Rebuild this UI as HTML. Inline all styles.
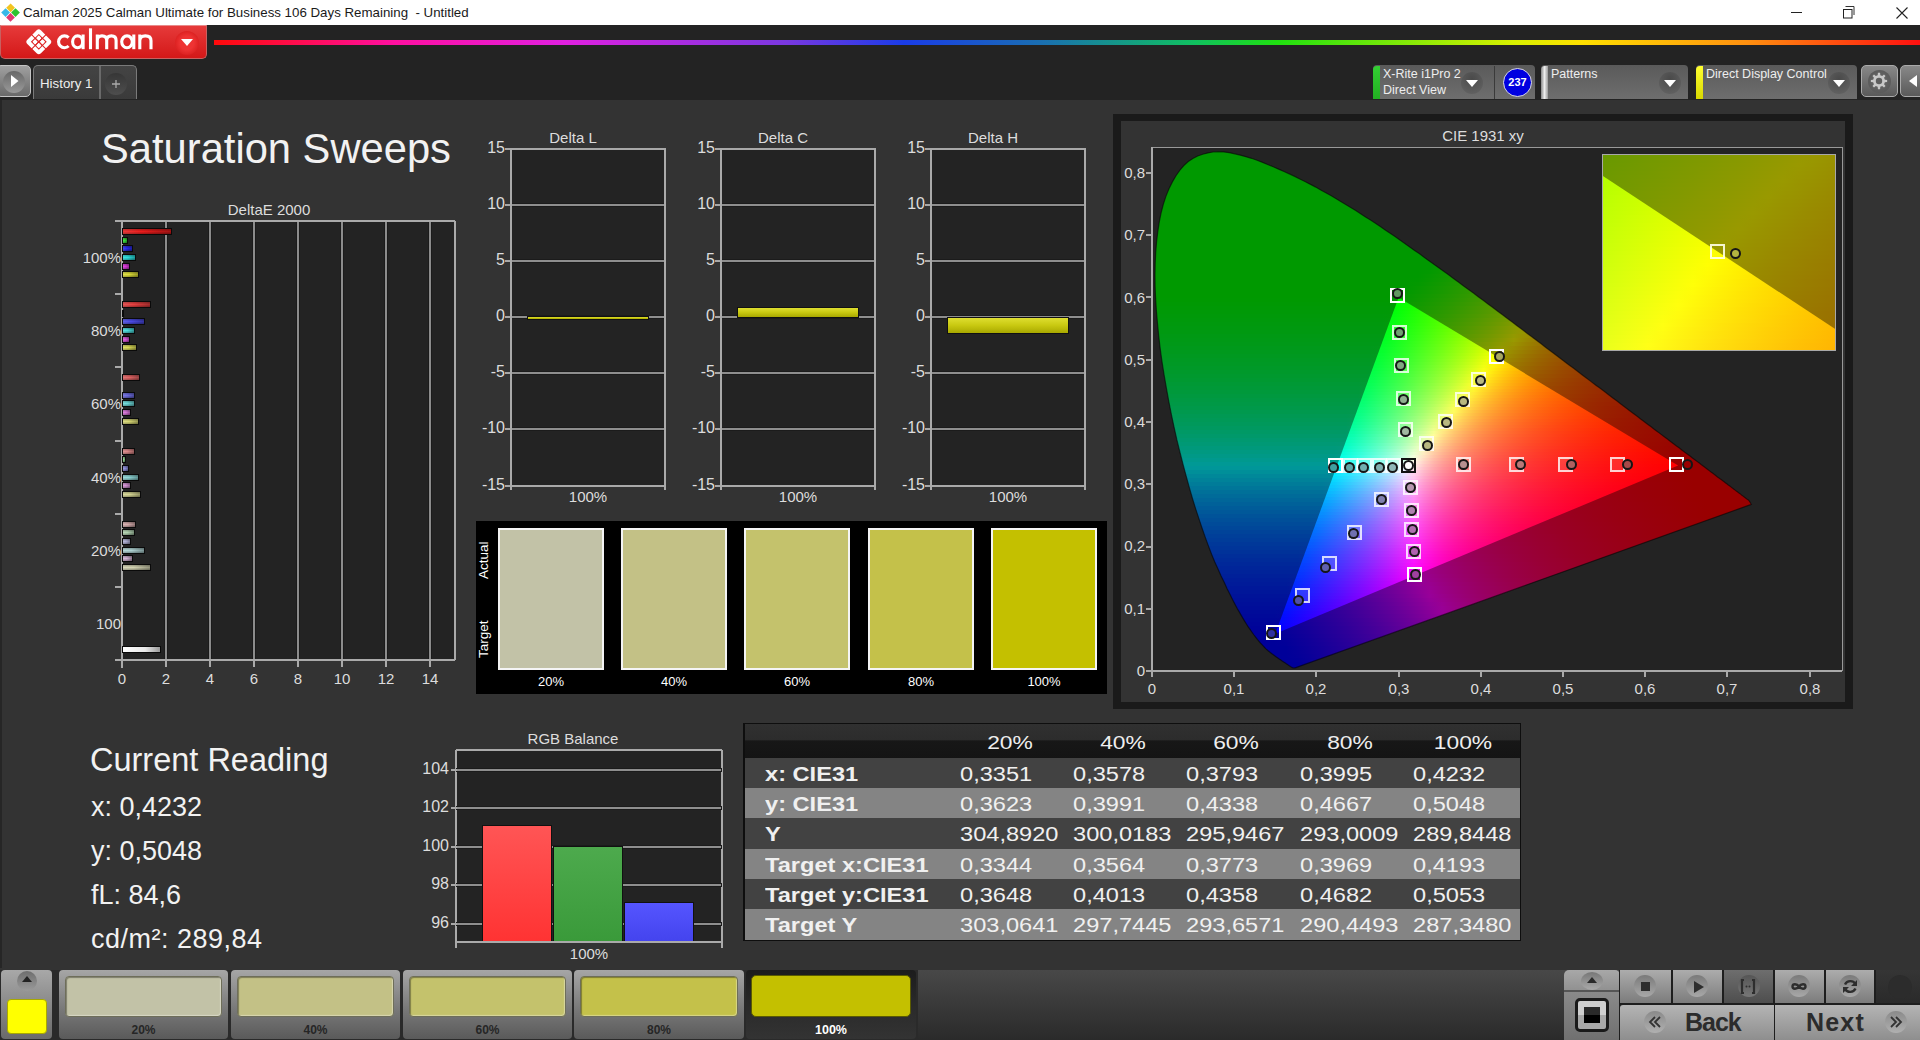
<!DOCTYPE html><html><head><meta charset="utf-8"><style>*{box-sizing:border-box}
html,body{margin:0;padding:0}
body{width:1920px;height:1040px;position:relative;overflow:hidden;background:#333;font-family:"Liberation Sans", sans-serif;}
.a{position:absolute}
.t{position:absolute;white-space:nowrap;line-height:1}
.rows>div{position:absolute;left:0;width:100%}
</style></head><body><div class="a" style="left:0;top:0;width:1920px;height:25px;background:#fff"></div><svg class="a" style="left:0;top:0" width="24" height="24"><path d="M10.6 3.4L15.0 7.8 10.6 12.2 6.2 7.8z" fill="#f2c420"/><path d="M15.5 8.2L19.9 12.6 15.5 17.0 11.1 12.6z" fill="#2ec42e"/><path d="M10.5 13.0L14.9 17.4 10.5 21.8 6.1 17.4z" fill="#e23a70"/><path d="M5.6 8.2L10.0 12.6 5.6 17.0 1.2 12.6z" fill="#38b8e8"/></svg><div class="t" style="left:23px;top:6px;font-size:13.3px;color:#1a1a1a">Calman 2025 Calman Ultimate for Business 106 Days Remaining &nbsp;- Untitled</div><div class="a" style="left:1791px;top:12px;width:11px;height:1px;background:#222"></div><svg class="a" style="left:1840px;top:4px" width="20" height="16" viewBox="0 0 20 16"><path d="M5.5 2.5h8.5v8.5" fill="none" stroke="#333" stroke-width="1"/><rect x="3.5" y="5.5" width="8.5" height="8.5" fill="none" stroke="#222" stroke-width="1"/></svg><svg class="a" style="left:1895px;top:6px" width="14" height="14" viewBox="0 0 14 14"><path d="M1.5 1.5l11 11M12.5 1.5l-11 11" stroke="#222" stroke-width="1.1"/></svg><div class="a" style="left:0;top:25px;width:1920px;height:75px;background:#232323"></div><div class="a" style="left:0;top:25px;width:207px;height:34px;background:linear-gradient(#e63a3a,#d41818);border:1px solid #c86060;border-top-color:#e88a8a;border-radius:0 0 5px 5px"></div><svg class="a" style="left:0;top:26px" width="207" height="33" viewBox="0 26 207 33"><g transform="translate(38.8 41.8) rotate(45)"><rect x="-9.6" y="-9.6" width="19.2" height="19.2" rx="3" fill="#fff"/><rect x="-5.6" y="-5.6" width="11.2" height="11.2" fill="#dd2424"/><rect x="-4.6" y="-4.6" width="4.1" height="4.1" rx="0.8" fill="#fff"/><rect x="0.5" y="-4.6" width="4.1" height="4.1" rx="0.8" fill="#fff"/><rect x="-4.6" y="0.5" width="4.1" height="4.1" rx="0.8" fill="#fff"/><rect x="0.5" y="0.5" width="4.1" height="4.1" rx="0.8" fill="#fff"/><path d="M-11 0H11M0 -11V11" stroke="#dd2424" stroke-width="1"/></g><g fill="none" stroke="#fff" stroke-width="3.1"><path d="M68.6 37.6A5.9 5.9 0 1 0 68.6 46"/><ellipse cx="77.6" cy="41.8" rx="5" ry="5.9"/><path d="M83.1 34.5V49.2"/><path d="M90.5 28.3V49.2"/><path d="M97.3 34.5V49.2M97.3 40.5C97.3 37.5 99 35.9 102 35.9S106.7 37.5 106.7 40.5V49.2M106.7 40.5C106.7 37.5 108.4 35.9 111.4 35.9S116.1 37.5 116.1 40.5V49.2"/><ellipse cx="127" cy="41.8" rx="5.3" ry="5.9"/><path d="M133.8 34.5V49.2"/><path d="M139.8 34.5V49.2M139.8 40.8C139.8 37.6 141.9 35.9 145.4 35.9S151 37.6 151 40.8V49.2"/></g></svg><div class="a" style="left:175px;top:31px;width:24px;height:24px;border-radius:50%;background:radial-gradient(#e33 40%,#c11 100%)"></div><svg class="a" style="left:180px;top:38px" width="14" height="10"><path d="M1 1h12l-6 7z" fill="#fff"/></svg><div class="a" style="left:214px;top:40px;width:1706px;height:5px;background:linear-gradient(90deg,#ff0a0a 0px,#ff10a0 180px,#e020e0 350px,#7a38e0 572px,#1a3ce8 690px,#1a70b0 830px,#10c060 980px,#20e010 1064px,#d8f000 1300px,#ffe000 1368px,#ff9010 1533px,#ff1010 1706px)"></div><div class="a" style="left:-4px;top:65px;width:35px;height:32px;border-radius:5px;background:linear-gradient(#a0a0a0,#6a6a6a);border:1.5px solid #c4c4c4"></div><div class="a" style="left:3px;top:71px;width:22px;height:22px;border-radius:50%;background:linear-gradient(#686868,#9a9a9a)"></div><svg class="a" style="left:10px;top:74px" width="10" height="14"><path d="M1 1l7.5 6-7.5 6z" fill="#fff"/></svg><div class="a" style="left:33px;top:65px;width:104px;height:34px;border-radius:5px 5px 0 0;background:linear-gradient(#444,#3a3a3a);border:1.5px solid #7a7a7a;border-bottom:none"></div><div class="a" style="left:99px;top:66px;width:1.5px;height:33px;background:#6a6a6a"></div><div class="t" style="left:40px;top:77px;font-size:13.3px;color:#eee">History 1</div><div class="a" style="left:105px;top:73px;width:22px;height:22px;border-radius:50%;background:linear-gradient(#363636,#4e4e4e)"></div><svg class="a" style="left:110px;top:78px" width="12" height="12"><path d="M6 2v8M2 6h8" stroke="#aaa" stroke-width="1.3"/></svg><div class="a" style="left:1373px;top:65px;width:162px;height:34px;border-radius:4px 4px 0 0;background:linear-gradient(#5a5a5a,#6e6e6e)"></div><div class="a" style="left:1373px;top:66px;width:7px;height:33px;border-radius:4px 0 0 0;background:linear-gradient(#33d033,#22b022)"></div><div class="t" style="left:1383px;top:68px;font-size:12.5px;color:#eee">X-Rite i1Pro 2</div><div class="t" style="left:1383px;top:84px;font-size:12.5px;color:#eee">Direct View</div><div class="a" style="left:1461px;top:72px;width:22px;height:22px;border-radius:50%;background:radial-gradient(circle at 50% 30%,#4a4a4a,#666)"></div><svg class="a" style="left:1465px;top:79px" width="14" height="9"><path d="M1 1h12l-6 7z" fill="#fff"/></svg><div class="a" style="left:1494px;top:66px;width:1px;height:33px;background:#3a3a3a"></div><div class="a" style="left:1503px;top:68px;width:29px;height:29px;border-radius:50%;background:#0000e0;border:1.5px solid #ddd"></div><div class="t" style="left:1503px;top:77px;width:29px;text-align:center;font-size:11px;font-weight:bold;color:#fff">237</div><div class="a" style="left:1541px;top:65px;width:147px;height:34px;border-radius:4px 4px 0 0;background:linear-gradient(#5a5a5a,#6e6e6e)"></div><div class="a" style="left:1541px;top:66px;width:7px;height:33px;border-radius:4px 0 0 0;background:linear-gradient(90deg,#888,#eee,#999)"></div><div class="t" style="left:1551px;top:68px;font-size:12.5px;color:#eee">Patterns</div><div class="a" style="left:1659px;top:72px;width:22px;height:22px;border-radius:50%;background:radial-gradient(circle at 50% 30%,#4a4a4a,#666)"></div><svg class="a" style="left:1663px;top:79px" width="14" height="9"><path d="M1 1h12l-6 7z" fill="#fff"/></svg><div class="a" style="left:1696px;top:65px;width:161px;height:34px;border-radius:4px 4px 0 0;background:linear-gradient(#5a5a5a,#6e6e6e)"></div><div class="a" style="left:1696px;top:66px;width:7px;height:33px;border-radius:4px 0 0 0;background:linear-gradient(#ffff30,#d8d800)"></div><div class="t" style="left:1706px;top:68px;font-size:12.5px;color:#eee">Direct Display Control</div><div class="a" style="left:1828px;top:72px;width:22px;height:22px;border-radius:50%;background:radial-gradient(circle at 50% 30%,#4a4a4a,#666)"></div><svg class="a" style="left:1832px;top:79px" width="14" height="9"><path d="M1 1h12l-6 7z" fill="#fff"/></svg><div class="a" style="left:1861px;top:65px;width:37px;height:32px;border-radius:5px;background:linear-gradient(#888,#5a5a5a);border:1px solid #aaa"></div><div class="a" style="left:1868px;top:70px;width:23px;height:23px;border-radius:50%;background:radial-gradient(#6a6a6a,#555)"></div><svg class="a" style="left:1868px;top:70px" width="22" height="22"><path d="M16.86 9.69 L19.13 9.94 L19.13 12.06 L16.86 12.31 L16.07 14.21 L17.50 16.00 L16.00 17.50 L14.21 16.07 L12.31 16.86 L12.06 19.13 L9.94 19.13 L9.69 16.86 L7.79 16.07 L6.00 17.50 L4.50 16.00 L5.93 14.21 L5.14 12.31 L2.87 12.06 L2.87 9.94 L5.14 9.69 L5.93 7.79 L4.50 6.00 L6.00 4.50 L7.79 5.93 L9.69 5.14 L9.94 2.87 L12.06 2.87 L12.31 5.14 L14.21 5.93 L16.00 4.50 L17.50 6.00 L16.07 7.79Z" fill="#c8c8c8"/><circle cx="11" cy="11" r="3.2" fill="#5e5e5e"/></svg><div class="a" style="left:1900px;top:65px;width:30px;height:32px;border-radius:5px;background:linear-gradient(#888,#5a5a5a);border:1px solid #aaa"></div><svg class="a" style="left:1908px;top:74px" width="10" height="14"><path d="M9 1L1 7l8 6z" fill="#fff"/></svg><div class="a" style="left:0;top:100px;width:1920px;height:870px;background:#333"></div><div class="a" style="left:0;top:100px;width:2px;height:870px;background:#262626"></div><div class="t" style="left:101px;top:128px;font-size:41.7px;color:#f2f2f2">Saturation Sweeps</div><div class="t" style="left:169px;top:202px;width:200px;text-align:center;font-size:15px;color:#ddd">DeltaE 2000</div><div class="a" style="left:122px;top:221px;width:333px;height:439px;background:#232323"></div><div class="a" style="left:165px;top:222px;width:2px;height:437px;background:#8c8c8c;box-shadow:0 0 0 1px #1b1b1b"></div><div class="a" style="left:209px;top:222px;width:2px;height:437px;background:#8c8c8c;box-shadow:0 0 0 1px #1b1b1b"></div><div class="a" style="left:253px;top:222px;width:2px;height:437px;background:#8c8c8c;box-shadow:0 0 0 1px #1b1b1b"></div><div class="a" style="left:297px;top:222px;width:2px;height:437px;background:#8c8c8c;box-shadow:0 0 0 1px #1b1b1b"></div><div class="a" style="left:341px;top:222px;width:2px;height:437px;background:#8c8c8c;box-shadow:0 0 0 1px #1b1b1b"></div><div class="a" style="left:385px;top:222px;width:2px;height:437px;background:#8c8c8c;box-shadow:0 0 0 1px #1b1b1b"></div><div class="a" style="left:429px;top:222px;width:2px;height:437px;background:#8c8c8c;box-shadow:0 0 0 1px #1b1b1b"></div><div class="a" style="left:454px;top:221px;width:2px;height:439px;background:#aaa"></div><div class="a" style="left:115px;top:220px;width:340px;height:2px;background:#aaa"></div><div class="a" style="left:121px;top:221px;width:2px;height:447px;background:#aaa"></div><div class="a" style="left:115px;top:659px;width:340px;height:2px;background:#aaa"></div><div class="a" style="left:115px;top:293px;width:7px;height:2px;background:#aaa"></div><div class="a" style="left:115px;top:366px;width:7px;height:2px;background:#aaa"></div><div class="a" style="left:115px;top:440px;width:7px;height:2px;background:#aaa"></div><div class="a" style="left:115px;top:513px;width:7px;height:2px;background:#aaa"></div><div class="a" style="left:115px;top:586px;width:7px;height:2px;background:#aaa"></div><div class="a" style="left:121px;top:660px;width:2px;height:7px;background:#aaa"></div><div class="t" style="left:102px;top:671px;width:40px;text-align:center;font-size:15px;color:#ddd">0</div><div class="a" style="left:165px;top:660px;width:2px;height:7px;background:#aaa"></div><div class="t" style="left:146px;top:671px;width:40px;text-align:center;font-size:15px;color:#ddd">2</div><div class="a" style="left:209px;top:660px;width:2px;height:7px;background:#aaa"></div><div class="t" style="left:190px;top:671px;width:40px;text-align:center;font-size:15px;color:#ddd">4</div><div class="a" style="left:253px;top:660px;width:2px;height:7px;background:#aaa"></div><div class="t" style="left:234px;top:671px;width:40px;text-align:center;font-size:15px;color:#ddd">6</div><div class="a" style="left:297px;top:660px;width:2px;height:7px;background:#aaa"></div><div class="t" style="left:278px;top:671px;width:40px;text-align:center;font-size:15px;color:#ddd">8</div><div class="a" style="left:341px;top:660px;width:2px;height:7px;background:#aaa"></div><div class="t" style="left:322px;top:671px;width:40px;text-align:center;font-size:15px;color:#ddd">10</div><div class="a" style="left:385px;top:660px;width:2px;height:7px;background:#aaa"></div><div class="t" style="left:366px;top:671px;width:40px;text-align:center;font-size:15px;color:#ddd">12</div><div class="a" style="left:429px;top:660px;width:2px;height:7px;background:#aaa"></div><div class="t" style="left:410px;top:671px;width:40px;text-align:center;font-size:15px;color:#ddd">14</div><div class="t" style="left:60px;top:250px;width:61px;text-align:right;font-size:15px;color:#ddd">100%</div><div class="t" style="left:60px;top:323px;width:61px;text-align:right;font-size:15px;color:#ddd">80%</div><div class="t" style="left:60px;top:396px;width:61px;text-align:right;font-size:15px;color:#ddd">60%</div><div class="t" style="left:60px;top:470px;width:61px;text-align:right;font-size:15px;color:#ddd">40%</div><div class="t" style="left:60px;top:543px;width:61px;text-align:right;font-size:15px;color:#ddd">20%</div><div class="t" style="left:60px;top:616px;width:61px;text-align:right;font-size:15px;color:#ddd">100</div><div class="a" style="left:122px;top:228px;width:50px;height:7px;background:linear-gradient(90deg,rgba(255,255,255,0.12),rgba(0,0,0,0) 40%,rgba(0,0,0,0.3)),linear-gradient(#ad1414,#ea1c1c 50%,#a31313);border:1px solid #0a0a0a"></div><div class="a" style="left:122px;top:237px;width:6px;height:7px;background:linear-gradient(90deg,rgba(255,255,255,0.12),rgba(0,0,0,0) 40%,rgba(0,0,0,0.3)),linear-gradient(#29a329,#37dc37 50%,#269926);border:1px solid #0a0a0a"></div><div class="a" style="left:122px;top:245px;width:11px;height:7px;background:linear-gradient(90deg,rgba(255,255,255,0.12),rgba(0,0,0,0) 40%,rgba(0,0,0,0.3)),linear-gradient(#1f1fad,#2929ea 50%,#1d1da3);border:1px solid #0a0a0a"></div><div class="a" style="left:122px;top:254px;width:14px;height:7px;background:linear-gradient(90deg,rgba(255,255,255,0.12),rgba(0,0,0,0) 40%,rgba(0,0,0,0.3)),linear-gradient(#1fa3a3,#29dcdc 50%,#1d9999);border:1px solid #0a0a0a"></div><div class="a" style="left:122px;top:263px;width:8px;height:7px;background:linear-gradient(90deg,rgba(255,255,255,0.12),rgba(0,0,0,0) 40%,rgba(0,0,0,0.3)),linear-gradient(#a329a3,#dc37dc 50%,#992699);border:1px solid #0a0a0a"></div><div class="a" style="left:122px;top:271px;width:17px;height:7px;background:linear-gradient(90deg,rgba(255,255,255,0.12),rgba(0,0,0,0) 40%,rgba(0,0,0,0.3)),linear-gradient(#a3a329,#dcdc37 50%,#999926);border:1px solid #0a0a0a"></div><div class="a" style="left:122px;top:301px;width:29px;height:7px;background:linear-gradient(90deg,rgba(255,255,255,0.12),rgba(0,0,0,0) 40%,rgba(0,0,0,0.3)),linear-gradient(#a92f2f,#e53f3f 50%,#9f2c2c);border:1px solid #0a0a0a"></div><div class="a" style="left:122px;top:310px;width:2px;height:7px;background:linear-gradient(90deg,rgba(255,255,255,0.12),rgba(0,0,0,0) 40%,rgba(0,0,0,0.3)),linear-gradient(#3fa13f,#55da55 50%,#3b973b);border:1px solid #0a0a0a"></div><div class="a" style="left:122px;top:318px;width:23px;height:7px;background:linear-gradient(90deg,rgba(255,255,255,0.12),rgba(0,0,0,0) 40%,rgba(0,0,0,0.3)),linear-gradient(#3737a9,#4a4ae5 50%,#34349f);border:1px solid #0a0a0a"></div><div class="a" style="left:122px;top:327px;width:13px;height:7px;background:linear-gradient(90deg,rgba(255,255,255,0.12),rgba(0,0,0,0) 40%,rgba(0,0,0,0.3)),linear-gradient(#37a1a1,#4adada 50%,#349797);border:1px solid #0a0a0a"></div><div class="a" style="left:122px;top:336px;width:8px;height:7px;background:linear-gradient(90deg,rgba(255,255,255,0.12),rgba(0,0,0,0) 40%,rgba(0,0,0,0.3)),linear-gradient(#a13fa1,#da55da 50%,#973b97);border:1px solid #0a0a0a"></div><div class="a" style="left:122px;top:344px;width:15px;height:7px;background:linear-gradient(90deg,rgba(255,255,255,0.12),rgba(0,0,0,0) 40%,rgba(0,0,0,0.3)),linear-gradient(#a1a13f,#dada55 50%,#97973b);border:1px solid #0a0a0a"></div><div class="a" style="left:122px;top:374px;width:18px;height:7px;background:linear-gradient(90deg,rgba(255,255,255,0.12),rgba(0,0,0,0) 40%,rgba(0,0,0,0.3)),linear-gradient(#a54949,#df6363 50%,#9b4545);border:1px solid #0a0a0a"></div><div class="a" style="left:122px;top:392px;width:13px;height:7px;background:linear-gradient(90deg,rgba(255,255,255,0.12),rgba(0,0,0,0) 40%,rgba(0,0,0,0.3)),linear-gradient(#5050a5,#6b6bdf 50%,#4b4b9b);border:1px solid #0a0a0a"></div><div class="a" style="left:122px;top:400px;width:13px;height:7px;background:linear-gradient(90deg,rgba(255,255,255,0.12),rgba(0,0,0,0) 40%,rgba(0,0,0,0.3)),linear-gradient(#509f9f,#6bd7d7 50%,#4b9595);border:1px solid #0a0a0a"></div><div class="a" style="left:122px;top:409px;width:9px;height:7px;background:linear-gradient(90deg,rgba(255,255,255,0.12),rgba(0,0,0,0) 40%,rgba(0,0,0,0.3)),linear-gradient(#9f569f,#d774d7 50%,#955095);border:1px solid #0a0a0a"></div><div class="a" style="left:122px;top:418px;width:17px;height:7px;background:linear-gradient(90deg,rgba(255,255,255,0.12),rgba(0,0,0,0) 40%,rgba(0,0,0,0.3)),linear-gradient(#9f9f56,#d7d774 50%,#959550);border:1px solid #0a0a0a"></div><div class="a" style="left:122px;top:448px;width:13px;height:7px;background:linear-gradient(90deg,rgba(255,255,255,0.12),rgba(0,0,0,0) 40%,rgba(0,0,0,0.3)),linear-gradient(#a16464,#da8787 50%,#975e5e);border:1px solid #0a0a0a"></div><div class="a" style="left:122px;top:456px;width:4px;height:7px;background:linear-gradient(90deg,rgba(255,255,255,0.12),rgba(0,0,0,0) 40%,rgba(0,0,0,0.3)),linear-gradient(#6c9d6c,#92d492 50%,#659365);border:1px solid #0a0a0a"></div><div class="a" style="left:122px;top:465px;width:7px;height:7px;background:linear-gradient(90deg,rgba(255,255,255,0.12),rgba(0,0,0,0) 40%,rgba(0,0,0,0.3)),linear-gradient(#6868a1,#8c8cda 50%,#626297);border:1px solid #0a0a0a"></div><div class="a" style="left:122px;top:474px;width:17px;height:7px;background:linear-gradient(90deg,rgba(255,255,255,0.12),rgba(0,0,0,0) 40%,rgba(0,0,0,0.3)),linear-gradient(#689d9d,#8cd4d4 50%,#629393);border:1px solid #0a0a0a"></div><div class="a" style="left:122px;top:482px;width:9px;height:7px;background:linear-gradient(90deg,rgba(255,255,255,0.12),rgba(0,0,0,0) 40%,rgba(0,0,0,0.3)),linear-gradient(#9d6c9d,#d492d4 50%,#936593);border:1px solid #0a0a0a"></div><div class="a" style="left:122px;top:491px;width:19px;height:7px;background:linear-gradient(90deg,rgba(255,255,255,0.12),rgba(0,0,0,0) 40%,rgba(0,0,0,0.3)),linear-gradient(#9d9d6c,#d4d492 50%,#939365);border:1px solid #0a0a0a"></div><div class="a" style="left:122px;top:521px;width:14px;height:7px;background:linear-gradient(90deg,rgba(255,255,255,0.12),rgba(0,0,0,0) 40%,rgba(0,0,0,0.3)),linear-gradient(#9d7e7e,#d4abab 50%,#937777);border:1px solid #0a0a0a"></div><div class="a" style="left:122px;top:529px;width:13px;height:7px;background:linear-gradient(90deg,rgba(255,255,255,0.12),rgba(0,0,0,0) 40%,rgba(0,0,0,0.3)),linear-gradient(#839b83,#b0d1b0 50%,#7a917a);border:1px solid #0a0a0a"></div><div class="a" style="left:122px;top:538px;width:9px;height:7px;background:linear-gradient(90deg,rgba(255,255,255,0.12),rgba(0,0,0,0) 40%,rgba(0,0,0,0.3)),linear-gradient(#81819d,#aeaed4 50%,#787893);border:1px solid #0a0a0a"></div><div class="a" style="left:122px;top:547px;width:23px;height:7px;background:linear-gradient(90deg,rgba(255,255,255,0.12),rgba(0,0,0,0) 40%,rgba(0,0,0,0.3)),linear-gradient(#819b9b,#aed1d1 50%,#789191);border:1px solid #0a0a0a"></div><div class="a" style="left:122px;top:555px;width:11px;height:7px;background:linear-gradient(90deg,rgba(255,255,255,0.12),rgba(0,0,0,0) 40%,rgba(0,0,0,0.3)),linear-gradient(#9b839b,#d1b0d1 50%,#917a91);border:1px solid #0a0a0a"></div><div class="a" style="left:122px;top:564px;width:29px;height:7px;background:linear-gradient(90deg,rgba(255,255,255,0.12),rgba(0,0,0,0) 40%,rgba(0,0,0,0.3)),linear-gradient(#9b9b83,#d1d1b0 50%,#91917a);border:1px solid #0a0a0a"></div><div class="a" style="left:122px;top:646px;width:39px;height:7px;background:linear-gradient(90deg,#fff,#e8e8e8 60%,#999);border:1px solid #0a0a0a"></div><div class="t" style="left:496px;top:130px;width:154px;text-align:center;font-size:15px;color:#ddd">Delta L</div><div class="a" style="left:511px;top:149px;width:154px;height:337px;background:#232323"></div><div class="a" style="left:505px;top:148px;width:161px;height:2px;background:#a8a8a8"></div><div class="t" style="left:465px;top:140px;width:40px;text-align:right;font-size:16px;color:#ddd">15</div><div class="a" style="left:512px;top:204px;width:152px;height:2px;background:#8e8e8e;box-shadow:0 0 0 1px #1b1b1b"></div><div class="a" style="left:505px;top:204px;width:7px;height:2px;background:#a8a8a8"></div><div class="t" style="left:465px;top:196px;width:40px;text-align:right;font-size:16px;color:#ddd">10</div><div class="a" style="left:512px;top:260px;width:152px;height:2px;background:#8e8e8e;box-shadow:0 0 0 1px #1b1b1b"></div><div class="a" style="left:505px;top:260px;width:7px;height:2px;background:#a8a8a8"></div><div class="t" style="left:465px;top:252px;width:40px;text-align:right;font-size:16px;color:#ddd">5</div><div class="a" style="left:512px;top:316px;width:152px;height:2px;background:#8e8e8e;box-shadow:0 0 0 1px #1b1b1b"></div><div class="a" style="left:505px;top:316px;width:7px;height:2px;background:#a8a8a8"></div><div class="t" style="left:465px;top:308px;width:40px;text-align:right;font-size:16px;color:#ddd">0</div><div class="a" style="left:512px;top:372px;width:152px;height:2px;background:#8e8e8e;box-shadow:0 0 0 1px #1b1b1b"></div><div class="a" style="left:505px;top:372px;width:7px;height:2px;background:#a8a8a8"></div><div class="t" style="left:465px;top:364px;width:40px;text-align:right;font-size:16px;color:#ddd">-5</div><div class="a" style="left:512px;top:428px;width:152px;height:2px;background:#8e8e8e;box-shadow:0 0 0 1px #1b1b1b"></div><div class="a" style="left:505px;top:428px;width:7px;height:2px;background:#a8a8a8"></div><div class="t" style="left:465px;top:420px;width:40px;text-align:right;font-size:16px;color:#ddd">-10</div><div class="a" style="left:505px;top:485px;width:161px;height:2px;background:#a8a8a8"></div><div class="t" style="left:465px;top:477px;width:40px;text-align:right;font-size:16px;color:#ddd">-15</div><div class="a" style="left:510px;top:149px;width:2px;height:341px;background:#aaa"></div><div class="a" style="left:664px;top:149px;width:2px;height:341px;background:#aaa"></div><div class="t" style="left:511px;top:489px;width:154px;text-align:center;font-size:15px;color:#ddd">100%</div><div class="a" style="left:527px;top:316px;width:122px;height:4px;background:linear-gradient(#dede30,#c8c810 50%,#a8a800);border:1px solid #111"></div><div class="t" style="left:706px;top:130px;width:154px;text-align:center;font-size:15px;color:#ddd">Delta C</div><div class="a" style="left:721px;top:149px;width:154px;height:337px;background:#232323"></div><div class="a" style="left:715px;top:148px;width:161px;height:2px;background:#a8a8a8"></div><div class="t" style="left:675px;top:140px;width:40px;text-align:right;font-size:16px;color:#ddd">15</div><div class="a" style="left:722px;top:204px;width:152px;height:2px;background:#8e8e8e;box-shadow:0 0 0 1px #1b1b1b"></div><div class="a" style="left:715px;top:204px;width:7px;height:2px;background:#a8a8a8"></div><div class="t" style="left:675px;top:196px;width:40px;text-align:right;font-size:16px;color:#ddd">10</div><div class="a" style="left:722px;top:260px;width:152px;height:2px;background:#8e8e8e;box-shadow:0 0 0 1px #1b1b1b"></div><div class="a" style="left:715px;top:260px;width:7px;height:2px;background:#a8a8a8"></div><div class="t" style="left:675px;top:252px;width:40px;text-align:right;font-size:16px;color:#ddd">5</div><div class="a" style="left:722px;top:316px;width:152px;height:2px;background:#8e8e8e;box-shadow:0 0 0 1px #1b1b1b"></div><div class="a" style="left:715px;top:316px;width:7px;height:2px;background:#a8a8a8"></div><div class="t" style="left:675px;top:308px;width:40px;text-align:right;font-size:16px;color:#ddd">0</div><div class="a" style="left:722px;top:372px;width:152px;height:2px;background:#8e8e8e;box-shadow:0 0 0 1px #1b1b1b"></div><div class="a" style="left:715px;top:372px;width:7px;height:2px;background:#a8a8a8"></div><div class="t" style="left:675px;top:364px;width:40px;text-align:right;font-size:16px;color:#ddd">-5</div><div class="a" style="left:722px;top:428px;width:152px;height:2px;background:#8e8e8e;box-shadow:0 0 0 1px #1b1b1b"></div><div class="a" style="left:715px;top:428px;width:7px;height:2px;background:#a8a8a8"></div><div class="t" style="left:675px;top:420px;width:40px;text-align:right;font-size:16px;color:#ddd">-10</div><div class="a" style="left:715px;top:485px;width:161px;height:2px;background:#a8a8a8"></div><div class="t" style="left:675px;top:477px;width:40px;text-align:right;font-size:16px;color:#ddd">-15</div><div class="a" style="left:720px;top:149px;width:2px;height:341px;background:#aaa"></div><div class="a" style="left:874px;top:149px;width:2px;height:341px;background:#aaa"></div><div class="t" style="left:721px;top:489px;width:154px;text-align:center;font-size:15px;color:#ddd">100%</div><div class="a" style="left:737px;top:307px;width:122px;height:11px;background:linear-gradient(#dede30,#c8c810 50%,#a8a800);border:1px solid #111"></div><div class="t" style="left:916px;top:130px;width:154px;text-align:center;font-size:15px;color:#ddd">Delta H</div><div class="a" style="left:931px;top:149px;width:154px;height:337px;background:#232323"></div><div class="a" style="left:925px;top:148px;width:161px;height:2px;background:#a8a8a8"></div><div class="t" style="left:885px;top:140px;width:40px;text-align:right;font-size:16px;color:#ddd">15</div><div class="a" style="left:932px;top:204px;width:152px;height:2px;background:#8e8e8e;box-shadow:0 0 0 1px #1b1b1b"></div><div class="a" style="left:925px;top:204px;width:7px;height:2px;background:#a8a8a8"></div><div class="t" style="left:885px;top:196px;width:40px;text-align:right;font-size:16px;color:#ddd">10</div><div class="a" style="left:932px;top:260px;width:152px;height:2px;background:#8e8e8e;box-shadow:0 0 0 1px #1b1b1b"></div><div class="a" style="left:925px;top:260px;width:7px;height:2px;background:#a8a8a8"></div><div class="t" style="left:885px;top:252px;width:40px;text-align:right;font-size:16px;color:#ddd">5</div><div class="a" style="left:932px;top:316px;width:152px;height:2px;background:#8e8e8e;box-shadow:0 0 0 1px #1b1b1b"></div><div class="a" style="left:925px;top:316px;width:7px;height:2px;background:#a8a8a8"></div><div class="t" style="left:885px;top:308px;width:40px;text-align:right;font-size:16px;color:#ddd">0</div><div class="a" style="left:932px;top:372px;width:152px;height:2px;background:#8e8e8e;box-shadow:0 0 0 1px #1b1b1b"></div><div class="a" style="left:925px;top:372px;width:7px;height:2px;background:#a8a8a8"></div><div class="t" style="left:885px;top:364px;width:40px;text-align:right;font-size:16px;color:#ddd">-5</div><div class="a" style="left:932px;top:428px;width:152px;height:2px;background:#8e8e8e;box-shadow:0 0 0 1px #1b1b1b"></div><div class="a" style="left:925px;top:428px;width:7px;height:2px;background:#a8a8a8"></div><div class="t" style="left:885px;top:420px;width:40px;text-align:right;font-size:16px;color:#ddd">-10</div><div class="a" style="left:925px;top:485px;width:161px;height:2px;background:#a8a8a8"></div><div class="t" style="left:885px;top:477px;width:40px;text-align:right;font-size:16px;color:#ddd">-15</div><div class="a" style="left:930px;top:149px;width:2px;height:341px;background:#aaa"></div><div class="a" style="left:1084px;top:149px;width:2px;height:341px;background:#aaa"></div><div class="t" style="left:931px;top:489px;width:154px;text-align:center;font-size:15px;color:#ddd">100%</div><div class="a" style="left:947px;top:317px;width:122px;height:17px;background:linear-gradient(#dede30,#c8c810 50%,#a8a800);border:1px solid #111"></div><div class="a" style="left:476px;top:521px;width:631px;height:173px;background:#000"></div><div class="t" style="left:477px;top:579px;font-size:13.5px;color:#fff;transform:rotate(-90deg);transform-origin:left top">Actual</div><div class="t" style="left:477px;top:658px;font-size:13.5px;color:#fff;transform:rotate(-90deg);transform-origin:left top">Target</div><div class="a" style="left:498px;top:528px;width:106px;height:142px;background:#c2c2a7;border:2px solid #f4f4f4"></div><div class="t" style="left:498px;top:675px;width:106px;text-align:center;font-size:13px;color:#fff">20%</div><div class="a" style="left:621px;top:528px;width:106px;height:142px;background:#c3c186;border:2px solid #f4f4f4"></div><div class="t" style="left:621px;top:675px;width:106px;text-align:center;font-size:13px;color:#fff">40%</div><div class="a" style="left:744px;top:528px;width:106px;height:142px;background:#c4c26c;border:2px solid #f4f4f4"></div><div class="t" style="left:744px;top:675px;width:106px;text-align:center;font-size:13px;color:#fff">60%</div><div class="a" style="left:868px;top:528px;width:106px;height:142px;background:#c4c14a;border:2px solid #f4f4f4"></div><div class="t" style="left:868px;top:675px;width:106px;text-align:center;font-size:13px;color:#fff">80%</div><div class="a" style="left:991px;top:528px;width:106px;height:142px;background:#c4c000;border:2px solid #f4f4f4"></div><div class="t" style="left:991px;top:675px;width:106px;text-align:center;font-size:13px;color:#fff">100%</div><div class="a" style="left:1113px;top:114px;width:740px;height:595px;background:#1a1a1a"></div><div class="a" style="left:1121px;top:121px;width:724px;height:581px;background:#333"></div><div class="t" style="left:1121px;top:128px;width:724px;text-align:center;font-size:15px;color:#ddd">CIE 1931 xy</div><div class="a" style="left:1152px;top:147px;width:690px;height:524px;background:#232323"></div><div class="a" style="left:1152px;top:147px;width:690px;height:1px;background:#999"></div><div class="a" style="left:1842px;top:147px;width:1px;height:524px;background:#999"></div><div class="a" style="left:1151px;top:147px;width:2px;height:530px;background:#aaa"></div><div class="a" style="left:1146px;top:670px;width:696px;height:2px;background:#aaa"></div><div class="a" style="left:1151px;top:671px;width:2px;height:6px;background:#aaa"></div><div class="t" style="left:1127px;top:681px;width:50px;text-align:center;font-size:15px;color:#ddd">0</div><div class="a" style="left:1146px;top:670px;width:6px;height:2px;background:#aaa"></div><div class="t" style="left:1115px;top:663px;width:30px;text-align:right;font-size:15px;color:#ddd">0</div><div class="a" style="left:1233px;top:671px;width:2px;height:6px;background:#aaa"></div><div class="t" style="left:1209px;top:681px;width:50px;text-align:center;font-size:15px;color:#ddd">0,1</div><div class="a" style="left:1146px;top:608px;width:6px;height:2px;background:#aaa"></div><div class="t" style="left:1115px;top:601px;width:30px;text-align:right;font-size:15px;color:#ddd">0,1</div><div class="a" style="left:1315px;top:671px;width:2px;height:6px;background:#aaa"></div><div class="t" style="left:1291px;top:681px;width:50px;text-align:center;font-size:15px;color:#ddd">0,2</div><div class="a" style="left:1146px;top:546px;width:6px;height:2px;background:#aaa"></div><div class="t" style="left:1115px;top:538px;width:30px;text-align:right;font-size:15px;color:#ddd">0,2</div><div class="a" style="left:1398px;top:671px;width:2px;height:6px;background:#aaa"></div><div class="t" style="left:1374px;top:681px;width:50px;text-align:center;font-size:15px;color:#ddd">0,3</div><div class="a" style="left:1146px;top:483px;width:6px;height:2px;background:#aaa"></div><div class="t" style="left:1115px;top:476px;width:30px;text-align:right;font-size:15px;color:#ddd">0,3</div><div class="a" style="left:1480px;top:671px;width:2px;height:6px;background:#aaa"></div><div class="t" style="left:1456px;top:681px;width:50px;text-align:center;font-size:15px;color:#ddd">0,4</div><div class="a" style="left:1146px;top:421px;width:6px;height:2px;background:#aaa"></div><div class="t" style="left:1115px;top:414px;width:30px;text-align:right;font-size:15px;color:#ddd">0,4</div><div class="a" style="left:1562px;top:671px;width:2px;height:6px;background:#aaa"></div><div class="t" style="left:1538px;top:681px;width:50px;text-align:center;font-size:15px;color:#ddd">0,5</div><div class="a" style="left:1146px;top:359px;width:6px;height:2px;background:#aaa"></div><div class="t" style="left:1115px;top:352px;width:30px;text-align:right;font-size:15px;color:#ddd">0,5</div><div class="a" style="left:1644px;top:671px;width:2px;height:6px;background:#aaa"></div><div class="t" style="left:1620px;top:681px;width:50px;text-align:center;font-size:15px;color:#ddd">0,6</div><div class="a" style="left:1146px;top:296px;width:6px;height:2px;background:#aaa"></div><div class="t" style="left:1115px;top:290px;width:30px;text-align:right;font-size:15px;color:#ddd">0,6</div><div class="a" style="left:1726px;top:671px;width:2px;height:6px;background:#aaa"></div><div class="t" style="left:1702px;top:681px;width:50px;text-align:center;font-size:15px;color:#ddd">0,7</div><div class="a" style="left:1146px;top:234px;width:6px;height:2px;background:#aaa"></div><div class="t" style="left:1115px;top:227px;width:30px;text-align:right;font-size:15px;color:#ddd">0,7</div><div class="a" style="left:1809px;top:671px;width:2px;height:6px;background:#aaa"></div><div class="t" style="left:1785px;top:681px;width:50px;text-align:center;font-size:15px;color:#ddd">0,8</div><div class="a" style="left:1146px;top:172px;width:6px;height:2px;background:#aaa"></div><div class="t" style="left:1115px;top:165px;width:30px;text-align:right;font-size:15px;color:#ddd">0,8</div><div class="a rows" style="left:1154px;top:150px;width:604px;height:520px;clip-path:polygon(141.1px 517.9px,141.1px 517.9px,141.1px 517.9px,141.0px 517.9px,141.0px 517.9px,140.9px 517.9px,140.9px 517.9px,140.8px 517.9px,140.8px 518.0px,140.7px 518.0px,140.6px 518.0px,140.6px 518.0px,140.5px 518.0px,140.4px 518.0px,140.3px 518.0px,140.2px 518.0px,140.1px 518.0px,140.0px 518.0px,139.9px 518.0px,139.7px 518.0px,139.6px 518.0px,139.5px 518.0px,139.3px 518.0px,139.1px 517.9px,138.9px 517.8px,138.6px 517.7px,138.3px 517.6px,138.0px 517.4px,137.7px 517.2px,137.3px 517.0px,136.8px 516.7px,136.3px 516.4px,135.8px 516.0px,135.3px 515.7px,134.6px 515.2px,133.9px 514.8px,133.1px 514.2px,132.3px 513.7px,131.4px 513.1px,130.4px 512.4px,129.3px 511.7px,128.1px 510.9px,126.8px 510.0px,125.2px 508.9px,123.5px 507.7px,121.6px 506.4px,119.7px 505.0px,117.9px 503.7px,116.3px 502.5px,115.0px 501.4px,113.8px 500.5px,112.8px 499.6px,111.7px 498.6px,110.6px 497.5px,109.4px 496.2px,108.0px 494.7px,106.5px 493.1px,105.0px 491.3px,103.4px 489.4px,101.8px 487.3px,100.0px 485.0px,98.2px 482.5px,96.4px 479.9px,94.4px 477.1px,92.4px 474.0px,90.3px 470.6px,88.1px 466.9px,85.8px 462.9px,83.4px 458.7px,81.0px 454.2px,78.4px 449.3px,75.8px 444.1px,73.0px 438.4px,70.2px 432.3px,67.1px 425.9px,64.0px 419.1px,60.8px 411.9px,57.6px 404.2px,54.5px 396.1px,51.3px 387.4px,48.1px 378.2px,44.9px 368.6px,41.6px 358.6px,38.4px 348.2px,35.3px 337.4px,32.2px 326.1px,29.0px 314.2px,25.9px 302.0px,22.8px 289.4px,20.0px 276.8px,17.3px 264.1px,14.8px 251.3px,12.4px 238.2px,10.1px 224.9px,8.0px 211.7px,6.2px 198.6px,4.7px 185.8px,3.5px 173.3px,2.4px 160.8px,1.6px 148.4px,1.1px 136.3px,1.0px 124.6px,1.2px 113.4px,1.7px 102.5px,2.6px 91.8px,3.8px 81.6px,5.3px 71.8px,7.2px 62.5px,9.4px 54.0px,12.0px 46.1px,15.0px 38.7px,18.4px 31.9px,22.0px 25.7px,25.9px 20.2px,29.9px 15.5px,34.3px 11.6px,38.9px 8.5px,43.7px 6.0px,48.8px 4.2px,53.9px 2.9px,59.1px 2.0px,64.3px 1.6px,69.7px 1.9px,75.2px 2.7px,80.7px 3.8px,86.3px 5.2px,91.8px 6.7px,97.4px 8.3px,103.0px 10.2px,108.6px 12.4px,114.2px 14.7px,119.7px 17.0px,125.2px 19.4px,130.5px 21.7px,135.8px 24.1px,141.1px 26.6px,146.3px 29.2px,151.4px 31.8px,156.5px 34.4px,161.7px 37.1px,166.7px 39.9px,171.8px 42.7px,176.8px 45.6px,181.8px 48.5px,186.7px 51.4px,191.7px 54.4px,196.7px 57.5px,201.7px 60.6px,206.6px 63.7px,211.5px 66.9px,216.5px 70.1px,221.4px 73.3px,226.3px 76.6px,231.2px 79.9px,236.1px 83.3px,241.0px 86.6px,245.9px 90.0px,250.8px 93.4px,255.7px 96.9px,260.6px 100.4px,265.5px 103.8px,270.4px 107.4px,275.3px 110.9px,280.2px 114.4px,285.1px 118.0px,290.0px 121.5px,294.9px 125.1px,299.8px 128.7px,304.7px 132.3px,309.6px 135.9px,314.5px 139.5px,319.4px 143.1px,324.2px 146.7px,329.1px 150.3px,334.0px 154.0px,338.8px 157.6px,343.7px 161.2px,348.5px 164.8px,353.4px 168.5px,358.2px 172.1px,363.0px 175.7px,367.8px 179.3px,372.6px 182.9px,377.4px 186.5px,382.1px 190.1px,386.8px 193.6px,391.5px 197.2px,396.2px 200.7px,400.9px 204.2px,405.5px 207.7px,410.1px 211.2px,414.7px 214.7px,419.3px 218.1px,423.8px 221.5px,428.3px 224.9px,432.7px 228.2px,437.1px 231.6px,441.5px 234.9px,445.8px 238.1px,450.1px 241.3px,454.3px 244.5px,458.5px 247.7px,462.7px 250.8px,466.8px 253.9px,470.8px 256.9px,474.7px 259.9px,478.7px 262.9px,482.5px 265.8px,486.3px 268.7px,490.0px 271.5px,493.6px 274.2px,497.1px 276.8px,500.5px 279.4px,503.9px 281.9px,507.1px 284.4px,510.3px 286.8px,513.4px 289.1px,516.5px 291.4px,519.5px 293.7px,522.5px 296.0px,525.4px 298.1px,528.1px 300.2px,530.8px 302.3px,533.5px 304.2px,536.0px 306.1px,538.4px 307.9px,540.8px 309.7px,543.0px 311.4px,545.3px 313.1px,547.4px 314.7px,549.5px 316.2px,551.5px 317.7px,553.4px 319.2px,555.2px 320.6px,557.0px 322.0px,558.8px 323.3px,560.4px 324.5px,562.0px 325.7px,563.5px 326.9px,565.0px 328.0px,566.4px 329.1px,567.8px 330.1px,569.1px 331.1px,570.4px 332.0px,571.6px 332.9px,572.8px 333.8px,573.9px 334.7px,575.0px 335.5px,576.1px 336.3px,577.1px 337.1px,578.0px 337.8px,579.0px 338.5px,579.9px 339.2px,580.8px 339.9px,581.7px 340.6px,582.5px 341.2px,583.4px 341.8px,584.2px 342.4px,584.9px 343.0px,585.7px 343.6px,586.4px 344.1px,587.1px 344.6px,587.8px 345.2px,588.4px 345.6px,589.0px 346.1px,589.6px 346.6px,590.2px 347.0px,590.8px 347.4px,591.3px 347.8px,591.8px 348.2px,592.3px 348.6px,592.8px 348.9px,593.2px 349.2px,593.6px 349.4px,594.0px 349.7px,594.4px 350.0px,594.8px 350.4px,595.2px 351.0px,595.7px 351.7px,596.2px 352.5px,596.7px 353.3px,597.0px 354.0px,597.3px 354.4px)"><div style="top:0px;height:4px;background:linear-gradient(90deg,#009900 0px,#009900 12px,#009900 24px,#009900 36px,#009900 48px,#009900 60px,#009900 72px,#009900 84px,#009900 96px,#009900 108px,#009900 120px,#009900 132px,#009900 144px,#009900 156px,#009900 168px,#009900 180px,#009900 192px,#009900 204px,#009900 216px,#009900 228px,#009900 240px,#009900 252px,#009900 264px,#009900 276px,#009900 288px,#009900 300px,#009900 312px,#009900 324px,#009900 336px,#009900 348px,#009900 360px,#009900 372px,#009900 384px,#009900 396px,#079900 408px,#0f9900 420px,#179900 432px,#209900 444px,#2a9900 456px,#349900 468px,#3f9900 480px,#4a9900 492px,#579900 504px,#649900 516px,#729900 528px,#819900 540px,#929900 552px,#998f00 564px,#998000 576px,#997300 588px,#996700 600px,#996400 604px)"></div><div style="top:4px;height:4px;background:linear-gradient(90deg,#009900 0px,#009900 12px,#009900 24px,#009900 36px,#009900 48px,#009900 60px,#009900 72px,#009900 84px,#009900 96px,#009900 108px,#009900 120px,#009900 132px,#009900 144px,#009900 156px,#009900 168px,#009900 180px,#009900 192px,#009900 204px,#009900 216px,#009900 228px,#009900 240px,#009900 252px,#009900 264px,#009900 276px,#009900 288px,#009900 300px,#009900 312px,#009900 324px,#009900 336px,#009900 348px,#009900 360px,#009900 372px,#009900 384px,#029900 396px,#0a9900 408px,#129900 420px,#1b9900 432px,#249900 444px,#2d9900 456px,#389900 468px,#439900 480px,#4f9900 492px,#5b9900 504px,#699900 516px,#779900 528px,#879900 540px,#989900 552px,#998a00 564px,#997b00 576px,#996f00 588px,#996300 600px,#996000 604px)"></div><div style="top:8px;height:4px;background:linear-gradient(90deg,#009900 0px,#009900 12px,#009900 24px,#009900 36px,#009900 48px,#009900 60px,#009900 72px,#009900 84px,#009900 96px,#009900 108px,#009900 120px,#009900 132px,#009900 144px,#009900 156px,#009900 168px,#009900 180px,#009900 192px,#009900 204px,#009900 216px,#009900 228px,#009900 240px,#009900 252px,#009900 264px,#009900 276px,#009900 288px,#009900 300px,#009900 312px,#009900 324px,#009900 336px,#009900 348px,#009900 360px,#009900 372px,#009900 384px,#059900 396px,#0c9900 408px,#159900 420px,#1e9900 432px,#279900 444px,#319900 456px,#3c9900 468px,#479900 480px,#539900 492px,#609900 504px,#6e9900 516px,#7c9900 528px,#8d9900 540px,#999400 552px,#998400 564px,#997700 576px,#996b00 588px,#996000 600px,#995c00 604px)"></div><div style="top:12px;height:4px;background:linear-gradient(90deg,#009900 0px,#009900 12px,#009900 24px,#009900 36px,#009900 48px,#009900 60px,#009900 72px,#009900 84px,#009900 96px,#009900 108px,#009900 120px,#009900 132px,#009900 144px,#009900 156px,#009900 168px,#009900 180px,#009900 192px,#009900 204px,#009900 216px,#009900 228px,#009900 240px,#009900 252px,#009900 264px,#009900 276px,#009900 288px,#009900 300px,#009900 312px,#009900 324px,#009900 336px,#009900 348px,#009900 360px,#009900 372px,#009900 384px,#079900 396px,#0f9900 408px,#189900 420px,#219900 432px,#2a9900 444px,#359900 456px,#3f9900 468px,#4b9900 480px,#579900 492px,#649900 504px,#739900 516px,#829900 528px,#929900 540px,#998e00 552px,#997f00 564px,#997200 576px,#996700 588px,#995c00 600px,#995900 604px)"></div><div style="top:16px;height:4px;background:linear-gradient(90deg,#009900 0px,#009900 12px,#009900 24px,#009900 36px,#009900 48px,#009900 60px,#009900 72px,#009900 84px,#009900 96px,#009900 108px,#009900 120px,#009900 132px,#009900 144px,#009900 156px,#009900 168px,#009900 180px,#009900 192px,#009900 204px,#009900 216px,#009900 228px,#009900 240px,#009900 252px,#009900 264px,#009900 276px,#009900 288px,#009900 300px,#009900 312px,#009900 324px,#009900 336px,#009900 348px,#009900 360px,#009900 372px,#029900 384px,#0a9900 396px,#129900 408px,#1b9900 420px,#249900 432px,#2e9900 444px,#389900 456px,#439900 468px,#4f9900 480px,#5c9900 492px,#699900 504px,#789900 516px,#889900 528px,#999900 540px,#998900 552px,#997b00 564px,#996e00 576px,#996300 588px,#995900 600px,#995600 604px)"></div><div style="top:20px;height:4px;background:linear-gradient(90deg,#009900 0px,#009900 12px,#009900 24px,#009900 36px,#009900 48px,#009900 60px,#009900 72px,#009900 84px,#009900 96px,#009900 108px,#009900 120px,#009900 132px,#009900 144px,#009900 156px,#009900 168px,#009900 180px,#009900 192px,#009900 204px,#009900 216px,#009900 228px,#009900 240px,#009900 252px,#009900 264px,#009900 276px,#009900 288px,#009900 300px,#009900 312px,#009900 324px,#009900 336px,#009900 348px,#009900 360px,#009900 372px,#059900 384px,#0d9900 396px,#159900 408px,#1e9900 420px,#279900 432px,#319900 444px,#3c9900 456px,#479900 468px,#539900 480px,#609900 492px,#6e9900 504px,#7d9900 516px,#8d9900 528px,#999300 540px,#998400 552px,#997600 564px,#996a00 576px,#995f00 588px,#995600 600px,#995300 604px)"></div><div style="top:24px;height:4px;background:linear-gradient(90deg,#009900 0px,#009900 12px,#009900 24px,#009900 36px,#009900 48px,#009900 60px,#009900 72px,#009900 84px,#009900 96px,#009900 108px,#009900 120px,#009900 132px,#009900 144px,#009900 156px,#009900 168px,#009900 180px,#009900 192px,#009900 204px,#009900 216px,#009900 228px,#009900 240px,#009900 252px,#009900 264px,#009900 276px,#009900 288px,#009900 300px,#009900 312px,#009900 324px,#009900 336px,#009900 348px,#009900 360px,#009900 372px,#089900 384px,#109900 396px,#189900 408px,#219900 420px,#2b9900 432px,#359900 444px,#409900 456px,#4c9900 468px,#589900 480px,#659900 492px,#739900 504px,#839900 516px,#939900 528px,#998e00 540px,#997f00 552px,#997200 564px,#996600 576px,#995c00 588px,#995300 600px,#995000 604px)"></div><div style="top:28px;height:4px;background:linear-gradient(90deg,#009900 0px,#009900 12px,#009900 24px,#009900 36px,#009900 48px,#009900 60px,#009900 72px,#009900 84px,#009900 96px,#009900 108px,#009900 120px,#009900 132px,#009900 144px,#009900 156px,#009900 168px,#009900 180px,#009900 192px,#009900 204px,#009900 216px,#009900 228px,#009900 240px,#009900 252px,#009900 264px,#009900 276px,#009900 288px,#009900 300px,#009900 312px,#009900 324px,#009900 336px,#009900 348px,#009900 360px,#039900 372px,#0a9900 384px,#139900 396px,#1b9900 408px,#259900 420px,#2e9900 432px,#399900 444px,#449900 456px,#509900 468px,#5c9900 480px,#6a9900 492px,#799900 504px,#889900 516px,#999900 528px,#998800 540px,#997a00 552px,#996d00 564px,#996200 576px,#995900 588px,#995000 600px,#994d00 604px)"></div><div style="top:32px;height:4px;background:linear-gradient(90deg,#009900 0px,#009900 12px,#009900 24px,#009900 36px,#009900 48px,#009900 60px,#009900 72px,#009900 84px,#009900 96px,#009900 108px,#009900 120px,#009900 132px,#009900 144px,#009900 156px,#009900 168px,#009900 180px,#009900 192px,#009900 204px,#009900 216px,#009900 228px,#009900 240px,#009900 252px,#009900 264px,#009900 276px,#009900 288px,#009900 300px,#009900 312px,#009900 324px,#009900 336px,#009900 348px,#009900 360px,#059900 372px,#0d9900 384px,#169900 396px,#1f9900 408px,#289900 420px,#329900 432px,#3d9900 444px,#489900 456px,#549900 468px,#619900 480px,#6f9900 492px,#7e9900 504px,#8e9900 516px,#999300 528px,#998300 540px,#997500 552px,#996900 564px,#995f00 576px,#995500 588px,#994d00 600px,#994a00 604px)"></div><div style="top:36px;height:4px;background:linear-gradient(90deg,#009900 0px,#009900 12px,#009900 24px,#009900 36px,#009900 48px,#009900 60px,#009900 72px,#009900 84px,#009900 96px,#009900 108px,#009900 120px,#009900 132px,#009900 144px,#009900 156px,#009900 168px,#009900 180px,#009900 192px,#009900 204px,#009900 216px,#009900 228px,#009900 240px,#009900 252px,#009900 264px,#009900 276px,#009900 288px,#009900 300px,#009900 312px,#009900 324px,#009900 336px,#009900 348px,#009900 360px,#089900 372px,#109900 384px,#199900 396px,#229900 408px,#2b9900 420px,#369900 432px,#409900 444px,#4c9900 456px,#599900 468px,#669900 480px,#749900 492px,#839900 504px,#949900 516px,#998d00 528px,#997e00 540px,#997100 552px,#996600 564px,#995b00 576px,#995200 588px,#994a00 600px,#994700 604px)"></div><div style="top:40px;height:4px;background:linear-gradient(90deg,#009900 0px,#009900 12px,#009900 24px,#009900 36px,#009900 48px,#009900 60px,#009900 72px,#009900 84px,#009900 96px,#009900 108px,#009900 120px,#009900 132px,#009900 144px,#009900 156px,#009900 168px,#009900 180px,#009900 192px,#009900 204px,#009900 216px,#009900 228px,#009900 240px,#009900 252px,#009900 264px,#009900 276px,#009900 288px,#009900 300px,#009900 312px,#009900 324px,#009900 336px,#009900 348px,#039900 360px,#0b9900 372px,#139900 384px,#1c9900 396px,#259900 408px,#2f9900 420px,#399900 432px,#449900 444px,#509900 456px,#5d9900 468px,#6b9900 480px,#799900 492px,#899900 504px,#999800 516px,#998700 528px,#997900 540px,#996d00 552px,#996200 564px,#995800 576px,#994f00 588px,#994700 600px,#994500 604px)"></div><div style="top:44px;height:4px;background:linear-gradient(90deg,#009900 0px,#009900 12px,#009900 24px,#009900 36px,#009900 48px,#009900 60px,#009900 72px,#009900 84px,#009900 96px,#009900 108px,#009900 120px,#009900 132px,#009900 144px,#009900 156px,#009900 168px,#009900 180px,#009900 192px,#009900 204px,#009900 216px,#009900 228px,#009900 240px,#009900 252px,#009900 264px,#009900 276px,#009900 288px,#009900 300px,#009900 312px,#009900 324px,#009900 336px,#009900 348px,#069900 360px,#0e9900 372px,#169900 384px,#1f9900 396px,#289900 408px,#329900 420px,#3d9900 432px,#499900 444px,#559900 456px,#629900 468px,#709900 480px,#7f9900 492px,#8f9900 504px,#999200 516px,#998200 528px,#997500 540px,#996900 552px,#995e00 564px,#995500 576px,#994c00 588px,#994500 600px,#994200 604px)"></div><div style="top:48px;height:4px;background:linear-gradient(90deg,#009900 0px,#009900 12px,#009900 24px,#009900 36px,#009900 48px,#009900 60px,#009900 72px,#009900 84px,#009900 96px,#009900 108px,#009900 120px,#009900 132px,#009900 144px,#009900 156px,#009900 168px,#009900 180px,#009900 192px,#009900 204px,#009900 216px,#009900 228px,#009900 240px,#009900 252px,#009900 264px,#009900 276px,#009900 288px,#009900 300px,#009900 312px,#009900 324px,#009900 336px,#019900 348px,#089900 360px,#119900 372px,#199900 384px,#229900 396px,#2c9900 408px,#369900 420px,#419900 432px,#4d9900 444px,#599900 456px,#669900 468px,#759900 480px,#849900 492px,#959900 504px,#998c00 516px,#997d00 528px,#997000 540px,#996500 552px,#995b00 564px,#995200 576px,#994a00 588px,#994200 600px,#994000 604px)"></div><div style="top:52px;height:4px;background:linear-gradient(90deg,#009900 0px,#009900 12px,#009900 24px,#009900 36px,#009900 48px,#009900 60px,#009900 72px,#009900 84px,#009900 96px,#009900 108px,#009900 120px,#009900 132px,#009900 144px,#009900 156px,#009900 168px,#009900 180px,#009900 192px,#009900 204px,#009900 216px,#009900 228px,#009900 240px,#009900 252px,#009900 264px,#009900 276px,#009900 288px,#009900 300px,#009900 312px,#009900 324px,#009900 336px,#039900 348px,#0b9900 360px,#139900 372px,#1c9900 384px,#269900 396px,#2f9900 408px,#3a9900 420px,#459900 432px,#519900 444px,#5e9900 456px,#6b9900 468px,#7a9900 480px,#8a9900 492px,#999700 504px,#998700 516px,#997900 528px,#996c00 540px,#996100 552px,#995800 564px,#994f00 576px,#994700 588px,#994000 600px,#993e00 604px)"></div><div style="top:56px;height:4px;background:linear-gradient(90deg,#009900 0px,#009900 12px,#009900 24px,#009900 36px,#009900 48px,#009900 60px,#009900 72px,#009900 84px,#009900 96px,#009900 108px,#009900 120px,#009900 132px,#009900 144px,#009900 156px,#009900 168px,#009900 180px,#009900 192px,#009900 204px,#009900 216px,#009900 228px,#009900 240px,#009900 252px,#009900 264px,#009900 276px,#009900 288px,#009900 300px,#009900 312px,#009900 324px,#009900 336px,#069900 348px,#0e9900 360px,#169900 372px,#1f9900 384px,#299900 396px,#339900 408px,#3e9900 420px,#499900 432px,#559900 444px,#629900 456px,#709900 468px,#7f9900 480px,#909900 492px,#999100 504px,#998200 516px,#997400 528px,#996800 540px,#995e00 552px,#995400 564px,#994c00 576px,#994400 588px,#993d00 600px,#993b00 604px)"></div><div style="top:60px;height:4px;background:linear-gradient(90deg,#009900 0px,#009900 12px,#009900 24px,#009900 36px,#009900 48px,#009900 60px,#009900 72px,#009900 84px,#009900 96px,#009900 108px,#009900 120px,#009900 132px,#009900 144px,#009900 156px,#009900 168px,#009900 180px,#009900 192px,#009900 204px,#009900 216px,#009900 228px,#009900 240px,#009900 252px,#009900 264px,#009900 276px,#009900 288px,#009900 300px,#009900 312px,#009900 324px,#019900 336px,#099900 348px,#119900 360px,#1a9900 372px,#239900 384px,#2c9900 396px,#379900 408px,#429900 420px,#4d9900 432px,#5a9900 444px,#679900 456px,#769900 468px,#859900 480px,#969900 492px,#998b00 504px,#997d00 516px,#997000 528px,#996500 540px,#995a00 552px,#995100 564px,#994900 576px,#994200 588px,#993b00 600px,#993900 604px)"></div><div style="top:64px;height:4px;background:linear-gradient(90deg,#009900 0px,#009900 12px,#009900 24px,#009900 36px,#009900 48px,#009900 60px,#009900 72px,#009900 84px,#009900 96px,#009900 108px,#009900 120px,#009900 132px,#009900 144px,#009900 156px,#009900 168px,#009900 180px,#009900 192px,#009900 204px,#009900 216px,#009900 228px,#009900 240px,#009900 252px,#009900 264px,#009900 276px,#009900 288px,#009900 300px,#009900 312px,#009900 324px,#049900 336px,#0c9900 348px,#149900 360px,#1d9900 372px,#269900 384px,#309900 396px,#3a9900 408px,#469900 420px,#529900 432px,#5e9900 444px,#6c9900 456px,#7b9900 468px,#8b9900 480px,#999600 492px,#998600 504px,#997800 516px,#996c00 528px,#996100 540px,#995700 552px,#994e00 564px,#994700 576px,#993f00 588px,#993900 600px,#993700 604px)"></div><div style="top:68px;height:4px;background:linear-gradient(90deg,#009900 0px,#009900 12px,#009900 24px,#009900 36px,#009900 48px,#009900 60px,#009900 72px,#009900 84px,#009900 96px,#009900 108px,#009900 120px,#009900 132px,#009900 144px,#009900 156px,#009900 168px,#009900 180px,#009900 192px,#009900 204px,#009900 216px,#009900 228px,#009900 240px,#009900 252px,#009900 264px,#009900 276px,#009900 288px,#009900 300px,#009900 312px,#009900 324px,#069900 336px,#0e9900 348px,#179900 360px,#209900 372px,#299900 384px,#339900 396px,#3e9900 408px,#4a9900 420px,#569900 432px,#639900 444px,#719900 456px,#809900 468px,#919900 480px,#999000 492px,#998100 504px,#997400 516px,#996800 528px,#995d00 540px,#995400 552px,#994c00 564px,#994400 576px,#993d00 588px,#993700 600px,#993500 604px)"></div><div style="top:72px;height:4px;background:linear-gradient(90deg,#009900 0px,#009900 12px,#009900 24px,#009900 36px,#009900 48px,#009900 60px,#009900 72px,#009900 84px,#009900 96px,#009900 108px,#009900 120px,#009900 132px,#009900 144px,#009900 156px,#009900 168px,#009900 180px,#009900 192px,#009900 204px,#009900 216px,#009900 228px,#009900 240px,#009900 252px,#009900 264px,#009900 276px,#009900 288px,#009900 300px,#009900 312px,#019900 324px,#099900 336px,#119900 348px,#1a9900 360px,#239900 372px,#2d9900 384px,#379900 396px,#429900 408px,#4e9900 420px,#5a9900 432px,#689900 444px,#769900 456px,#869900 468px,#979900 480px,#998b00 492px,#997c00 504px,#996f00 516px,#996400 528px,#995a00 540px,#995100 552px,#994900 564px,#994200 576px,#993b00 588px,#993500 600px,#993300 604px)"></div><div style="top:76px;height:4px;background:linear-gradient(90deg,#009900 0px,#009900 12px,#009900 24px,#009900 36px,#009900 48px,#009900 60px,#009900 72px,#009900 84px,#009900 96px,#009900 108px,#009900 120px,#009900 132px,#009900 144px,#009900 156px,#009900 168px,#009900 180px,#009900 192px,#009900 204px,#009900 216px,#009900 228px,#009900 240px,#009900 252px,#009900 264px,#009900 276px,#009900 288px,#009900 300px,#009900 312px,#049900 324px,#0c9900 336px,#149900 348px,#1d9900 360px,#269900 372px,#309900 384px,#3b9900 396px,#469900 408px,#529900 420px,#5f9900 432px,#6d9900 444px,#7c9900 456px,#8c9900 468px,#999500 480px,#998500 492px,#997700 504px,#996b00 516px,#996000 528px,#995700 540px,#994e00 552px,#994600 564px,#993f00 576px,#993900 588px,#993300 600px,#993100 604px)"></div><div style="top:80px;height:4px;background:linear-gradient(90deg,#009900 0px,#009900 12px,#009900 24px,#009900 36px,#009900 48px,#009900 60px,#009900 72px,#009900 84px,#009900 96px,#009900 108px,#009900 120px,#009900 132px,#009900 144px,#009900 156px,#009900 168px,#009900 180px,#009900 192px,#009900 204px,#009900 216px,#009900 228px,#009900 240px,#009900 252px,#009900 264px,#009900 276px,#009900 288px,#009900 300px,#009900 312px,#079900 324px,#0f9900 336px,#179900 348px,#209900 360px,#2a9900 372px,#349900 384px,#3f9900 396px,#4a9900 408px,#579900 420px,#649900 432px,#729900 444px,#819900 456px,#919900 468px,#998f00 480px,#998000 492px,#997300 504px,#996700 516px,#995d00 528px,#995400 540px,#994b00 552px,#994400 564px,#993d00 576px,#993700 588px,#993100 600px,#992f00 604px)"></div><div style="top:84px;height:4px;background:linear-gradient(90deg,#009900 0px,#009900 12px,#009900 24px,#009900 36px,#009900 48px,#009900 60px,#009900 72px,#009900 84px,#009900 96px,#009900 108px,#009900 120px,#009900 132px,#009900 144px,#009900 156px,#009900 168px,#009900 180px,#009900 192px,#009900 204px,#009900 216px,#009900 228px,#009900 240px,#009900 252px,#009900 264px,#009900 276px,#009900 288px,#009900 300px,#029900 312px,#0a9900 324px,#129900 336px,#1a9900 348px,#249900 360px,#2d9900 372px,#389900 384px,#439900 396px,#4e9900 408px,#5b9900 420px,#699900 432px,#779900 444px,#879900 456px,#979900 468px,#998a00 480px,#997b00 492px,#996f00 504px,#996300 516px,#995a00 528px,#995100 540px,#994800 552px,#994100 564px,#993b00 576px,#993400 588px,#992f00 600px,#992d00 604px)"></div><div style="top:88px;height:4px;background:linear-gradient(90deg,#009900 0px,#009900 12px,#009900 24px,#009900 36px,#009900 48px,#009900 60px,#009900 72px,#009900 84px,#009900 96px,#009900 108px,#009900 120px,#009900 132px,#009900 144px,#009900 156px,#009900 168px,#009900 180px,#009900 192px,#009900 204px,#009900 216px,#009900 228px,#009900 240px,#009900 252px,#009900 264px,#009900 276px,#009900 288px,#009900 300px,#049900 312px,#0c9900 324px,#159900 336px,#1e9900 348px,#279900 360px,#319900 372px,#3b9900 384px,#479900 396px,#539900 408px,#609900 420px,#6d9900 432px,#7c9900 444px,#8c9900 456px,#999400 468px,#998500 480px,#997700 492px,#996b00 504px,#996000 516px,#995600 528px,#994e00 540px,#994600 552px,#993f00 564px,#993800 576px,#993200 588px,#992d00 600px,#992b00 604px)"></div><div style="top:92px;height:4px;background:linear-gradient(90deg,#009900 0px,#009900 12px,#009900 24px,#009900 36px,#009900 48px,#009900 60px,#009900 72px,#009900 84px,#009900 96px,#009900 108px,#009900 120px,#009900 132px,#009900 144px,#009900 156px,#009900 168px,#009900 180px,#009900 192px,#009900 204px,#009900 216px,#009900 228px,#009900 240px,#009900 252px,#009900 264px,#009900 276px,#009900 288px,#009900 300px,#079900 312px,#0f9900 324px,#189900 336px,#219900 348px,#2a9900 360px,#349900 372px,#3f9900 384px,#4b9900 396px,#579900 408px,#649900 420px,#739900 432px,#829900 444px,#929900 456px,#998f00 468px,#998000 480px,#997200 492px,#996700 504px,#995c00 516px,#995300 528px,#994b00 540px,#994300 552px,#993c00 564px,#993600 576px,#993100 588px,#992b00 600px,#992a00 604px)"></div><div style="top:96px;height:4px;background:linear-gradient(90deg,#009900 0px,#009900 12px,#009900 24px,#009900 36px,#009900 48px,#009900 60px,#009900 72px,#009900 84px,#009900 96px,#009900 108px,#009900 120px,#009900 132px,#009900 144px,#009900 156px,#009900 168px,#009900 180px,#009900 192px,#009900 204px,#009900 216px,#009900 228px,#009900 240px,#009900 252px,#009900 264px,#009900 276px,#009900 288px,#029900 300px,#0a9900 312px,#129900 324px,#1b9900 336px,#249900 348px,#2e9900 360px,#389900 372px,#439900 384px,#4f9900 396px,#5c9900 408px,#699900 420px,#789900 432px,#879900 444px,#989900 456px,#998900 468px,#997b00 480px,#996e00 492px,#996300 504px,#995900 516px,#995000 528px,#994800 540px,#994100 552px,#993a00 564px,#993400 576px,#992f00 588px,#992a00 600px,#992800 604px)"></div><div style="top:100px;height:4px;background:linear-gradient(90deg,#009900 0px,#009900 12px,#009900 24px,#009900 36px,#009900 48px,#009900 60px,#009900 72px,#009900 84px,#009900 96px,#009900 108px,#009900 120px,#009900 132px,#009900 144px,#009900 156px,#009900 168px,#009900 180px,#009900 192px,#009900 204px,#009900 216px,#009900 228px,#009900 240px,#009900 252px,#009900 264px,#009900 276px,#009900 288px,#059900 300px,#0d9900 312px,#159900 324px,#1e9900 336px,#279900 348px,#319900 360px,#3c9900 372px,#479900 384px,#539900 396px,#609900 408px,#6e9900 420px,#7d9900 432px,#8d9900 444px,#999400 456px,#998400 468px,#997600 480px,#996a00 492px,#995f00 504px,#995600 516px,#994d00 528px,#994500 540px,#993e00 552px,#993800 564px,#993200 576px,#992d00 588px,#992800 600px,#992600 604px)"></div><div style="top:104px;height:4px;background:linear-gradient(90deg,#009900 0px,#009900 12px,#009900 24px,#009900 36px,#009900 48px,#009900 60px,#009900 72px,#009900 84px,#009900 96px,#009900 108px,#009900 120px,#009900 132px,#009900 144px,#009900 156px,#009900 168px,#009900 180px,#009900 192px,#009900 204px,#009900 216px,#009900 228px,#009900 240px,#009900 252px,#009900 264px,#009900 276px,#009900 288px,#089900 300px,#109900 312px,#189900 324px,#219900 336px,#2b9900 348px,#359900 360px,#409900 372px,#4b9900 384px,#589900 396px,#659900 408px,#739900 420px,#839900 432px,#939900 444px,#998e00 456px,#997f00 468px,#997200 480px,#996600 492px,#995c00 504px,#995300 516px,#994a00 528px,#994300 540px,#993c00 552px,#993600 564px,#993000 576px,#992b00 588px,#992600 600px,#992500 604px)"></div><div style="top:108px;height:4px;background:linear-gradient(90deg,#009900 0px,#009900 12px,#009900 24px,#009900 36px,#009900 48px,#009900 60px,#009900 72px,#009900 84px,#009900 96px,#009900 108px,#009900 120px,#009900 132px,#009900 144px,#009900 156px,#009900 168px,#009900 180px,#009900 192px,#009900 204px,#009900 216px,#009900 228px,#009900 240px,#009900 252px,#009900 264px,#009900 276px,#039900 288px,#0a9900 300px,#139900 312px,#1b9900 324px,#259900 336px,#2e9900 348px,#399900 360px,#449900 372px,#509900 384px,#5c9900 396px,#6a9900 408px,#789900 420px,#889900 432px,#999900 444px,#998800 456px,#997a00 468px,#996e00 480px,#996200 492px,#995900 504px,#995000 516px,#994800 528px,#994100 540px,#993a00 552px,#993400 564px,#992e00 576px,#992900 588px,#992500 600px,#992300 604px)"></div><div style="top:112px;height:4px;background:linear-gradient(90deg,#009900 0px,#009900 12px,#009900 24px,#009900 36px,#009900 48px,#009900 60px,#009900 72px,#009900 84px,#009900 96px,#009900 108px,#009900 120px,#009900 132px,#009900 144px,#009900 156px,#009900 168px,#009900 180px,#009900 192px,#009900 204px,#009900 216px,#009900 228px,#009900 240px,#009900 252px,#009900 264px,#009900 276px,#059900 288px,#0d9900 300px,#169900 312px,#1e9900 324px,#289900 336px,#329900 348px,#3d9900 360px,#489900 372px,#549900 384px,#619900 396px,#6f9900 408px,#7e9900 420px,#8e9900 432px,#999300 444px,#998300 456px,#997600 468px,#996a00 480px,#995f00 492px,#995500 504px,#994d00 516px,#994500 528px,#993e00 540px,#993800 552px,#993200 564px,#992d00 576px,#992800 588px,#992300 600px,#992200 604px)"></div><div style="top:116px;height:4px;background:linear-gradient(90deg,#009900 0px,#009900 12px,#009900 24px,#009900 36px,#009900 48px,#009900 60px,#009900 72px,#009900 84px,#009900 96px,#009900 108px,#009900 120px,#009900 132px,#009900 144px,#009900 156px,#009900 168px,#009900 180px,#009900 192px,#009900 204px,#009900 216px,#009900 228px,#009900 240px,#009900 252px,#009900 264px,#009900 276px,#089900 288px,#109900 300px,#199900 312px,#229900 324px,#2b9900 336px,#369900 348px,#409900 360px,#4c9900 372px,#589900 384px,#669900 396px,#749900 408px,#839900 420px,#949900 432px,#998d00 444px,#997e00 456px,#997100 468px,#996600 480px,#995b00 492px,#995200 504px,#994a00 516px,#994300 528px,#993c00 540px,#993600 552px,#993000 564px,#992b00 576px,#992600 588px,#992100 600px,#992000 604px)"></div><div style="top:120px;height:4px;background:linear-gradient(90deg,#009900 0px,#009900 12px,#009900 24px,#009900 36px,#009900 48px,#009900 60px,#009900 72px,#009900 84px,#009900 96px,#009900 108px,#009900 120px,#009900 132px,#009900 144px,#009900 156px,#009900 168px,#009900 180px,#009900 192px,#009900 204px,#009900 216px,#009900 228px,#009900 240px,#009900 252px,#009900 264px,#039900 276px,#0b9900 288px,#139900 300px,#1c9900 312px,#259900 324px,#2f9900 336px,#399900 348px,#449900 360px,#509900 372px,#5d9900 384px,#6b9900 396px,#799900 408px,#899900 420px,#999800 432px,#998800 444px,#997900 456px,#996d00 468px,#996200 480px,#995800 492px,#994f00 504px,#994700 516px,#994000 528px,#993a00 540px,#993400 552px,#992e00 564px,#992900 576px,#992400 588px,#992000 600px,#991f00 604px)"></div><div style="top:124px;height:4px;background:linear-gradient(90deg,#009900 0px,#009900 12px,#009900 24px,#009900 36px,#009900 48px,#009900 60px,#009900 72px,#009900 84px,#009900 96px,#009900 108px,#009900 120px,#009900 132px,#009900 144px,#009900 156px,#009900 168px,#009900 180px,#009900 192px,#009900 204px,#009900 216px,#009900 228px,#009900 240px,#009900 252px,#009900 264px,#069900 276px,#0e9900 288px,#169900 300px,#1f9900 312px,#289900 324px,#329900 336px,#3d9900 348px,#489900 360px,#559900 372px,#629900 384px,#709900 396px,#7f9900 408px,#8f9900 420px,#999200 432px,#998200 444px,#997500 456px,#996900 468px,#995e00 480px,#995500 492px,#994c00 504px,#994500 516px,#993e00 528px,#993700 540px,#993200 552px,#992c00 564px,#992700 576px,#992300 588px,#991f00 600px,#991d00 604px)"></div><div style="top:128px;height:4px;background:linear-gradient(90deg,#009900 0px,#009900 12px,#009900 24px,#009900 36px,#009900 48px,#009900 60px,#009900 72px,#009900 84px,#009900 96px,#009900 108px,#009900 120px,#009900 132px,#009900 144px,#009900 156px,#009900 168px,#009900 180px,#009900 192px,#009900 204px,#009900 216px,#009900 228px,#009900 240px,#009900 252px,#019900 264px,#089900 276px,#109900 288px,#199900 300px,#229900 312px,#2c9900 324px,#369900 336px,#419900 348px,#4d9900 360px,#599900 372px,#669900 384px,#759900 396px,#849900 408px,#959900 420px,#998c00 432px,#997e00 444px,#997100 456px,#996500 468px,#995b00 480px,#995200 492px,#994a00 504px,#994200 516px,#993c00 528px,#993500 540px,#993000 552px,#992b00 564px,#992600 576px,#992100 588px,#991d00 600px,#991c00 604px)"></div><div style="top:132px;height:4px;background:linear-gradient(90deg,#009900 0px,#009900 12px,#009900 24px,#009900 36px,#009900 48px,#009900 60px,#009900 72px,#009900 84px,#009900 96px,#009900 108px,#009900 120px,#009900 132px,#009900 144px,#009900 156px,#009900 168px,#009900 180px,#009900 192px,#009900 204px,#009900 216px,#009900 228px,#009900 240px,#009900 252px,#039900 264px,#0b9900 276px,#139900 288px,#1c9900 300px,#259900 312px,#2f9900 324px,#3a9900 336px,#459900 348px,#519900 360px,#5e9900 372px,#6b9900 384px,#7a9900 396px,#8a9900 408px,#999700 420px,#998700 432px,#997900 444px,#996c00 456px,#996100 468px,#995800 480px,#994f00 492px,#994700 504px,#994000 516px,#993900 528px,#993300 540px,#992e00 552px,#992900 564px,#992400 576px,#992000 588px,#991c00 600px,#991a00 604px)"></div><div style="top:136px;height:4px;background:linear-gradient(90deg,#009900 0px,#009900 12px,#009900 24px,#009900 36px,#009900 48px,#009900 60px,#009900 72px,#009900 84px,#009900 96px,#009900 108px,#009900 120px,#009900 132px,#009900 144px,#009900 156px,#009900 168px,#009900 180px,#009900 192px,#009900 204px,#009900 216px,#009900 228px,#009900 240px,#009900 252px,#069900 264px,#0e9900 276px,#169900 288px,#1f9900 300px,#299900 312px,#339900 324px,#3e9900 336px,#499900 348px,#559900 360px,#629900 372px,#709900 384px,#7f9900 396px,#909900 408px,#999100 420px,#998200 432px,#997400 444px,#996800 456px,#995e00 468px,#995500 480px,#994c00 492px,#994400 504px,#993d00 516px,#993700 528px,#993100 540px,#992c00 552px,#992700 564px,#992300 576px,#991e00 588px,#991a00 600px,#991900 604px)"></div><div style="top:140px;height:4px;background:linear-gradient(90deg,#009900 0px,#009900 12px,#009900 24px,#009900 36px,#009900 48px,#009900 60px,#009900 72px,#009900 84px,#009900 96px,#009900 108px,#009900 120px,#009900 132px,#009900 144px,#009900 156px,#009900 168px,#009900 180px,#009900 192px,#009900 204px,#009900 216px,#009900 228px,#009900 240px,#019900 252px,#099900 264px,#119900 276px,#199900 288px,#239900 300px,#2c9900 312px,#379900 324px,#419900 336px,#4d9900 348px,#5a9900 360px,#679900 372px,#759900 384px,#859900 396px,#969900 408px,#998c00 420px,#997d00 432px,#997000 444px,#996500 456px,#995b00 468px,#995100 480px,#994900 492px,#994200 504px,#993b00 516px,#993500 528px,#992f00 540px,#992a00 552px,#992500 564px,#992100 576px,#991d00 588px,#991900 600px,#991800 604px)"></div><div style="top:144px;height:4px;background:linear-gradient(90deg,#009900 0px,#009900 12px,#009900 24px,#009900 36px,#009900 48px,#009900 60px,#009900 72px,#009900 84px,#009900 96px,#009900 108px,#009900 120px,#009900 132px,#009900 144px,#009900 156px,#009900 168px,#009900 180px,#009900 192px,#009900 204px,#009900 216px,#009900 228px,#009900 240px,#049900 252px,#0c9900 264px,#149900 276px,#1d9900 288px,#269900 300px,#309900 312px,#3a9900 324px,#459900 336px,#519900 348px,#5e9900 360px,#6c9900 372px,#7b9900 384px,#8b9900 396px,#999600 408px,#998600 420px,#997800 432px,#996c00 444px,#996100 456px,#995700 468px,#994f00 480px,#994700 492px,#994000 504px,#993900 516px,#993300 528px,#992e00 540px,#992900 552px,#992400 564px,#992000 576px,#991c00 588px,#991800 600px,#991700 604px)"></div><div style="top:148px;height:4px;background:linear-gradient(90deg,#009901 0px,#009901 12px,#009901 24px,#009901 36px,#009901 48px,#009901 60px,#009901 72px,#009901 84px,#009901 96px,#009901 108px,#009901 120px,#009901 132px,#009901 144px,#009901 156px,#009901 168px,#009901 180px,#009901 192px,#009901 204px,#009901 216px,#009901 228px,#009901 240px,#069900 252px,#0e9900 264px,#179900 276px,#209900 288px,#299900 300px,#339900 312px,#3e9900 324px,#4a9900 336px,#569900 348px,#639900 360px,#719900 372px,#809900 384px,#909900 396px,#999000 408px,#998100 420px,#997400 432px,#996800 444px,#995d00 456px,#995400 468px,#994c00 480px,#994400 492px,#993d00 504px,#993700 516px,#993100 528px,#992c00 540px,#992700 552px,#992200 564px,#991e00 576px,#991a00 588px,#991700 600px,#991500 604px)"></div><div style="top:152px;height:4px;background:linear-gradient(90deg,#009903 0px,#009903 12px,#009903 24px,#009903 36px,#009903 48px,#009903 60px,#009903 72px,#009903 84px,#009903 96px,#009903 108px,#009903 120px,#009903 132px,#009903 144px,#009903 156px,#009903 168px,#009903 180px,#009903 192px,#009903 204px,#009903 216px,#009903 228px,#009903 240px,#089901 252px,#119900 264px,#1a9900 276px,#239900 288px,#2d9900 300px,#379900 312px,#429900 324px,#4e9900 336px,#5a9900 348px,#689900 360px,#769900 372px,#869900 384px,#969900 396px,#998b00 408px,#997c00 420px,#996f00 432px,#996400 444px,#995a00 456px,#995100 468px,#994900 480px,#994200 492px,#993b00 504px,#993500 516px,#992f00 528px,#992a00 540px,#992500 552px,#992100 564px,#991d00 576px,#991900 588px,#991500 600px,#991400 604px)"></div><div style="top:156px;height:4px;background:linear-gradient(90deg,#009905 0px,#009905 12px,#009905 24px,#009905 36px,#009905 48px,#009905 60px,#009905 72px,#009905 84px,#009905 96px,#009905 108px,#009905 120px,#009905 132px,#009905 144px,#009905 156px,#009905 168px,#009905 180px,#009905 192px,#009905 204px,#009905 216px,#009905 228px,#009905 240px,#0a9902 252px,#149900 264px,#1d9900 276px,#269900 288px,#309900 300px,#3b9900 312px,#469900 324px,#529900 336px,#5f9900 348px,#6d9900 360px,#7b9900 372px,#8b9900 384px,#999500 396px,#998500 408px,#997800 420px,#996b00 432px,#996000 444px,#995700 456px,#994e00 468px,#994600 480px,#993f00 492px,#993900 504px,#993300 516px,#992d00 528px,#992800 540px,#992400 552px,#991f00 564px,#991b00 576px,#991800 588px,#991400 600px,#991300 604px)"></div><div style="top:160px;height:4px;background:linear-gradient(90deg,#009907 0px,#009907 12px,#009907 24px,#009907 36px,#009907 48px,#009907 60px,#009907 72px,#009907 84px,#009907 96px,#009907 108px,#009907 120px,#009907 132px,#009907 144px,#009907 156px,#009907 168px,#009907 180px,#009907 192px,#009907 204px,#009907 216px,#009907 228px,#019907 240px,#0b9904 252px,#169901 264px,#209900 276px,#2a9900 288px,#349900 300px,#3f9900 312px,#4a9900 324px,#569900 336px,#649900 348px,#729900 360px,#819900 372px,#919900 384px,#999000 396px,#998000 408px,#997300 420px,#996700 432px,#995d00 444px,#995400 456px,#994b00 468px,#994400 480px,#993d00 492px,#993700 504px,#993100 516px,#992c00 528px,#992700 540px,#992200 552px,#991e00 564px,#991a00 576px,#991600 588px,#991300 600px,#991200 604px)"></div><div style="top:164px;height:4px;background:linear-gradient(90deg,#009909 0px,#009909 12px,#009909 24px,#009909 36px,#009909 48px,#009909 60px,#009909 72px,#009909 84px,#009909 96px,#009909 108px,#009909 120px,#009909 132px,#009909 144px,#009909 156px,#009909 168px,#009909 180px,#009909 192px,#009909 204px,#009909 216px,#009909 228px,#029908 240px,#0d9906 252px,#189903 264px,#249900 276px,#2d9900 288px,#389900 300px,#439900 312px,#4e9900 324px,#5b9900 336px,#689900 348px,#779900 360px,#869900 372px,#979900 384px,#998a00 396px,#997c00 408px,#996f00 420px,#996400 432px,#995a00 444px,#995100 456px,#994900 468px,#994100 480px,#993b00 492px,#993500 504px,#992f00 516px,#992a00 528px,#992500 540px,#992100 552px,#991d00 564px,#991900 576px,#991500 588px,#991200 600px,#991100 604px)"></div><div style="top:168px;height:4px;background:linear-gradient(90deg,#00990b 0px,#00990b 12px,#00990b 24px,#00990b 36px,#00990b 48px,#00990b 60px,#00990b 72px,#00990b 84px,#00990b 96px,#00990b 108px,#00990b 120px,#00990b 132px,#00990b 144px,#00990b 156px,#00990b 168px,#00990b 180px,#00990b 192px,#00990b 204px,#00990b 216px,#00990b 228px,#03990a 240px,#0e9907 252px,#1a9904 264px,#269902 276px,#319900 288px,#3b9900 300px,#479900 312px,#539900 324px,#609900 336px,#6d9900 348px,#7c9900 360px,#8c9900 372px,#999500 384px,#998500 396px,#997700 408px,#996b00 420px,#996000 432px,#995600 444px,#994e00 456px,#994600 468px,#993f00 480px,#993800 492px,#993300 504px,#992d00 516px,#992800 528px,#992300 540px,#991f00 552px,#991b00 564px,#991700 576px,#991400 588px,#991100 600px,#991000 604px)"></div><div style="top:172px;height:4px;background:linear-gradient(90deg,#00990d 0px,#00990d 12px,#00990d 24px,#00990d 36px,#00990d 48px,#00990d 60px,#00990d 72px,#00990d 84px,#00990d 96px,#00990d 108px,#00990d 120px,#00990d 132px,#00990d 144px,#00990d 156px,#00990d 168px,#00990d 180px,#00990d 192px,#00990d 204px,#00990d 216px,#00990d 228px,#05990c 240px,#109909 252px,#1b9906 264px,#289903 276px,#349900 288px,#3f9900 300px,#4b9900 312px,#579900 324px,#649900 336px,#729900 348px,#829900 360px,#929900 372px,#998f00 384px,#998000 396px,#997200 408px,#996700 420px,#995c00 432px,#995300 444px,#994b00 456px,#994300 468px,#993d00 480px,#993600 492px,#993100 504px,#992b00 516px,#992600 528px,#992200 540px,#991e00 552px,#991a00 564px,#991600 576px,#991300 588px,#991000 600px,#990f00 604px)"></div><div style="top:176px;height:4px;background:linear-gradient(90deg,#00990f 0px,#00990f 12px,#00990f 24px,#00990f 36px,#00990f 48px,#00990f 60px,#00990f 72px,#00990f 84px,#00990f 96px,#00990f 108px,#00990f 120px,#00990f 132px,#00990f 144px,#00990f 156px,#00990f 168px,#00990f 180px,#00990f 192px,#00990f 204px,#00990f 216px,#00990f 228px,#06990e 240px,#11990b 252px,#1d9908 264px,#2a9905 276px,#379902 288px,#439900 300px,#4f9900 312px,#5c9900 324px,#699900 336px,#789900 348px,#879900 360px,#989900 372px,#998900 384px,#997b00 396px,#996e00 408px,#996300 420px,#995900 432px,#995000 444px,#994800 456px,#994100 468px,#993a00 480px,#993400 492px,#992f00 504px,#992a00 516px,#992500 528px,#992000 540px,#991c00 552px,#991900 564px,#991500 576px,#991200 588px,#990f00 600px,#990e00 604px)"></div><div style="top:180px;height:4px;background:linear-gradient(90deg,#009911 0px,#009911 12px,#009911 24px,#009911 36px,#009911 48px,#009911 60px,#009911 72px,#009911 84px,#009911 96px,#009911 108px,#009911 120px,#009911 132px,#009911 144px,#009911 156px,#009911 168px,#009911 180px,#009911 192px,#009911 204px,#009911 216px,#009911 228px,#089910 240px,#13990d 252px,#1f990a 264px,#2c9907 276px,#399904 288px,#479901 300px,#539900 312px,#609900 324px,#6e9900 336px,#7d9900 348px,#8d9900 360px,#999400 372px,#998400 384px,#997600 396px,#996a00 408px,#995f00 420px,#995600 432px,#994d00 444px,#994600 456px,#993f00 468px,#993800 480px,#993200 492px,#992d00 504px,#992800 516px,#992300 528px,#991f00 540px,#991b00 552px,#991700 564px,#991400 576px,#991100 588px,#990e00 600px,#990d00 604px)"></div><div style="top:184px;height:4px;background:linear-gradient(90deg,#009914 0px,#009914 12px,#009914 24px,#009914 36px,#009914 48px,#009914 60px,#009914 72px,#009914 84px,#009914 96px,#009914 108px,#009914 120px,#009914 132px,#009914 144px,#009914 156px,#009914 168px,#009914 180px,#009914 192px,#009914 204px,#009914 216px,#009914 228px,#099911 240px,#15990f 252px,#21990c 264px,#2e9909 276px,#3c9906 288px,#4a9902 300px,#589900 312px,#659900 324px,#739900 336px,#829900 348px,#939900 360px,#998e00 372px,#997f00 384px,#997200 396px,#996600 408px,#995c00 420px,#995300 432px,#994b00 444px,#994300 456px,#993c00 468px,#993600 480px,#993000 492px,#992b00 504px,#992600 516px,#992200 528px,#991e00 540px,#991a00 552px,#991600 564px,#991300 576px,#991000 588px,#990d00 600px,#990c00 604px)"></div><div style="top:188px;height:4px;background:linear-gradient(90deg,#009916 0px,#009916 12px,#009916 24px,#009916 36px,#009916 48px,#009916 60px,#009916 72px,#009916 84px,#009916 96px,#009916 108px,#009916 120px,#009916 132px,#009916 144px,#009916 156px,#009916 168px,#009916 180px,#009916 192px,#009916 204px,#009916 216px,#009916 228px,#0b9914 240px,#179911 252px,#23990e 264px,#30990b 276px,#3e9908 288px,#4d9904 300px,#5c9901 312px,#6a9900 324px,#789900 336px,#889900 348px,#999900 360px,#998900 372px,#997a00 384px,#996e00 396px,#996300 408px,#995900 420px,#995000 432px,#994800 444px,#994100 456px,#993a00 468px,#993400 480px,#992e00 492px,#992900 504px,#992500 516px,#992000 528px,#991c00 540px,#991800 552px,#991500 564px,#991200 576px,#990e00 588px,#990c00 600px,#990b00 604px)"></div><div style="top:192px;height:4px;background:linear-gradient(90deg,#009918 0px,#009918 12px,#009918 24px,#009918 36px,#009918 48px,#009918 60px,#009918 72px,#009918 84px,#009918 96px,#009918 108px,#009918 120px,#009918 132px,#009918 144px,#009918 156px,#009918 168px,#009918 180px,#009918 192px,#009918 204px,#009918 216px,#009918 228px,#0c9916 240px,#199913 252px,#259910 264px,#33990d 276px,#41990a 288px,#509906 300px,#5f9903 312px,#6f9900 324px,#7e9900 336px,#8e9900 348px,#999300 360px,#998300 372px,#997600 384px,#996a00 396px,#995f00 408px,#995500 420px,#994d00 432px,#994500 444px,#993e00 456px,#993800 468px,#993200 480px,#992d00 492px,#992800 504px,#992300 516px,#991f00 528px,#991b00 540px,#991700 552px,#991400 564px,#991000 576px,#990d00 588px,#990b00 600px,#990a00 604px)"></div><div style="top:196px;height:4px;background:linear-gradient(90deg,#00991b 0px,#00991b 12px,#00991b 24px,#00991b 36px,#00991b 48px,#00991b 60px,#00991b 72px,#00991b 84px,#00991b 96px,#00991b 108px,#00991b 120px,#00991b 132px,#00991b 144px,#00991b 156px,#00991b 168px,#00991b 180px,#00991b 192px,#00991b 204px,#00991b 216px,#02991a 228px,#0e9918 240px,#1a9915 252px,#289912 264px,#35990f 276px,#44990c 288px,#539909 300px,#629905 312px,#739901 324px,#839900 336px,#949900 348px,#998d00 360px,#997e00 372px,#997100 384px,#996600 396px,#995c00 408px,#995200 420px,#994a00 432px,#994300 444px,#993c00 456px,#993600 468px,#993000 480px,#992b00 492px,#992600 504px,#992200 516px,#991d00 528px,#991a00 540px,#991600 552px,#991300 564px,#990f00 576px,#990c00 588px,#990a00 600px,#990900 604px)"></div><div style="top:200px;height:4px;background:linear-gradient(90deg,#00991d 0px,#00991d 12px,#00991d 24px,#00991d 36px,#00991d 48px,#00991d 60px,#00991d 72px,#00991d 84px,#00991d 96px,#00991d 108px,#00991d 120px,#00991d 132px,#00991d 144px,#00991d 156px,#00991d 168px,#00991d 180px,#00991d 192px,#00991d 204px,#00991d 216px,#03991d 228px,#10991a 240px,#1c9917 252px,#2a9914 264px,#389911 276px,#47990e 288px,#56990b 300px,#669907 312px,#779904 324px,#899900 336px,#999800 348px,#998800 360px,#997a00 372px,#996d00 384px,#996200 396px,#995800 408px,#994f00 420px,#994700 432px,#994000 444px,#993a00 456px,#993400 468px,#992e00 480px,#992900 492px,#992400 504px,#992000 516px,#991c00 528px,#991800 540px,#991500 552px,#991100 564px,#990e00 576px,#990b00 588px,#990900 600px,#990800 604px)"></div><div style="top:204px;height:4px;background:linear-gradient(90deg,#009920 0px,#009920 12px,#009920 24px,#009920 36px,#009920 48px,#009920 60px,#009920 72px,#009920 84px,#009920 96px,#009920 108px,#009920 120px,#009920 132px,#009920 144px,#009920 156px,#009920 168px,#009920 180px,#009920 192px,#009920 204px,#009920 216px,#05991f 228px,#11991c 240px,#1f9919 252px,#2c9917 264px,#3b9914 276px,#4a9910 288px,#59990d 300px,#6a990a 312px,#7b9906 324px,#8e9902 336px,#999200 348px,#998300 360px,#997500 372px,#996900 384px,#995e00 396px,#995500 408px,#994d00 420px,#994500 432px,#993e00 444px,#993800 456px,#993200 468px,#992c00 480px,#992700 492px,#992300 504px,#991f00 516px,#991b00 528px,#991700 540px,#991400 552px,#991000 564px,#990d00 576px,#990a00 588px,#990800 600px,#990700 604px)"></div><div style="top:208px;height:4px;background:linear-gradient(90deg,#009923 0px,#009923 12px,#009923 24px,#009923 36px,#009923 48px,#009923 60px,#009923 72px,#009923 84px,#009923 96px,#009923 108px,#009923 120px,#009923 132px,#009923 144px,#009923 156px,#009923 168px,#009923 180px,#009923 192px,#009923 204px,#009923 216px,#079921 228px,#13991f 240px,#21991c 252px,#2f9919 264px,#3d9916 276px,#4d9913 288px,#5d990f 300px,#6e990c 312px,#809908 324px,#939904 336px,#998d00 348px,#997e00 360px,#997100 372px,#996500 384px,#995b00 396px,#995200 408px,#994a00 420px,#994200 432px,#993c00 444px,#993500 456px,#993000 468px,#992b00 480px,#992600 492px,#992100 504px,#991d00 516px,#991900 528px,#991600 540px,#991200 552px,#990f00 564px,#990c00 576px,#990900 588px,#990700 600px,#990600 604px)"></div><div style="top:212px;height:4px;background:linear-gradient(90deg,#009925 0px,#009925 12px,#009925 24px,#009925 36px,#009925 48px,#009925 60px,#009925 72px,#009925 84px,#009925 96px,#009925 108px,#009925 120px,#009925 132px,#009925 144px,#009925 156px,#009925 168px,#009925 180px,#009925 192px,#009925 204px,#009925 216px,#089924 228px,#159921 240px,#23991e 252px,#31991b 264px,#409918 276px,#509915 288px,#619912 300px,#72990e 312px,#84990b 324px,#989907 336px,#998802 348px,#997900 360px,#996d00 372px,#996200 384px,#995800 396px,#994f00 408px,#994700 420px,#994000 432px,#993900 444px,#993300 456px,#992e00 468px,#992900 480px,#992400 492px,#992000 504px,#991c00 516px,#991800 528px,#991500 540px,#991100 552px,#990e00 564px,#990b00 576px,#990900 588px,#990600 600px,#990500 604px)"></div><div style="top:216px;height:4px;background:linear-gradient(90deg,#009928 0px,#009928 12px,#009928 24px,#009928 36px,#009928 48px,#009928 60px,#009928 72px,#009928 84px,#009928 96px,#009928 108px,#009928 120px,#009928 132px,#009928 144px,#009928 156px,#009928 168px,#009928 180px,#009928 192px,#009928 204px,#009928 216px,#0a9926 228px,#179924 240px,#259921 252px,#34991e 264px,#43991b 276px,#539918 288px,#649914 300px,#769911 312px,#89990d 324px,#999509 336px,#998304 348px,#997501 360px,#996900 372px,#995e00 384px,#995500 396px,#994c00 408px,#994400 420px,#993e00 432px,#993700 444px,#993100 456px,#992c00 468px,#992700 480px,#992300 492px,#991e00 504px,#991a00 516px,#991700 528px,#991300 540px,#991000 552px,#990d00 564px,#990a00 576px,#990800 588px,#990500 600px,#990400 604px)"></div><div style="top:220px;height:4px;background:linear-gradient(90deg,#00992b 0px,#00992b 12px,#00992b 24px,#00992b 36px,#00992b 48px,#00992b 60px,#00992b 72px,#00992b 84px,#00992b 96px,#00992b 108px,#00992b 120px,#00992b 132px,#00992b 144px,#00992b 156px,#00992b 168px,#00992b 180px,#00992b 192px,#00992b 204px,#00992b 216px,#0c9929 228px,#199926 240px,#289924 252px,#379921 264px,#46991e 276px,#57991b 288px,#689917 300px,#7b9914 312px,#8e9910 324px,#99900b 336px,#997f06 348px,#997102 360px,#996500 372px,#995b00 384px,#995200 396px,#994900 408px,#994200 420px,#993b00 432px,#993500 444px,#993000 456px,#992a00 468px,#992600 480px,#992100 492px,#991d00 504px,#991900 516px,#991600 528px,#991200 540px,#990f00 552px,#990c00 564px,#990900 576px,#990700 588px,#990400 600px,#990300 604px)"></div><div style="top:224px;height:4px;background:linear-gradient(90deg,#00992e 0px,#00992e 12px,#00992e 24px,#00992e 36px,#00992e 48px,#00992e 60px,#00992e 72px,#00992e 84px,#00992e 96px,#00992e 108px,#00992e 120px,#00992e 132px,#00992e 144px,#00992e 156px,#00992e 168px,#00992e 180px,#00992e 192px,#00992e 204px,#00992e 216px,#0e992c 228px,#1b9929 240px,#2a9926 252px,#399923 264px,#4a9920 276px,#5b991d 288px,#6d991a 300px,#809916 312px,#949913 324px,#998b0d 336px,#997a08 348px,#996d04 360px,#996101 372px,#995700 384px,#994f00 396px,#994700 408px,#994000 420px,#993900 432px,#993300 444px,#992e00 456px,#992900 468px,#992400 480px,#992000 492px,#991c00 504px,#991800 516px,#991400 528px,#991100 540px,#990e00 552px,#990b00 564px,#990800 576px,#990600 588px,#990300 600px,#990300 604px)"></div><div style="top:228px;height:4px;background:linear-gradient(90deg,#009931 0px,#009931 12px,#009931 24px,#009931 36px,#009931 48px,#009931 60px,#009931 72px,#009931 84px,#009931 96px,#009931 108px,#009931 120px,#009931 132px,#009931 144px,#009931 156px,#009931 168px,#009931 180px,#009931 192px,#009931 204px,#029931 216px,#0f992f 228px,#1e992c 240px,#2d9929 252px,#3c9926 264px,#4d9923 276px,#5e9920 288px,#71991d 300px,#849919 312px,#999916 324px,#99860f 336px,#99760a 348px,#996906 360px,#995e03 372px,#995400 384px,#994c00 396px,#994400 408px,#993d00 420px,#993700 432px,#993100 444px,#992c00 456px,#992700 468px,#992200 480px,#991e00 492px,#991a00 504px,#991700 516px,#991300 528px,#991000 540px,#990d00 552px,#990a00 564px,#990800 576px,#990500 588px,#990300 600px,#990200 604px)"></div><div style="top:232px;height:4px;background:linear-gradient(90deg,#009935 0px,#009935 12px,#009935 24px,#009935 36px,#009935 48px,#009935 60px,#009935 72px,#009935 84px,#009935 96px,#009935 108px,#009935 120px,#009935 132px,#009935 144px,#009935 156px,#009935 168px,#009935 180px,#009935 192px,#009935 204px,#049934 216px,#119931 228px,#20992f 240px,#2f992c 252px,#409929 264px,#519926 276px,#639923 288px,#769920 300px,#8a991c 312px,#999318 324px,#998111 336px,#99720c 348px,#996508 360px,#995a04 372px,#995101 384px,#994900 396px,#994200 408px,#993b00 420px,#993500 432px,#992f00 444px,#992a00 456px,#992500 468px,#992100 480px,#991d00 492px,#991900 504px,#991500 516px,#991200 528px,#990f00 540px,#990c00 552px,#990900 564px,#990700 576px,#990400 588px,#990200 600px,#990100 604px)"></div><div style="top:236px;height:4px;background:linear-gradient(90deg,#009938 0px,#009938 12px,#009938 24px,#009938 36px,#009938 48px,#009938 60px,#009938 72px,#009938 84px,#009938 96px,#009938 108px,#009938 120px,#009938 132px,#009938 144px,#009938 156px,#009938 168px,#009938 180px,#009938 192px,#009938 204px,#059937 216px,#139935 228px,#229932 240px,#32992f 252px,#43992d 264px,#54992a 276px,#679926 288px,#7a9923 300px,#8f9920 312px,#998e1a 324px,#997c13 336px,#996e0e 348px,#99610a 360px,#995706 372px,#994e03 384px,#994600 396px,#993f00 408px,#993900 420px,#993300 432px,#992d00 444px,#992800 456px,#992400 468px,#991f00 480px,#991b00 492px,#991800 504px,#991400 516px,#991100 528px,#990e00 540px,#990b00 552px,#990800 564px,#990600 576px,#990300 588px,#990100 600px,#990000 604px)"></div><div style="top:240px;height:4px;background:linear-gradient(90deg,#00993b 0px,#00993b 12px,#00993b 24px,#00993b 36px,#00993b 48px,#00993b 60px,#00993b 72px,#00993b 84px,#00993b 96px,#00993b 108px,#00993b 120px,#00993b 132px,#00993b 144px,#00993b 156px,#00993b 168px,#00993b 180px,#00993b 192px,#00993b 204px,#07993a 216px,#169938 228px,#259935 240px,#359933 252px,#469930 264px,#58992d 276px,#6b992a 288px,#7f9927 300px,#959923 312px,#99891c 324px,#997815 336px,#996a10 348px,#995e0b 360px,#995408 372px,#994b04 384px,#994401 396px,#993d00 408px,#993700 420px,#993100 432px,#992c00 444px,#992700 456px,#992200 468px,#991e00 480px,#991a00 492px,#991600 504px,#991300 516px,#991000 528px,#990d00 540px,#990a00 552px,#990700 564px,#990500 576px,#990200 588px,#990000 600px,#990000 604px)"></div><div style="top:244px;height:4px;background:linear-gradient(90deg,#00993f 0px,#00993f 12px,#00993f 24px,#00993f 36px,#00993f 48px,#00993f 60px,#00993f 72px,#00993f 84px,#00993f 96px,#00993f 108px,#00993f 120px,#00993f 132px,#00993f 144px,#00993f 156px,#00993f 168px,#00993f 180px,#00993f 192px,#00993f 204px,#09993d 216px,#18993b 228px,#289939 240px,#389936 252px,#4a9933 264px,#5c9930 276px,#70992d 288px,#85992a 300px,#999726 312px,#99831e 324px,#997317 336px,#996612 348px,#995a0d 360px,#995109 372px,#994806 384px,#994103 396px,#993b00 408px,#993500 420px,#992f00 432px,#992a00 444px,#992500 456px,#992100 468px,#991d00 480px,#991900 492px,#991500 504px,#991200 516px,#990f00 528px,#990c00 540px,#990900 552px,#990600 564px,#990400 576px,#990200 588px,#990000 600px,#990000 604px)"></div><div style="top:248px;height:4px;background:linear-gradient(90deg,#009943 0px,#009943 12px,#009943 24px,#009943 36px,#009943 48px,#009943 60px,#009943 72px,#009943 84px,#009943 96px,#009943 108px,#009943 120px,#009943 132px,#009943 144px,#009943 156px,#009943 168px,#009943 180px,#009943 192px,#009943 204px,#0b9941 216px,#1a993f 228px,#2a993c 240px,#3b993a 252px,#4d9937 264px,#609934 276px,#759931 288px,#8a992e 300px,#999128 312px,#997e20 324px,#996f19 336px,#996213 348px,#99570f 360px,#994e0b 372px,#994507 384px,#993e04 396px,#993801 408px,#993300 420px,#992d00 432px,#992800 444px,#992400 456px,#991f00 468px,#991b00 480px,#991800 492px,#991400 504px,#991100 516px,#990e00 528px,#990b00 540px,#990800 552px,#990600 564px,#990300 576px,#990100 588px,#990000 600px,#990000 604px)"></div><div style="top:252px;height:4px;background:linear-gradient(90deg,#009946 0px,#009946 12px,#009946 24px,#009946 36px,#009946 48px,#009946 60px,#009946 72px,#009946 84px,#009946 96px,#009946 108px,#009946 120px,#009946 132px,#009946 144px,#009946 156px,#009946 168px,#009946 180px,#009946 192px,#009946 204px,#0d9944 216px,#1d9942 228px,#2d9940 240px,#3f993d 252px,#51993b 264px,#659938 276px,#7a9935 288px,#909932 300px,#998c2a 312px,#997922 324px,#996a1b 336px,#995e15 348px,#995310 360px,#994a0c 372px,#994309 384px,#993c06 396px,#993603 408px,#993100 420px,#992b00 432px,#992600 444px,#992200 456px,#991e00 468px,#991a00 480px,#991600 492px,#991300 504px,#991000 516px,#990d00 528px,#990a00 540px,#990700 552px,#990500 564px,#990200 576px,#990000 588px,#990000 600px,#990000 604px)"></div><div style="top:256px;height:4px;background:linear-gradient(90deg,#00994a 0px,#00994a 12px,#00994a 24px,#00994a 36px,#00994a 48px,#00994a 60px,#00994a 72px,#00994a 84px,#00994a 96px,#00994a 108px,#00994a 120px,#00994a 132px,#00994a 144px,#00994a 156px,#00994a 168px,#00994a 180px,#00994a 192px,#00994a 204px,#0f9948 216px,#1f9946 228px,#309944 240px,#429941 252px,#55993f 264px,#69993c 276px,#7f9939 288px,#969936 300px,#99862c 312px,#997524 324px,#99661d 336px,#995a17 348px,#995012 360px,#99470e 372px,#99400a 384px,#993907 396px,#993404 408px,#992e02 420px,#992a00 432px,#992500 444px,#992000 456px,#991c00 468px,#991900 480px,#991500 492px,#991200 504px,#990f00 516px,#990c00 528px,#990900 540px,#990600 552px,#990400 564px,#990200 576px,#990000 588px,#990000 600px,#990000 604px)"></div><div style="top:260px;height:4px;background:linear-gradient(90deg,#00994e 0px,#00994e 12px,#00994e 24px,#00994e 36px,#00994e 48px,#00994e 60px,#00994e 72px,#00994e 84px,#00994e 96px,#00994e 108px,#00994e 120px,#00994e 132px,#00994e 144px,#00994e 156px,#00994e 168px,#00994e 180px,#00994e 192px,#02994e 204px,#11994c 216px,#22994a 228px,#339948 240px,#469945 252px,#599943 264px,#6e9940 276px,#85993d 288px,#999639 300px,#99812e 312px,#997025 324px,#99621e 336px,#995719 348px,#994d14 360px,#99440f 372px,#993d0c 384px,#993708 396px,#993105 408px,#992c03 420px,#992801 432px,#992300 444px,#991f00 456px,#991b00 468px,#991700 480px,#991400 492px,#991100 504px,#990e00 516px,#990b00 528px,#990800 540px,#990500 552px,#990300 564px,#990100 576px,#990000 588px,#990000 600px,#990000 604px)"></div><div style="top:264px;height:4px;background:linear-gradient(90deg,#009953 0px,#009953 12px,#009953 24px,#009953 36px,#009953 48px,#009953 60px,#009953 72px,#009953 84px,#009953 96px,#009953 108px,#009953 120px,#009953 132px,#009953 144px,#009953 156px,#009953 168px,#009953 180px,#009953 192px,#049952 204px,#149950 216px,#25994e 228px,#37994c 240px,#4a994a 252px,#5e9947 264px,#739944 276px,#8b9942 288px,#998f3b 300px,#997b30 312px,#996b27 324px,#995e20 336px,#99531a 348px,#994a15 360px,#994211 372px,#993b0d 384px,#99340a 396px,#992f07 408px,#992a04 420px,#992602 432px,#992200 444px,#991e00 456px,#991a00 468px,#991600 480px,#991300 492px,#991000 504px,#990d00 516px,#990a00 528px,#990700 540px,#990500 552px,#990200 564px,#990000 576px,#990000 588px,#990000 600px,#990000 604px)"></div><div style="top:268px;height:4px;background:linear-gradient(90deg,#009957 0px,#009957 12px,#009957 24px,#009957 36px,#009957 48px,#009957 60px,#009957 72px,#009957 84px,#009957 96px,#009957 108px,#009957 120px,#009957 132px,#009957 144px,#009957 156px,#009957 168px,#009957 180px,#009957 192px,#069956 204px,#169954 216px,#289952 228px,#3a9950 240px,#4e994e 252px,#63994c 264px,#799949 276px,#919946 288px,#99893d 300px,#997632 312px,#996729 324px,#995a22 336px,#99501c 348px,#994717 360px,#993f12 372px,#99380e 384px,#99320b 396px,#992d08 408px,#992805 420px,#992403 432px,#992001 444px,#991c00 456px,#991800 468px,#991500 480px,#991200 492px,#990e00 504px,#990c00 516px,#990900 528px,#990600 540px,#990400 552px,#990100 564px,#990000 576px,#990000 588px,#990000 600px,#990000 604px)"></div><div style="top:272px;height:4px;background:linear-gradient(90deg,#00995b 0px,#00995b 12px,#00995b 24px,#00995b 36px,#00995b 48px,#00995b 60px,#00995b 72px,#00995b 84px,#00995b 96px,#00995b 108px,#00995b 120px,#00995b 132px,#00995b 144px,#00995b 156px,#00995b 168px,#00995b 180px,#00995b 192px,#08995b 204px,#199959 216px,#2b9957 228px,#3e9955 240px,#529953 252px,#689950 264px,#7f994e 276px,#97994b 288px,#99843e 300px,#997133 312px,#99632b 324px,#995623 336px,#994c1d 348px,#994318 360px,#993c14 372px,#993510 384px,#99300c 396px,#992b09 408px,#992606 420px,#992204 432px,#991e02 444px,#991b00 456px,#991700 468px,#991400 480px,#991000 492px,#990d00 504px,#990b00 516px,#990800 528px,#990500 540px,#990300 552px,#990100 564px,#990000 576px,#990000 588px,#990000 600px,#990000 604px)"></div><div style="top:276px;height:4px;background:linear-gradient(90deg,#009960 0px,#009960 12px,#009960 24px,#009960 36px,#009960 48px,#009960 60px,#009960 72px,#009960 84px,#009960 96px,#009960 108px,#009960 120px,#009960 132px,#009960 144px,#009960 156px,#009960 168px,#009960 180px,#009960 192px,#0a995f 204px,#1b995e 216px,#2e995c 228px,#41995a 240px,#569958 252px,#6d9956 264px,#859953 276px,#99944e 288px,#997e40 300px,#996c35 312px,#995e2c 324px,#995325 336px,#99491f 348px,#99401a 360px,#993915 372px,#993311 384px,#992d0d 396px,#99280a 408px,#992408 420px,#992005 432px,#991c03 444px,#991901 456px,#991600 468px,#991300 480px,#990f00 492px,#990c00 504px,#990a00 516px,#990700 528px,#990500 540px,#990200 552px,#990000 564px,#990000 576px,#990000 588px,#990000 600px,#990000 604px)"></div><div style="top:280px;height:4px;background:linear-gradient(90deg,#009965 0px,#009965 12px,#009965 24px,#009965 36px,#009965 48px,#009965 60px,#009965 72px,#009965 84px,#009965 96px,#009965 108px,#009965 120px,#009965 132px,#009965 144px,#009965 156px,#009965 168px,#009965 180px,#009965 192px,#0c9964 204px,#1e9962 216px,#319961 228px,#45995f 240px,#5b995d 252px,#72995b 264px,#8b9959 276px,#998d50 288px,#997842 300px,#996837 312px,#995a2e 324px,#994f27 336px,#994520 348px,#993d1b 360px,#993616 372px,#993012 384px,#992b0f 396px,#99260c 408px,#992209 420px,#991e06 432px,#991b04 444px,#991802 456px,#991500 468px,#991100 480px,#990e00 492px,#990b00 504px,#990900 516px,#990600 528px,#990400 540px,#990100 552px,#990000 564px,#990000 576px,#990000 588px,#990000 600px,#990000 604px)"></div><div style="top:284px;height:4px;background:linear-gradient(90deg,#00996a 0px,#00996a 12px,#00996a 24px,#00996a 36px,#00996a 48px,#00996a 60px,#00996a 72px,#00996a 84px,#00996a 96px,#00996a 108px,#00996a 120px,#00996a 132px,#00996a 144px,#00996a 156px,#00996a 168px,#00996a 180px,#00996a 192px,#0f9969 204px,#219968 216px,#359966 228px,#4a9964 240px,#609963 252px,#789961 264px,#92995f 276px,#998751 288px,#997343 300px,#996338 312px,#99562f 324px,#994b28 336px,#994222 348px,#993a1c 360px,#993418 372px,#992e14 384px,#992910 396px,#99240d 408px,#99200a 420px,#991c07 432px,#991905 444px,#991603 456px,#991301 468px,#991000 480px,#990d00 492px,#990a00 504px,#990800 516px,#990500 528px,#990300 540px,#990100 552px,#990000 564px,#990000 576px,#990000 588px,#990000 600px,#990000 604px)"></div><div style="top:288px;height:4px;background:linear-gradient(90deg,#009970 0px,#009970 12px,#009970 24px,#009970 36px,#009970 48px,#009970 60px,#009970 72px,#009970 84px,#009970 96px,#009970 108px,#009970 120px,#009970 132px,#009970 144px,#009970 156px,#009970 168px,#009970 180px,#009970 192px,#11996e 204px,#24996d 216px,#38996c 228px,#4e996a 240px,#659968 252px,#7e9967 264px,#999965 276px,#998153 288px,#996e45 300px,#995e3a 312px,#995231 324px,#99482a 336px,#993f23 348px,#99381e 360px,#993119 372px,#992b15 384px,#992611 396px,#99220e 408px,#991e0b 420px,#991a08 432px,#991706 444px,#991404 456px,#991202 468px,#990f00 480px,#990c00 492px,#990a00 504px,#990700 516px,#990400 528px,#990200 540px,#990000 552px,#990000 564px,#990000 576px,#990000 588px,#990000 600px,#990000 604px)"></div><div style="top:292px;height:4px;background:linear-gradient(90deg,#009975 0px,#009975 12px,#009975 24px,#009975 36px,#009975 48px,#009975 60px,#009975 72px,#009975 84px,#009975 96px,#009975 108px,#009975 120px,#009975 132px,#009975 144px,#009975 156px,#009975 168px,#009975 180px,#029975 192px,#149974 204px,#289973 216px,#3c9971 228px,#539970 240px,#6b996f 252px,#85996d 264px,#999266 276px,#997b54 288px,#996947 300px,#995a3c 312px,#994e33 324px,#99442b 336px,#993c25 348px,#99351f 360px,#992f1a 372px,#992916 384px,#992412 396px,#99200f 408px,#991c0c 420px,#99190a 432px,#991607 444px,#991305 456px,#991003 468px,#990e01 480px,#990b00 492px,#990900 504px,#990600 516px,#990400 528px,#990100 540px,#990000 552px,#990000 564px,#990000 576px,#990000 588px,#990000 600px,#990000 604px)"></div><div style="top:296px;height:4px;background:linear-gradient(90deg,#00997b 0px,#00997b 12px,#00997b 24px,#00997b 36px,#00997b 48px,#00997b 60px,#00997b 72px,#00997b 84px,#00997b 96px,#00997b 108px,#00997b 120px,#00997b 132px,#00997b 144px,#00997b 156px,#00997b 168px,#00997b 180px,#04997b 192px,#17997a 204px,#2b9979 216px,#419978 228px,#589976 240px,#719975 252px,#8c9974 264px,#998b68 276px,#997556 288px,#996448 300px,#99563d 312px,#994a34 324px,#99412c 336px,#993926 348px,#993220 360px,#992c1c 372px,#992717 384px,#992214 396px,#991e10 408px,#991a0d 420px,#99170b 432px,#991408 444px,#991106 456px,#990f04 468px,#990c02 480px,#990a00 492px,#990800 504px,#990500 516px,#990300 528px,#990000 540px,#990000 552px,#990000 564px,#990000 576px,#990000 588px,#990000 600px,#990000 604px)"></div><div style="top:300px;height:4px;background:linear-gradient(90deg,#009981 0px,#009981 12px,#009981 24px,#009981 36px,#009981 48px,#009981 60px,#009981 72px,#009981 84px,#009981 96px,#009981 108px,#009981 120px,#009981 132px,#009981 144px,#009981 156px,#009981 168px,#009981 180px,#069981 192px,#1a9980 204px,#2f997f 216px,#45997e 228px,#5d997d 240px,#77997c 252px,#93997b 264px,#998469 276px,#996f57 288px,#995f4a 300px,#99523f 312px,#994735 324px,#993e2e 336px,#993627 348px,#992f22 360px,#99291d 372px,#992419 384px,#992015 396px,#991c11 408px,#99180e 420px,#99150c 432px,#991209 444px,#991007 456px,#990d05 468px,#990b03 480px,#990901 492px,#990700 504px,#990400 516px,#990200 528px,#990000 540px,#990000 552px,#990000 564px,#990000 576px,#990000 588px,#990000 600px,#990000 604px)"></div><div style="top:304px;height:4px;background:linear-gradient(90deg,#009987 0px,#009987 12px,#009987 24px,#009987 36px,#009987 48px,#009987 60px,#009987 72px,#009987 84px,#009987 96px,#009987 108px,#009987 120px,#009987 132px,#009987 144px,#009987 156px,#009987 168px,#009987 180px,#099987 192px,#1d9986 204px,#329986 216px,#4a9985 228px,#639984 240px,#7e9984 252px,#999781 264px,#997d6a 276px,#996a59 288px,#995a4b 300px,#994d40 312px,#994337 324px,#993a2f 336px,#993329 348px,#992d23 360px,#99271e 372px,#99221a 384px,#991e16 396px,#991a13 408px,#99170f 420px,#99130d 432px,#99110a 444px,#990e08 456px,#990c06 468px,#990904 480px,#990702 492px,#990601 504px,#990300 516px,#990100 528px,#990000 540px,#990000 552px,#990000 564px,#990000 576px,#990000 588px,#990000 600px,#990000 604px)"></div><div style="top:308px;height:4px;background:linear-gradient(90deg,#00998e 0px,#00998e 12px,#00998e 24px,#00998e 36px,#00998e 48px,#00998e 60px,#00998e 72px,#00998e 84px,#00998e 96px,#00998e 108px,#00998e 120px,#00998e 132px,#00998e 144px,#00998e 156px,#00998e 168px,#00998e 180px,#0b998e 192px,#20998d 204px,#37998d 216px,#4f998c 228px,#69998c 240px,#85998c 252px,#998f82 264px,#99776c 276px,#99645a 288px,#99554d 300px,#994941 312px,#994038 324px,#993731 336px,#99302a 348px,#992a24 360px,#99251f 372px,#99201b 384px,#991c17 396px,#991814 408px,#991511 420px,#99120e 432px,#990f0b 444px,#990c09 456px,#990a07 468px,#990805 480px,#990603 492px,#990401 504px,#990300 516px,#990000 528px,#990000 540px,#990000 552px,#990000 564px,#990000 576px,#990000 588px,#990000 600px,#990000 604px)"></div><div style="top:312px;height:4px;background:linear-gradient(90deg,#009995 0px,#009995 12px,#009995 24px,#009995 36px,#009995 48px,#009995 60px,#009995 72px,#009995 84px,#009995 96px,#009995 108px,#009995 120px,#009995 132px,#009995 144px,#009995 156px,#009995 168px,#009995 180px,#0e9995 192px,#249995 204px,#3b9994 216px,#549994 228px,#6f9994 240px,#8c9994 252px,#998883 264px,#99716d 276px,#995f5c 288px,#99514e 300px,#994643 312px,#993c3a 324px,#993432 336px,#992d2b 348px,#992725 360px,#992220 372px,#991e1c 384px,#991a18 396px,#991615 408px,#991312 420px,#99100f 432px,#990d0c 444px,#990b0a 456px,#990908 468px,#990706 480px,#990504 492px,#990302 504px,#990101 516px,#990000 528px,#990000 540px,#990000 552px,#990000 564px,#990000 576px,#990000 588px,#990000 600px,#990000 604px)"></div><div style="top:316px;height:4px;background:linear-gradient(90deg,#009699 0px,#009699 12px,#009699 24px,#009699 36px,#009699 48px,#009699 60px,#009699 72px,#009699 84px,#009699 96px,#009699 108px,#009699 120px,#009699 132px,#009699 144px,#009699 156px,#009699 168px,#009699 180px,#119699 192px,#279699 204px,#3e9699 216px,#579599 228px,#739599 240px,#919599 252px,#998084 264px,#996b6e 276px,#995a5d 288px,#994d4f 300px,#994244 312px,#99393b 324px,#993133 336px,#992a2c 348px,#992527 360px,#992022 372px,#991c1d 384px,#991819 396px,#991416 408px,#991113 420px,#990e10 432px,#990c0d 444px,#99090b 456px,#990709 468px,#990507 480px,#990405 492px,#990203 504px,#990001 516px,#990000 528px,#990000 540px,#990000 552px,#990000 564px,#990000 576px,#990000 588px,#990000 600px,#990000 604px)"></div><div style="top:320px;height:4px;background:linear-gradient(90deg,#008f99 0px,#008f99 12px,#008f99 24px,#008f99 36px,#008f99 48px,#008f99 60px,#008f99 72px,#008f99 84px,#008f99 96px,#008f99 108px,#008f99 120px,#008f99 132px,#008f99 144px,#008f99 156px,#008f99 168px,#008f99 180px,#138f99 192px,#288e99 204px,#3f8e99 216px,#588d99 228px,#738d99 240px,#908c99 252px,#997985 264px,#99656f 276px,#99555e 288px,#994851 300px,#993e45 312px,#99353c 324px,#992e34 336px,#99282e 348px,#992228 360px,#991e23 372px,#99191e 384px,#99161a 396px,#991217 408px,#990f14 420px,#990d11 432px,#990a0e 444px,#99080c 456px,#99060a 468px,#990407 480px,#990206 492px,#990104 504px,#990002 516px,#990000 528px,#990000 540px,#990000 552px,#990000 564px,#990000 576px,#990000 588px,#990000 600px,#990000 604px)"></div><div style="top:324px;height:4px;background:linear-gradient(90deg,#008899 0px,#008899 12px,#008899 24px,#008899 36px,#008899 48px,#008899 60px,#008899 72px,#008899 84px,#008899 96px,#008899 108px,#008899 120px,#008899 132px,#008899 144px,#008899 156px,#008899 168px,#018899 180px,#158899 192px,#2a8799 204px,#418699 216px,#598699 228px,#738599 240px,#908499 252px,#997386 264px,#995f70 276px,#99505f 288px,#994452 300px,#993a47 312px,#99323d 324px,#992b36 336px,#99252f 348px,#992029 360px,#991b24 372px,#99171f 384px,#99141b 396px,#991018 408px,#990e15 420px,#990b12 432px,#99090f 444px,#99060d 456px,#99040a 468px,#990308 480px,#990106 492px,#990005 504px,#990003 516px,#990001 528px,#990000 540px,#990000 552px,#990000 564px,#990000 576px,#990000 588px,#990000 600px,#990000 604px)"></div><div style="top:328px;height:4px;background:linear-gradient(90deg,#008299 0px,#008299 12px,#008299 24px,#008299 36px,#008299 48px,#008299 60px,#008299 72px,#008299 84px,#008299 96px,#008299 108px,#008299 120px,#008299 132px,#008299 144px,#008299 156px,#008299 168px,#048299 180px,#178199 192px,#2c8099 204px,#427f99 216px,#5a7e99 228px,#747d99 240px,#8f7c99 252px,#996c87 264px,#995a71 276px,#994c61 288px,#994053 300px,#993748 312px,#992f3f 324px,#992837 336px,#992230 348px,#991d2a 360px,#991925 372px,#991521 384px,#99121d 396px,#990f19 408px,#990c16 420px,#990913 432px,#990710 444px,#99050e 456px,#99030b 468px,#990109 480px,#990007 492px,#990005 504px,#990003 516px,#990001 528px,#990000 540px,#990000 552px,#990000 564px,#990000 576px,#990000 588px,#990000 600px,#990000 604px)"></div><div style="top:332px;height:4px;background:linear-gradient(90deg,#007c99 0px,#007c99 12px,#007c99 24px,#007c99 36px,#007c99 48px,#007c99 60px,#007c99 72px,#007c99 84px,#007c99 96px,#007c99 108px,#007c99 120px,#007c99 132px,#007c99 144px,#007c99 156px,#007c99 168px,#067c99 180px,#197b99 192px,#2d7a99 204px,#437899 216px,#5b7799 228px,#747699 240px,#8f7499 252px,#996688 264px,#995572 276px,#994762 288px,#993c54 300px,#993349 312px,#992c40 324px,#992538 336px,#992031 348px,#991b2b 360px,#991726 372px,#991322 384px,#99101e 396px,#990d1a 408px,#990a17 420px,#990814 432px,#990611 444px,#99040e 456px,#99020c 468px,#99000a 480px,#990008 492px,#990006 504px,#990004 516px,#990002 528px,#990000 540px,#990000 552px,#990000 564px,#990000 576px,#990000 588px,#990000 600px,#990000 604px)"></div><div style="top:336px;height:4px;background:linear-gradient(90deg,#007699 0px,#007699 12px,#007699 24px,#007699 36px,#007699 48px,#007699 60px,#007699 72px,#007699 84px,#007699 96px,#007699 108px,#007699 120px,#007699 132px,#007699 144px,#007699 156px,#007699 168px,#087699 180px,#1b7499 192px,#2f7399 204px,#447299 216px,#5b7099 228px,#746f99 240px,#8f6d99 252px,#996088 264px,#994f73 276px,#994363 288px,#993855 300px,#99304a 312px,#992941 324px,#992239 336px,#991d32 348px,#99192d 360px,#991527 372px,#991123 384px,#990e1f 396px,#990b1b 408px,#990918 420px,#990615 432px,#990412 444px,#99020f 456px,#99000d 468px,#99000b 480px,#990008 492px,#990006 504px,#990004 516px,#990002 528px,#990000 540px,#990000 552px,#990000 564px,#990000 576px,#990000 588px,#990000 600px,#990000 604px)"></div><div style="top:340px;height:4px;background:linear-gradient(90deg,#007099 0px,#007099 12px,#007099 24px,#007099 36px,#007099 48px,#007099 60px,#007099 72px,#007099 84px,#007099 96px,#007099 108px,#007099 120px,#007099 132px,#007099 144px,#007099 156px,#007099 168px,#0a7099 180px,#1c6e99 192px,#306d99 204px,#456b99 216px,#5c6a99 228px,#746899 240px,#8e6699 252px,#995a89 264px,#994a74 276px,#993e64 288px,#993457 300px,#992c4c 312px,#992642 324px,#99203a 336px,#991b34 348px,#99162e 360px,#991228 372px,#990f24 384px,#990c20 396px,#99091c 408px,#990719 420px,#990516 432px,#990313 444px,#990110 456px,#99000e 468px,#99000b 480px,#990009 492px,#990007 504px,#990005 516px,#990002 528px,#990001 540px,#990000 552px,#990000 564px,#990000 576px,#990000 588px,#990000 600px,#990000 604px)"></div><div style="top:344px;height:4px;background:linear-gradient(90deg,#006b99 0px,#006b99 12px,#006b99 24px,#006b99 36px,#006b99 48px,#006b99 60px,#006b99 72px,#006b99 84px,#006b99 96px,#006b99 108px,#006b99 120px,#006b99 132px,#006b99 144px,#006b99 156px,#006b99 168px,#0c6a99 180px,#1e6999 192px,#326799 204px,#466599 216px,#5d6399 228px,#746199 240px,#8e5f99 252px,#99548a 264px,#994675 276px,#993a65 288px,#993158 300px,#99294d 312px,#992343 324px,#991d3c 336px,#991835 348px,#99142f 360px,#991029 372px,#990d25 384px,#990a21 396px,#99081d 408px,#99051a 420px,#990316 432px,#990114 444px,#990011 456px,#99000e 468px,#99000c 480px,#990009 492px,#990007 504px,#990005 516px,#990003 528px,#990001 540px,#990000 552px,#990000 564px,#990000 576px,#990000 588px,#990000 600px,#990000 604px)"></div><div style="top:348px;height:4px;background:linear-gradient(90deg,#006699 0px,#006699 12px,#006699 24px,#006699 36px,#006699 48px,#006699 60px,#006699 72px,#006699 84px,#006699 96px,#006699 108px,#006699 120px,#006699 132px,#006699 144px,#006699 156px,#006699 168px,#0e6599 180px,#206399 192px,#336199 204px,#475f99 216px,#5d5d99 228px,#755b99 240px,#8e5999 252px,#994e8b 264px,#994176 276px,#993666 288px,#992d59 300px,#99264e 312px,#992045 324px,#991a3d 336px,#991636 348px,#991230 360px,#990e2b 372px,#990b26 384px,#990822 396px,#99061e 408px,#99041a 420px,#990217 432px,#990015 444px,#990012 456px,#99000f 468px,#99000c 480px,#99000a 492px,#990008 504px,#990006 516px,#990003 528px,#990001 540px,#990000 552px,#990000 564px,#990000 576px,#990000 588px,#990000 600px,#990000 604px)"></div><div style="top:352px;height:4px;background:linear-gradient(90deg,#006199 0px,#006199 12px,#006199 24px,#006199 36px,#006199 48px,#006199 60px,#006199 72px,#006199 84px,#006199 96px,#006199 108px,#006199 120px,#006199 132px,#006199 144px,#006199 156px,#006199 168px,#105f99 180px,#215e99 192px,#345c99 204px,#485a99 216px,#5e5899 228px,#755599 240px,#8d5399 252px,#99498c 264px,#993c77 276px,#993267 288px,#992a5a 300px,#99234f 312px,#991d46 324px,#99183e 336px,#991337 348px,#991031 360px,#990c2c 372px,#990927 384px,#990723 396px,#99041f 408px,#99021b 420px,#990018 432px,#990015 444px,#990012 456px,#990010 468px,#99000d 480px,#99000b 492px,#990008 504px,#990006 516px,#990004 528px,#990002 540px,#990000 552px,#990000 564px,#990000 576px,#990000 588px,#990000 600px,#990000 604px)"></div><div style="top:356px;height:4px;background:linear-gradient(90deg,#005c99 0px,#005c99 12px,#005c99 24px,#005c99 36px,#005c99 48px,#005c99 60px,#005c99 72px,#005c99 84px,#005c99 96px,#005c99 108px,#005c99 120px,#005c99 132px,#005c99 144px,#005c99 156px,#015c99 168px,#115a99 180px,#235899 192px,#365699 204px,#495499 216px,#5e5299 228px,#754f99 240px,#8d4d99 252px,#99448c 264px,#993878 276px,#992e68 288px,#99265b 300px,#992050 312px,#991a47 324px,#99153f 336px,#991138 348px,#990d32 360px,#990a2d 372px,#990728 384px,#990524 396px,#990220 408px,#99001c 420px,#990019 432px,#990016 444px,#990013 456px,#990010 468px,#99000e 480px,#99000b 492px,#990009 504px,#990007 516px,#990004 528px,#990002 540px,#990000 552px,#990000 564px,#990000 576px,#990000 588px,#990000 600px,#990000 604px)"></div><div style="top:360px;height:4px;background:linear-gradient(90deg,#005899 0px,#005899 12px,#005899 24px,#005899 36px,#005899 48px,#005899 60px,#005899 72px,#005899 84px,#005899 96px,#005899 108px,#005899 120px,#005899 132px,#005899 144px,#005899 156px,#035799 168px,#135599 180px,#245399 192px,#375199 204px,#4a4f99 216px,#5f4c99 228px,#754a99 240px,#8d4799 252px,#993f8d 264px,#993379 276px,#992a69 288px,#99235c 300px,#991d51 312px,#991748 324px,#991340 336px,#990f39 348px,#990b33 360px,#99082e 372px,#990529 384px,#990325 396px,#990121 408px,#99001d 420px,#99001a 432px,#990017 444px,#990014 456px,#990011 468px,#99000e 480px,#99000c 492px,#990009 504px,#990007 516px,#990005 528px,#990003 540px,#990001 552px,#990000 564px,#990000 576px,#990000 588px,#990000 600px,#990000 604px)"></div><div style="top:364px;height:4px;background:linear-gradient(90deg,#005399 0px,#005399 12px,#005399 24px,#005399 36px,#005399 48px,#005399 60px,#005399 72px,#005399 84px,#005399 96px,#005399 108px,#005399 120px,#005399 132px,#005399 144px,#005399 156px,#055399 168px,#155199 180px,#264e99 192px,#384c99 204px,#4b4a99 216px,#604799 228px,#754599 240px,#8d4299 252px,#993a8e 264px,#992f7a 276px,#99276a 288px,#99205d 300px,#991a52 312px,#991549 324px,#991041 336px,#990c3a 348px,#990934 360px,#99062f 372px,#99042a 384px,#990126 396px,#990022 408px,#99001e 420px,#99001b 432px,#990017 444px,#990014 456px,#990012 468px,#99000f 480px,#99000c 492px,#99000a 504px,#990008 516px,#990005 528px,#990003 540px,#990001 552px,#990000 564px,#990000 576px,#990000 588px,#990000 600px,#990000 604px)"></div><div style="top:368px;height:4px;background:linear-gradient(90deg,#004f99 0px,#004f99 12px,#004f99 24px,#004f99 36px,#004f99 48px,#004f99 60px,#004f99 72px,#004f99 84px,#004f99 96px,#004f99 108px,#004f99 120px,#004f99 132px,#004f99 144px,#004f99 156px,#064e99 168px,#164c99 180px,#274a99 192px,#394799 204px,#4c4599 216px,#604299 228px,#753f99 240px,#8c3c99 252px,#99358e 264px,#992b7b 276px,#99236b 288px,#991c5e 300px,#991753 312px,#99124a 324px,#990e42 336px,#990a3b 348px,#990735 360px,#990430 372px,#99022b 384px,#990026 396px,#990023 408px,#99001f 420px,#99001b 432px,#990018 444px,#990015 456px,#990012 468px,#990010 480px,#99000d 492px,#99000b 504px,#990008 516px,#990006 528px,#990004 540px,#990002 552px,#990000 564px,#990000 576px,#990000 588px,#990000 600px,#990000 604px)"></div><div style="top:372px;height:4px;background:linear-gradient(90deg,#004b99 0px,#004b99 12px,#004b99 24px,#004b99 36px,#004b99 48px,#004b99 60px,#004b99 72px,#004b99 84px,#004b99 96px,#004b99 108px,#004b99 120px,#004b99 132px,#004b99 144px,#004b99 156px,#084a99 168px,#184799 180px,#294599 192px,#3a4399 204px,#4d4099 216px,#613d99 228px,#763a99 240px,#8c3799 252px,#99308f 264px,#99277c 276px,#991f6c 288px,#99195f 300px,#991454 312px,#990f4b 324px,#990b43 336px,#99083c 348px,#990536 360px,#990231 372px,#99002c 384px,#990027 396px,#990023 408px,#990020 420px,#99001c 432px,#990019 444px,#990016 456px,#990013 468px,#990010 480px,#99000e 492px,#99000b 504px,#990009 516px,#990007 528px,#990004 540px,#990002 552px,#990000 564px,#990000 576px,#990000 588px,#990000 600px,#990000 604px)"></div><div style="top:376px;height:4px;background:linear-gradient(90deg,#004799 0px,#004799 12px,#004799 24px,#004799 36px,#004799 48px,#004799 60px,#004799 72px,#004799 84px,#004799 96px,#004799 108px,#004799 120px,#004799 132px,#004799 144px,#004799 156px,#0a4599 168px,#194399 180px,#2a4199 192px,#3b3e99 204px,#4e3b99 216px,#613999 228px,#763699 240px,#8c3299 252px,#992c8f 264px,#99237c 276px,#991c6d 288px,#991660 300px,#991155 312px,#990d4c 324px,#990944 336px,#99063d 348px,#990337 360px,#990131 372px,#99002d 384px,#990028 396px,#990024 408px,#990021 420px,#99001d 432px,#99001a 444px,#990017 456px,#990014 468px,#990011 480px,#99000e 492px,#99000c 504px,#990009 516px,#990007 528px,#990005 540px,#990003 552px,#990001 564px,#990000 576px,#990000 588px,#990000 600px,#990000 604px)"></div><div style="top:380px;height:4px;background:linear-gradient(90deg,#004399 0px,#004399 12px,#004399 24px,#004399 36px,#004399 48px,#004399 60px,#004399 72px,#004399 84px,#004399 96px,#004399 108px,#004399 120px,#004399 132px,#004399 144px,#004399 156px,#0c4199 168px,#1b3f99 180px,#2b3c99 192px,#3c3a99 204px,#4e3799 216px,#623499 228px,#763199 240px,#8c2e99 252px,#992890 264px,#991f7d 276px,#99196e 288px,#991361 300px,#990e56 312px,#990a4d 324px,#990745 336px,#99043e 348px,#990138 360px,#990033 372px,#99002e 384px,#990029 396px,#990025 408px,#990022 420px,#99001e 432px,#99001b 444px,#990017 456px,#990014 468px,#990012 480px,#99000f 492px,#99000c 504px,#99000a 516px,#990008 528px,#990005 540px,#990003 552px,#990001 564px,#990000 576px,#990000 588px,#990000 600px,#990000 604px)"></div><div style="top:384px;height:4px;background:linear-gradient(90deg,#003f99 0px,#003f99 12px,#003f99 24px,#003f99 36px,#003f99 48px,#003f99 60px,#003f99 72px,#003f99 84px,#003f99 96px,#003f99 108px,#003f99 120px,#003f99 132px,#003f99 144px,#003f99 156px,#0d3d99 168px,#1c3b99 180px,#2c3899 192px,#3d3599 204px,#4f3399 216px,#623099 228px,#762c99 240px,#8b2999 252px,#992391 264px,#991c7e 276px,#99156f 288px,#991062 300px,#990c57 312px,#99084e 324px,#990446 336px,#99023f 348px,#990039 360px,#990034 372px,#99002f 384px,#99002b 396px,#990026 408px,#990022 420px,#99001f 432px,#99001b 444px,#990018 456px,#990015 468px,#990012 480px,#99000f 492px,#99000d 504px,#99000a 516px,#990008 528px,#990006 540px,#990004 552px,#990002 564px,#990000 576px,#990000 588px,#990000 600px,#990000 604px)"></div><div style="top:388px;height:4px;background:linear-gradient(90deg,#003c99 0px,#003c99 12px,#003c99 24px,#003c99 36px,#003c99 48px,#003c99 60px,#003c99 72px,#003c99 84px,#003c99 96px,#003c99 108px,#003c99 120px,#003c99 132px,#003c99 144px,#003c99 156px,#0f3999 168px,#1e3799 180px,#2e3499 192px,#3e3199 204px,#502e99 216px,#622b99 228px,#762899 240px,#8b2599 252px,#991f91 264px,#99187f 276px,#99126f 288px,#990d63 300px,#990958 312px,#99054f 324px,#990247 336px,#990040 348px,#99003a 360px,#990035 372px,#990030 384px,#99002c 396px,#990027 408px,#990023 420px,#990020 432px,#99001c 444px,#990019 456px,#990016 468px,#990013 480px,#990010 492px,#99000d 504px,#99000b 516px,#990009 528px,#990006 540px,#990004 552px,#990002 564px,#990000 576px,#990000 588px,#990000 600px,#990000 604px)"></div><div style="top:392px;height:4px;background:linear-gradient(90deg,#003899 0px,#003899 12px,#003899 24px,#003899 36px,#003899 48px,#003899 60px,#003899 72px,#003899 84px,#003899 96px,#003899 108px,#003899 120px,#003899 132px,#003899 144px,#023899 156px,#103599 168px,#1f3399 180px,#2f3099 192px,#3f2d99 204px,#512a99 216px,#632799 228px,#762499 240px,#8b2099 252px,#991b92 264px,#99147f 276px,#990f70 288px,#990a64 300px,#990659 312px,#990350 324px,#990048 336px,#990041 348px,#99003c 360px,#990036 372px,#990031 384px,#99002d 396px,#990028 408px,#990024 420px,#990021 432px,#99001d 444px,#99001a 456px,#990017 468px,#990014 480px,#990011 492px,#99000e 504px,#99000c 516px,#990009 528px,#990007 540px,#990005 552px,#990003 564px,#990001 576px,#990000 588px,#990000 600px,#990000 604px)"></div><div style="top:396px;height:4px;background:linear-gradient(90deg,#003599 0px,#003599 12px,#003599 24px,#003599 36px,#003599 48px,#003599 60px,#003599 72px,#003599 84px,#003599 96px,#003599 108px,#003599 120px,#003599 132px,#003599 144px,#043499 156px,#123299 168px,#202f99 180px,#302c99 192px,#402999 204px,#512699 216px,#632399 228px,#762099 240px,#8b1c99 252px,#991792 264px,#991180 276px,#990c71 288px,#990764 300px,#99045a 312px,#990151 324px,#990049 336px,#990043 348px,#99003d 360px,#990038 372px,#990032 384px,#99002e 396px,#990029 408px,#990025 420px,#990021 432px,#99001e 444px,#99001a 456px,#990017 468px,#990014 480px,#990011 492px,#99000f 504px,#99000c 516px,#99000a 528px,#990008 540px,#990005 552px,#990003 564px,#990001 576px,#990000 588px,#990000 600px,#990000 604px)"></div><div style="top:400px;height:4px;background:linear-gradient(90deg,#003299 0px,#003299 12px,#003299 24px,#003299 36px,#003299 48px,#003299 60px,#003299 72px,#003299 84px,#003299 96px,#003299 108px,#003299 120px,#003299 132px,#003299 144px,#053199 156px,#132e99 168px,#222b99 180px,#312999 192px,#412699 204px,#522399 216px,#641f99 228px,#771c99 240px,#8a1899 252px,#991393 264px,#990e81 276px,#990972 288px,#990565 300px,#99015b 312px,#990052 324px,#99004b 336px,#990044 348px,#99003e 360px,#990039 372px,#990034 384px,#99002f 396px,#99002a 408px,#990026 420px,#990022 432px,#99001f 444px,#99001b 456px,#990018 468px,#990015 480px,#990012 492px,#99000f 504px,#99000d 516px,#99000a 528px,#990008 540px,#990006 552px,#990004 564px,#990002 576px,#990000 588px,#990000 600px,#990000 604px)"></div><div style="top:404px;height:4px;background:linear-gradient(90deg,#002e99 0px,#002e99 12px,#002e99 24px,#002e99 36px,#002e99 48px,#002e99 60px,#002e99 72px,#002e99 84px,#002e99 96px,#002e99 108px,#002e99 120px,#002e99 132px,#002e99 144px,#072d99 156px,#152b99 168px,#232899 180px,#322599 192px,#422299 204px,#531f99 216px,#641b99 228px,#771899 240px,#8a1499 252px,#991093 264px,#990a81 276px,#990673 288px,#990266 300px,#99005c 312px,#990054 324px,#99004d 336px,#990046 348px,#990040 360px,#99003a 372px,#990035 384px,#990030 396px,#99002b 408px,#990027 420px,#990023 432px,#990020 444px,#99001c 456px,#990019 468px,#990016 480px,#990013 492px,#990010 504px,#99000d 516px,#99000b 528px,#990009 540px,#990006 552px,#990004 564px,#990002 576px,#990000 588px,#990000 600px,#990000 604px)"></div><div style="top:408px;height:4px;background:linear-gradient(90deg,#002b99 0px,#002b99 12px,#002b99 24px,#002b99 36px,#002b99 48px,#002b99 60px,#002b99 72px,#002b99 84px,#002b99 96px,#002b99 108px,#002b99 120px,#002b99 132px,#002b99 144px,#082a99 156px,#162799 168px,#242499 180px,#332199 192px,#431e99 204px,#531b99 216px,#641899 228px,#771499 240px,#8a1099 252px,#990c94 264px,#990782 276px,#990373 288px,#990067 300px,#99005e 312px,#990056 324px,#99004e 336px,#990048 348px,#990041 360px,#99003b 372px,#990036 384px,#990031 396px,#99002d 408px,#990028 420px,#990024 432px,#990020 444px,#99001d 456px,#99001a 468px,#990016 480px,#990013 492px,#990011 504px,#99000e 516px,#99000c 528px,#990009 540px,#990007 552px,#990005 564px,#990003 576px,#990001 588px,#990000 600px,#990000 604px)"></div><div style="top:412px;height:4px;background:linear-gradient(90deg,#002899 0px,#002899 12px,#002899 24px,#002899 36px,#002899 48px,#002899 60px,#002899 72px,#002899 84px,#002899 96px,#002899 108px,#002899 120px,#002899 132px,#002899 144px,#0a2699 156px,#172499 168px,#252199 180px,#341e99 192px,#431b99 204px,#541899 216px,#651499 228px,#771199 240px,#8a0d99 252px,#990994 264px,#990483 276px,#990074 288px,#99006a 300px,#990060 312px,#990058 324px,#990050 336px,#990049 348px,#990043 360px,#99003d 372px,#990037 384px,#990032 396px,#99002e 408px,#990029 420px,#990025 432px,#990021 444px,#99001e 456px,#99001a 468px,#990017 480px,#990014 492px,#990011 504px,#99000f 516px,#99000c 528px,#99000a 540px,#990007 552px,#990005 564px,#990003 576px,#990001 588px,#990000 600px,#990000 604px)"></div><div style="top:416px;height:4px;background:linear-gradient(90deg,#002599 0px,#002599 12px,#002599 24px,#002599 36px,#002599 48px,#002599 60px,#002599 72px,#002599 84px,#002599 96px,#002599 108px,#002599 120px,#002599 132px,#002599 144px,#0b2399 156px,#192099 168px,#261e99 180px,#351b99 192px,#441899 204px,#541499 216px,#651199 228px,#770d99 240px,#8a0999 252px,#990595 264px,#990183 276px,#990077 288px,#99006c 300px,#990062 312px,#99005a 324px,#990052 336px,#99004b 348px,#990044 360px,#99003e 372px,#990039 384px,#990033 396px,#99002f 408px,#99002a 420px,#990026 432px,#990022 444px,#99001f 456px,#99001b 468px,#990018 480px,#990015 492px,#990012 504px,#99000f 516px,#99000d 528px,#99000a 540px,#990008 552px,#990006 564px,#990004 576px,#990002 588px,#990000 600px,#990000 604px)"></div><div style="top:420px;height:4px;background:linear-gradient(90deg,#002399 0px,#002399 12px,#002399 24px,#002399 36px,#002399 48px,#002399 60px,#002399 72px,#002399 84px,#002399 96px,#002399 108px,#002399 120px,#002399 132px,#002399 144px,#0d2099 156px,#1a1d99 168px,#281a99 180px,#361799 192px,#451499 204px,#551199 216px,#660d99 228px,#770a99 240px,#8a0699 252px,#990295 264px,#990086 276px,#990079 288px,#99006f 300px,#990065 312px,#99005c 324px,#990054 336px,#99004d 348px,#990046 360px,#990040 372px,#99003a 384px,#990035 396px,#990030 408px,#99002b 420px,#990027 432px,#990023 444px,#99001f 456px,#99001c 468px,#990019 480px,#990016 492px,#990013 504px,#990010 516px,#99000d 528px,#99000b 540px,#990009 552px,#990006 564px,#990004 576px,#990002 588px,#990000 600px,#990000 604px)"></div><div style="top:424px;height:4px;background:linear-gradient(90deg,#002099 0px,#002099 12px,#002099 24px,#002099 36px,#002099 48px,#002099 60px,#002099 72px,#002099 84px,#002099 96px,#002099 108px,#002099 120px,#002099 132px,#022099 144px,#0e1d99 156px,#1b1a99 168px,#291799 180px,#371499 192px,#461199 204px,#550e99 216px,#660a99 228px,#770699 240px,#890399 252px,#990097 264px,#990089 276px,#99007c 288px,#990071 300px,#990067 312px,#99005e 324px,#990056 336px,#99004e 348px,#990047 360px,#990041 372px,#99003b 384px,#990036 396px,#990031 408px,#99002c 420px,#990028 432px,#990024 444px,#990020 456px,#99001d 468px,#990019 480px,#990016 492px,#990013 504px,#990011 516px,#99000e 528px,#99000b 540px,#990009 552px,#990007 564px,#990005 576px,#990003 588px,#990001 600px,#990000 604px)"></div><div style="top:428px;height:4px;background:linear-gradient(90deg,#001d99 0px,#001d99 12px,#001d99 24px,#001d99 36px,#001d99 48px,#001d99 60px,#001d99 72px,#001d99 84px,#001d99 96px,#001d99 108px,#001d99 120px,#001d99 132px,#031d99 144px,#0f1a99 156px,#1c1799 168px,#2a1499 180px,#381199 192px,#470e99 204px,#560b99 216px,#660799 228px,#770399 240px,#880099 252px,#970099 264px,#99008c 276px,#99007f 288px,#990074 300px,#990069 312px,#990060 324px,#990058 336px,#990050 348px,#990049 360px,#990043 372px,#99003d 384px,#990037 396px,#990032 408px,#99002d 420px,#990029 432px,#990025 444px,#990021 456px,#99001e 468px,#99001a 480px,#990017 492px,#990014 504px,#990011 516px,#99000f 528px,#99000c 540px,#99000a 552px,#990007 564px,#990005 576px,#990003 588px,#990001 600px,#990001 604px)"></div><div style="top:432px;height:4px;background:linear-gradient(90deg,#001b99 0px,#001b99 12px,#001b99 24px,#001b99 36px,#001b99 48px,#001b99 60px,#001b99 72px,#001b99 84px,#001b99 96px,#001b99 108px,#001b99 120px,#001b99 132px,#041a99 144px,#111799 156px,#1d1499 168px,#2b1199 180px,#390e99 192px,#470b99 204px,#570799 216px,#670499 228px,#770099 240px,#850099 252px,#940099 264px,#990090 276px,#990082 288px,#990076 300px,#99006c 312px,#990062 324px,#99005a 336px,#990052 348px,#99004b 360px,#990044 372px,#99003e 384px,#990038 396px,#990033 408px,#99002f 420px,#99002a 432px,#990026 444px,#990022 456px,#99001e 468px,#99001b 480px,#990018 492px,#990015 504px,#990012 516px,#99000f 528px,#99000d 540px,#99000a 552px,#990008 564px,#990006 576px,#990004 588px,#990002 600px,#990001 604px)"></div><div style="top:436px;height:4px;background:linear-gradient(90deg,#001899 0px,#001899 12px,#001899 24px,#001899 36px,#001899 48px,#001899 60px,#001899 72px,#001899 84px,#001899 96px,#001899 108px,#001899 120px,#001899 132px,#061799 144px,#121499 156px,#1f1199 168px,#2c0e99 180px,#3a0b99 192px,#480899 204px,#570499 216px,#670199 228px,#740099 240px,#820099 252px,#900099 264px,#990093 276px,#990085 288px,#990079 300px,#99006e 312px,#990064 324px,#99005c 336px,#990054 348px,#99004c 360px,#990046 372px,#99003f 384px,#99003a 396px,#990035 408px,#990030 420px,#99002b 432px,#990027 444px,#990023 456px,#99001f 468px,#99001c 480px,#990019 492px,#990016 504px,#990013 516px,#990010 528px,#99000d 540px,#99000b 552px,#990008 564px,#990006 576px,#990004 588px,#990002 600px,#990001 604px)"></div><div style="top:440px;height:4px;background:linear-gradient(90deg,#001699 0px,#001699 12px,#001699 24px,#001699 36px,#001699 48px,#001699 60px,#001699 72px,#001699 84px,#001699 96px,#001699 108px,#001699 120px,#001699 132px,#071499 144px,#131199 156px,#200e99 168px,#2d0b99 180px,#3a0899 192px,#490599 204px,#580299 216px,#650099 228px,#710099 240px,#7e0099 252px,#8c0099 264px,#990097 276px,#990088 288px,#99007c 300px,#990071 312px,#990067 324px,#99005e 336px,#990055 348px,#99004e 360px,#990047 372px,#990041 384px,#99003b 396px,#990036 408px,#990031 420px,#99002c 432px,#990028 444px,#990024 456px,#990020 468px,#99001d 480px,#990019 492px,#990016 504px,#990013 516px,#990011 528px,#99000e 540px,#99000b 552px,#990009 564px,#990007 576px,#990005 588px,#990003 600px,#990002 604px)"></div><div style="top:444px;height:4px;background:linear-gradient(90deg,#001399 0px,#001399 12px,#001399 24px,#001399 36px,#001399 48px,#001399 60px,#001399 72px,#001399 84px,#001399 96px,#001399 108px,#001399 120px,#001399 132px,#091199 144px,#140f99 156px,#210c99 168px,#2e0999 180px,#3b0599 192px,#490299 204px,#570099 216px,#620099 228px,#6e0099 240px,#7b0099 252px,#890099 264px,#980099 276px,#99008c 288px,#99007f 300px,#990073 312px,#990069 324px,#990060 336px,#990057 348px,#990050 360px,#990049 372px,#990042 384px,#99003c 396px,#990037 408px,#990032 420px,#99002d 432px,#990029 444px,#990025 456px,#990021 468px,#99001e 480px,#99001a 492px,#990017 504px,#990014 516px,#990011 528px,#99000f 540px,#99000c 552px,#99000a 564px,#990007 576px,#990005 588px,#990003 600px,#990002 604px)"></div><div style="top:448px;height:4px;background:linear-gradient(90deg,#001199 0px,#001199 12px,#001199 24px,#001199 36px,#001199 48px,#001199 60px,#001199 72px,#001199 84px,#001199 96px,#001199 108px,#001199 120px,#001199 132px,#0a0f99 144px,#160c99 156px,#220999 168px,#2f0699 180px,#3c0399 192px,#490099 204px,#540099 216px,#5f0099 228px,#6b0099 240px,#780099 252px,#850099 264px,#940099 276px,#99008f 288px,#990082 300px,#990076 312px,#99006b 324px,#990062 336px,#990059 348px,#990052 360px,#99004a 372px,#990044 384px,#99003e 396px,#990038 408px,#990033 420px,#99002e 432px,#99002a 444px,#990026 456px,#990022 468px,#99001e 480px,#99001b 492px,#990018 504px,#990015 516px,#990012 528px,#99000f 540px,#99000d 552px,#99000a 564px,#990008 576px,#990006 588px,#990004 600px,#990003 604px)"></div><div style="top:452px;height:4px;background:linear-gradient(90deg,#000f99 0px,#000f99 12px,#000f99 24px,#000f99 36px,#000f99 48px,#000f99 60px,#000f99 72px,#000f99 84px,#000f99 96px,#000f99 108px,#000f99 120px,#000f99 132px,#0b0c99 144px,#170999 156px,#230699 168px,#300399 180px,#3d0099 192px,#470099 204px,#510099 216px,#5c0099 228px,#680099 240px,#750099 252px,#820099 264px,#900099 276px,#990093 288px,#990085 300px,#990079 312px,#99006e 324px,#990064 336px,#99005b 348px,#990053 360px,#99004c 372px,#990045 384px,#99003f 396px,#99003a 408px,#990034 420px,#990030 432px,#99002b 444px,#990027 456px,#990023 468px,#99001f 480px,#99001c 492px,#990018 504px,#990015 516px,#990013 528px,#990010 540px,#99000d 552px,#99000b 564px,#990008 576px,#990006 588px,#990004 600px,#990003 604px)"></div><div style="top:456px;height:4px;background:linear-gradient(90deg,#000d99 0px,#000d99 12px,#000d99 24px,#000d99 36px,#000d99 48px,#000d99 60px,#000d99 72px,#000d99 84px,#000d99 96px,#000d99 108px,#000d99 120px,#010c99 132px,#0c0a99 144px,#180799 156px,#240499 168px,#300199 180px,#3b0099 192px,#440099 204px,#4f0099 216px,#5a0099 228px,#650099 240px,#720099 252px,#7f0099 264px,#8d0099 276px,#990096 288px,#990088 300px,#99007c 312px,#990070 324px,#990066 336px,#99005d 348px,#990055 360px,#99004e 372px,#990047 384px,#990041 396px,#99003b 408px,#990036 420px,#990031 432px,#99002c 444px,#990028 456px,#990024 468px,#990020 480px,#99001d 492px,#990019 504px,#990016 516px,#990013 528px,#990010 540px,#99000e 552px,#99000b 564px,#990009 576px,#990007 588px,#990005 600px,#990004 604px)"></div><div style="top:460px;height:4px;background:linear-gradient(90deg,#000099 0px,#000099 12px,#000b99 24px,#000b99 36px,#000b99 48px,#000b99 60px,#000b99 72px,#000b99 84px,#000b99 96px,#000b99 108px,#000b99 120px,#020a99 132px,#0e0799 144px,#190499 156px,#250199 168px,#2f0099 180px,#380099 192px,#420099 204px,#4c0099 216px,#570099 228px,#620099 240px,#6e0099 252px,#7b0099 264px,#890099 276px,#980099 288px,#99008b 300px,#99007e 312px,#990073 324px,#990069 336px,#990060 348px,#990057 360px,#990050 372px,#990049 384px,#990042 396px,#99003c 408px,#990037 420px,#990032 432px,#99002d 444px,#990029 456px,#990025 468px,#990021 480px,#99001d 492px,#99001a 504px,#990017 516px,#990014 528px,#990011 540px,#99000e 552px,#99000c 564px,#99000a 576px,#990007 588px,#990005 600px,#990004 604px)"></div><div style="top:464px;height:4px;background:linear-gradient(90deg,#000099 0px,#000099 12px,#000099 24px,#000099 36px,#000999 48px,#000999 60px,#000999 72px,#000999 84px,#000999 96px,#000999 108px,#000999 120px,#040899 132px,#0f0599 144px,#1a0299 156px,#250099 168px,#2d0099 180px,#360099 192px,#400099 204px,#4a0099 216px,#540099 228px,#5f0099 240px,#6b0099 252px,#780099 264px,#860099 276px,#940099 288px,#99008f 300px,#990081 312px,#990076 324px,#99006b 336px,#990062 348px,#990059 360px,#990051 372px,#99004a 384px,#990044 396px,#99003e 408px,#990038 420px,#990033 432px,#99002e 444px,#99002a 456px,#990026 468px,#990022 480px,#99001e 492px,#99001b 504px,#990018 516px,#990015 528px,#990012 540px,#99000f 552px,#99000d 564px,#99000a 576px,#990008 588px,#990006 600px,#990005 604px)"></div><div style="top:468px;height:4px;background:linear-gradient(90deg,#000799 0px,#000799 12px,#000099 24px,#000099 36px,#000099 48px,#000799 60px,#000799 72px,#000799 84px,#000799 96px,#000799 108px,#000799 120px,#050599 132px,#100299 144px,#1b0099 156px,#230099 168px,#2b0099 180px,#340099 192px,#3d0099 204px,#470099 216px,#520099 228px,#5d0099 240px,#680099 252px,#750099 264px,#820099 276px,#910099 288px,#990092 300px,#990085 312px,#990078 324px,#99006e 336px,#990064 348px,#99005b 360px,#990053 372px,#99004c 384px,#990045 396px,#99003f 408px,#990039 420px,#990034 432px,#99002f 444px,#99002b 456px,#990027 468px,#990023 480px,#99001f 492px,#99001c 504px,#990018 516px,#990015 528px,#990012 540px,#990010 552px,#99000d 564px,#99000b 576px,#990008 588px,#990006 600px,#990005 604px)"></div><div style="top:472px;height:4px;background:linear-gradient(90deg,#000599 0px,#000599 12px,#000099 24px,#000099 36px,#000099 48px,#000099 60px,#000099 72px,#000599 84px,#000599 96px,#000599 108px,#000599 120px,#060399 132px,#110099 144px,#190099 156px,#210099 168px,#290099 180px,#320099 192px,#3b0099 204px,#450099 216px,#4f0099 228px,#5a0099 240px,#660099 252px,#720099 264px,#7f0099 276px,#8d0099 288px,#990096 300px,#990088 312px,#99007b 324px,#990070 336px,#990066 348px,#99005d 360px,#990055 372px,#99004e 384px,#990047 396px,#990041 408px,#99003b 420px,#990035 432px,#990031 444px,#99002c 456px,#990028 468px,#990024 480px,#990020 492px,#99001c 504px,#990019 516px,#990016 528px,#990013 540px,#990010 552px,#99000e 564px,#99000b 576px,#990009 588px,#990007 600px,#990006 604px)"></div><div style="top:476px;height:4px;background:linear-gradient(90deg,#000399 0px,#000399 12px,#000099 24px,#000099 36px,#000099 48px,#000099 60px,#000099 72px,#000099 84px,#000399 96px,#000399 108px,#000399 120px,#070199 132px,#0f0099 144px,#170099 156px,#1f0099 168px,#270099 180px,#2f0099 192px,#390099 204px,#420099 216px,#4c0099 228px,#570099 240px,#630099 252px,#6f0099 264px,#7c0099 276px,#8a0099 288px,#990099 300px,#99008b 312px,#99007e 324px,#990073 336px,#990068 348px,#99005f 360px,#990057 372px,#99004f 384px,#990048 396px,#990042 408px,#99003c 420px,#990037 432px,#990032 444px,#99002d 456px,#990029 468px,#990025 480px,#990021 492px,#99001d 504px,#99001a 516px,#990017 528px,#990014 540px,#990011 552px,#99000e 564px,#99000c 576px,#990009 588px,#990007 600px,#990006 604px)"></div><div style="top:480px;height:4px;background:linear-gradient(90deg,#000199 0px,#000199 12px,#000199 24px,#000199 36px,#000199 48px,#000099 60px,#000099 72px,#000099 84px,#000099 96px,#000099 108px,#000199 120px,#070099 132px,#0e0099 144px,#150099 156px,#1d0099 168px,#250099 180px,#2d0099 192px,#360099 204px,#400099 216px,#4a0099 228px,#550099 240px,#600099 252px,#6c0099 264px,#790099 276px,#860099 288px,#950099 300px,#99008e 312px,#990081 324px,#990075 336px,#99006b 348px,#990061 360px,#990059 372px,#990051 384px,#99004a 396px,#990044 408px,#99003e 420px,#990038 432px,#990033 444px,#99002e 456px,#99002a 468px,#990026 480px,#990022 492px,#99001e 504px,#99001b 516px,#990018 528px,#990015 540px,#990012 552px,#99000f 564px,#99000c 576px,#99000a 588px,#990008 600px,#990007 604px)"></div><div style="top:484px;height:4px;background:linear-gradient(90deg,#000099 0px,#000099 12px,#000099 24px,#000099 36px,#000099 48px,#000099 60px,#000099 72px,#000099 84px,#000099 96px,#000099 108px,#000099 120px,#050099 132px,#0c0099 144px,#130099 156px,#1b0099 168px,#230099 180px,#2b0099 192px,#340099 204px,#3d0099 216px,#470099 228px,#520099 240px,#5d0099 252px,#690099 264px,#750099 276px,#830099 288px,#910099 300px,#990092 312px,#990084 324px,#990078 336px,#99006d 348px,#990064 360px,#99005b 372px,#990053 384px,#99004c 396px,#990045 408px,#99003f 420px,#990039 432px,#990034 444px,#99002f 456px,#99002b 468px,#990027 480px,#990023 492px,#99001f 504px,#99001c 516px,#990018 528px,#990015 540px,#990012 552px,#990010 564px,#99000d 576px,#99000b 588px,#990008 600px,#990008 604px)"></div><div style="top:488px;height:4px;background:linear-gradient(90deg,#000099 0px,#000099 12px,#000099 24px,#000099 36px,#000099 48px,#000099 60px,#000099 72px,#000099 84px,#000099 96px,#000099 108px,#000099 120px,#030099 132px,#0a0099 144px,#110099 156px,#190099 168px,#210099 180px,#290099 192px,#320099 204px,#3b0099 216px,#450099 228px,#4f0099 240px,#5a0099 252px,#660099 264px,#720099 276px,#800099 288px,#8e0099 300px,#990095 312px,#990087 324px,#99007b 336px,#990070 348px,#990066 360px,#99005d 372px,#990055 384px,#99004d 396px,#990047 408px,#990040 420px,#99003b 432px,#990035 444px,#990030 456px,#99002c 468px,#990028 480px,#990024 492px,#990020 504px,#99001c 516px,#990019 528px,#990016 540px,#990013 552px,#990010 564px,#99000e 576px,#99000b 588px,#990009 600px,#990008 604px)"></div><div style="top:492px;height:4px;background:linear-gradient(90deg,#000099 0px,#000099 12px,#000099 24px,#000099 36px,#000099 48px,#000099 60px,#000099 72px,#000099 84px,#000099 96px,#000099 108px,#000099 120px,#020099 132px,#090099 144px,#100099 156px,#170099 168px,#1f0099 180px,#270099 192px,#300099 204px,#390099 216px,#430099 228px,#4d0099 240px,#580099 252px,#630099 264px,#6f0099 276px,#7c0099 288px,#8a0099 300px,#990099 312px,#99008b 324px,#99007e 336px,#990072 348px,#990068 360px,#99005f 372px,#990057 384px,#99004f 396px,#990048 408px,#990042 420px,#99003c 432px,#990037 444px,#990032 456px,#99002d 468px,#990029 480px,#990025 492px,#990021 504px,#99001d 516px,#99001a 528px,#990017 540px,#990014 552px,#990011 564px,#99000e 576px,#99000c 588px,#990009 600px,#990009 604px)"></div><div style="top:496px;height:4px;background:linear-gradient(90deg,#000099 0px,#000099 12px,#000099 24px,#000099 36px,#000099 48px,#000099 60px,#000099 72px,#000099 84px,#000099 96px,#000099 108px,#000099 120px,#000099 132px,#070099 144px,#0e0099 156px,#150099 168px,#1d0099 180px,#250099 192px,#2e0099 204px,#370099 216px,#400099 228px,#4a0099 240px,#550099 252px,#600099 264px,#6c0099 276px,#790099 288px,#870099 300px,#950099 312px,#99008e 324px,#990081 336px,#990075 348px,#99006b 360px,#990061 372px,#990059 384px,#990051 396px,#99004a 408px,#990043 420px,#99003d 432px,#990038 444px,#990033 456px,#99002e 468px,#99002a 480px,#990025 492px,#990022 504px,#99001e 516px,#99001b 528px,#990017 540px,#990014 552px,#990012 564px,#99000f 576px,#99000c 588px,#99000a 600px,#990009 604px)"></div><div style="top:500px;height:4px;background:linear-gradient(90deg,#000099 0px,#000099 12px,#000099 24px,#000099 36px,#000099 48px,#000099 60px,#000099 72px,#000099 84px,#000099 96px,#000099 108px,#000099 120px,#000099 132px,#050099 144px,#0c0099 156px,#130099 168px,#1b0099 180px,#230099 192px,#2b0099 204px,#340099 216px,#3e0099 228px,#480099 240px,#520099 252px,#5d0099 264px,#690099 276px,#760099 288px,#830099 300px,#920099 312px,#990091 324px,#990084 336px,#990078 348px,#99006d 360px,#990063 372px,#99005b 384px,#990053 396px,#99004b 408px,#990045 420px,#99003f 432px,#990039 444px,#990034 456px,#99002f 468px,#99002b 480px,#990026 492px,#990023 504px,#99001f 516px,#99001b 528px,#990018 540px,#990015 552px,#990012 564px,#990010 576px,#99000d 588px,#99000b 600px,#99000a 604px)"></div><div style="top:504px;height:4px;background:linear-gradient(90deg,#000099 0px,#000099 12px,#000099 24px,#000099 36px,#000099 48px,#000099 60px,#000099 72px,#000099 84px,#000099 96px,#000099 108px,#000099 120px,#000099 132px,#040099 144px,#0a0099 156px,#120099 168px,#190099 180px,#210099 192px,#290099 204px,#320099 216px,#3b0099 228px,#450099 240px,#500099 252px,#5b0099 264px,#660099 276px,#730099 288px,#800099 300px,#8e0099 312px,#990095 324px,#990087 336px,#99007b 348px,#990070 360px,#990066 372px,#99005d 384px,#990055 396px,#99004d 408px,#990046 420px,#990040 432px,#99003a 444px,#990035 456px,#990030 468px,#99002c 480px,#990027 492px,#990023 504px,#990020 516px,#99001c 528px,#990019 540px,#990016 552px,#990013 564px,#990010 576px,#99000e 588px,#99000b 600px,#99000a 604px)"></div><div style="top:508px;height:4px;background:linear-gradient(90deg,#000099 0px,#000099 12px,#000099 24px,#000099 36px,#000099 48px,#000099 60px,#000099 72px,#000099 84px,#000099 96px,#000099 108px,#000099 120px,#000099 132px,#020099 144px,#090099 156px,#100099 168px,#170099 180px,#1f0099 192px,#270099 204px,#300099 216px,#390099 228px,#430099 240px,#4d0099 252px,#580099 264px,#630099 276px,#700099 288px,#7d0099 300px,#8b0099 312px,#990099 324px,#99008a 336px,#99007d 348px,#990072 360px,#990068 372px,#99005f 384px,#990056 396px,#99004f 408px,#990048 420px,#990042 432px,#99003c 444px,#990036 456px,#990031 468px,#99002d 480px,#990028 492px,#990024 504px,#990021 516px,#99001d 528px,#99001a 540px,#990017 552px,#990014 564px,#990011 576px,#99000e 588px,#99000c 600px,#99000b 604px)"></div><div style="top:512px;height:4px;background:linear-gradient(90deg,#000099 0px,#000099 12px,#000099 24px,#000099 36px,#000099 48px,#000099 60px,#000099 72px,#000099 84px,#000099 96px,#000099 108px,#000099 120px,#000099 132px,#000099 144px,#070099 156px,#0e0099 168px,#150099 180px,#1d0099 192px,#250099 204px,#2e0099 216px,#370099 228px,#400099 240px,#4b0099 252px,#550099 264px,#610099 276px,#6d0099 288px,#790099 300px,#870099 312px,#960099 324px,#99008d 336px,#990080 348px,#990075 360px,#99006a 372px,#990061 384px,#990058 396px,#990051 408px,#99004a 420px,#990043 432px,#99003d 444px,#990038 456px,#990033 468px,#99002e 480px,#990029 492px,#990025 504px,#990022 516px,#99001e 528px,#99001b 540px,#990017 552px,#990014 564px,#990012 576px,#99000f 588px,#99000c 600px,#99000b 604px)"></div><div style="top:516px;height:4px;background:linear-gradient(90deg,#000099 0px,#000099 12px,#000099 24px,#000099 36px,#000099 48px,#000099 60px,#000099 72px,#000099 84px,#000099 96px,#000099 108px,#000099 120px,#000099 132px,#000099 144px,#050099 156px,#0c0099 168px,#140099 180px,#1b0099 192px,#230099 204px,#2c0099 216px,#350099 228px,#3e0099 240px,#480099 252px,#530099 264px,#5e0099 276px,#6a0099 288px,#760099 300px,#840099 312px,#920099 324px,#990091 336px,#990083 348px,#990077 360px,#99006d 372px,#990063 384px,#99005a 396px,#990052 408px,#99004b 420px,#990045 432px,#99003f 444px,#990039 456px,#990034 468px,#99002f 480px,#99002b 492px,#990026 504px,#990022 516px,#99001f 528px,#99001b 540px,#990018 552px,#990015 564px,#990012 576px,#99000f 588px,#99000d 600px,#99000c 604px)"></div></div><svg class="a" style="left:0;top:0" width="1920" height="1040"><path d="M1295.1 667.9 L1295.1 667.9 L1295.1 667.9 L1295.0 667.9 L1295.0 667.9 L1294.9 667.9 L1294.9 667.9 L1294.8 667.9 L1294.8 668.0 L1294.7 668.0 L1294.6 668.0 L1294.6 668.0 L1294.5 668.0 L1294.4 668.0 L1294.3 668.0 L1294.2 668.0 L1294.1 668.0 L1294.0 668.0 L1293.9 668.0 L1293.7 668.0 L1293.6 668.0 L1293.5 668.0 L1293.3 668.0 L1293.1 667.9 L1292.9 667.8 L1292.6 667.7 L1292.3 667.6 L1292.0 667.4 L1291.7 667.2 L1291.3 667.0 L1290.8 666.7 L1290.3 666.4 L1289.8 666.0 L1289.3 665.7 L1288.6 665.2 L1287.9 664.8 L1287.1 664.2 L1286.3 663.7 L1285.4 663.1 L1284.4 662.4 L1283.3 661.7 L1282.1 660.9 L1280.8 660.0 L1279.2 658.9 L1277.5 657.7 L1275.6 656.4 L1273.7 655.0 L1271.9 653.7 L1270.3 652.5 L1269.0 651.4 L1267.8 650.5 L1266.8 649.6 L1265.7 648.6 L1264.6 647.5 L1263.4 646.2 L1262.0 644.7 L1260.5 643.1 L1259.0 641.3 L1257.4 639.4 L1255.8 637.3 L1254.0 635.0 L1252.2 632.5 L1250.4 629.9 L1248.4 627.1 L1246.4 624.0 L1244.3 620.6 L1242.1 616.9 L1239.8 612.9 L1237.4 608.7 L1235.0 604.2 L1232.4 599.3 L1229.8 594.1 L1227.0 588.4 L1224.2 582.3 L1221.1 575.9 L1218.0 569.1 L1214.8 561.9 L1211.6 554.2 L1208.5 546.1 L1205.3 537.4 L1202.1 528.2 L1198.9 518.6 L1195.6 508.6 L1192.4 498.2 L1189.3 487.4 L1186.2 476.1 L1183.0 464.2 L1179.9 452.0 L1176.8 439.4 L1174.0 426.8 L1171.3 414.1 L1168.8 401.3 L1166.4 388.2 L1164.1 374.9 L1162.0 361.7 L1160.2 348.6 L1158.7 335.8 L1157.5 323.3 L1156.4 310.8 L1155.6 298.4 L1155.1 286.3 L1155.0 274.6 L1155.2 263.4 L1155.7 252.5 L1156.6 241.8 L1157.8 231.6 L1159.3 221.8 L1161.2 212.5 L1163.4 204.0 L1166.0 196.1 L1169.0 188.7 L1172.4 181.9 L1176.0 175.7 L1179.9 170.2 L1183.9 165.5 L1188.3 161.6 L1192.9 158.5 L1197.7 156.0 L1202.8 154.2 L1207.9 152.9 L1213.1 152.0 L1218.3 151.6 L1223.7 151.9 L1229.2 152.7 L1234.7 153.8 L1240.3 155.2 L1245.8 156.7 L1251.4 158.3 L1257.0 160.2 L1262.6 162.4 L1268.2 164.7 L1273.7 167.0 L1279.2 169.4 L1284.5 171.7 L1289.8 174.1 L1295.1 176.6 L1300.3 179.2 L1305.4 181.8 L1310.5 184.4 L1315.7 187.1 L1320.7 189.9 L1325.8 192.7 L1330.8 195.6 L1335.8 198.5 L1340.7 201.4 L1345.7 204.4 L1350.7 207.5 L1355.7 210.6 L1360.6 213.7 L1365.5 216.9 L1370.5 220.1 L1375.4 223.3 L1380.3 226.6 L1385.2 229.9 L1390.1 233.3 L1395.0 236.6 L1399.9 240.0 L1404.8 243.4 L1409.7 246.9 L1414.6 250.4 L1419.5 253.8 L1424.4 257.4 L1429.3 260.9 L1434.2 264.4 L1439.1 268.0 L1444.0 271.5 L1448.9 275.1 L1453.8 278.7 L1458.7 282.3 L1463.6 285.9 L1468.5 289.5 L1473.4 293.1 L1478.2 296.7 L1483.1 300.3 L1488.0 304.0 L1492.8 307.6 L1497.7 311.2 L1502.5 314.8 L1507.4 318.5 L1512.2 322.1 L1517.0 325.7 L1521.8 329.3 L1526.6 332.9 L1531.4 336.5 L1536.1 340.1 L1540.8 343.6 L1545.5 347.2 L1550.2 350.7 L1554.9 354.2 L1559.5 357.7 L1564.1 361.2 L1568.7 364.7 L1573.3 368.1 L1577.8 371.5 L1582.3 374.9 L1586.7 378.2 L1591.1 381.6 L1595.5 384.9 L1599.8 388.1 L1604.1 391.3 L1608.3 394.5 L1612.5 397.7 L1616.7 400.8 L1620.8 403.9 L1624.8 406.9 L1628.7 409.9 L1632.7 412.9 L1636.5 415.8 L1640.3 418.7 L1644.0 421.5 L1647.6 424.2 L1651.1 426.8 L1654.5 429.4 L1657.9 431.9 L1661.1 434.4 L1664.3 436.8 L1667.4 439.1 L1670.5 441.4 L1673.5 443.7 L1676.5 446.0 L1679.4 448.1 L1682.1 450.2 L1684.8 452.3 L1687.5 454.2 L1690.0 456.1 L1692.4 457.9 L1694.8 459.7 L1697.0 461.4 L1699.3 463.1 L1701.4 464.7 L1703.5 466.2 L1705.5 467.7 L1707.4 469.2 L1709.2 470.6 L1711.0 472.0 L1712.8 473.3 L1714.4 474.5 L1716.0 475.7 L1717.5 476.9 L1719.0 478.0 L1720.4 479.1 L1721.8 480.1 L1723.1 481.1 L1724.4 482.0 L1725.6 482.9 L1726.8 483.8 L1727.9 484.7 L1729.0 485.5 L1730.1 486.3 L1731.1 487.1 L1732.0 487.8 L1733.0 488.5 L1733.9 489.2 L1734.8 489.9 L1735.7 490.6 L1736.5 491.2 L1737.4 491.8 L1738.2 492.4 L1738.9 493.0 L1739.7 493.6 L1740.4 494.1 L1741.1 494.6 L1741.8 495.2 L1742.4 495.6 L1743.0 496.1 L1743.6 496.6 L1744.2 497.0 L1744.8 497.4 L1745.3 497.8 L1745.8 498.2 L1746.3 498.6 L1746.8 498.9 L1747.2 499.2 L1747.6 499.4 L1748.0 499.7 L1748.4 500.0 L1748.8 500.4 L1749.2 501.0 L1749.7 501.7 L1750.2 502.5 L1750.7 503.3 L1751.0 504.0 L1751.3 504.4Z" fill="none" stroke="rgba(0,0,0,0.55)" stroke-width="1.2"/></svg><div class="a rows" style="left:1274px;top:296px;width:406px;height:339px;clip-path:polygon(404.08px 169.57px,124.60px 1.50px,1.30px 337.65px)"><div style="top:0px;height:3px;background:linear-gradient(90deg,#00ff00 0px,#00ff00 10px,#00ff00 20px,#00ff00 30px,#00ff00 40px,#00ff00 50px,#00ff00 60px,#00ff00 70px,#00ff00 80px,#00ff00 90px,#00ff00 100px,#00ff00 110px,#00ff00 120px,#06ff00 130px,#11ff00 140px,#1cff00 150px,#28ff00 160px,#34ff00 170px,#41ff00 180px,#4fff00 190px,#5eff00 200px,#6dff00 210px,#7dff00 220px,#8eff00 230px,#a0ff00 240px,#b3ff00 250px,#c7ff00 260px,#ddff00 270px,#f4ff00 280px,#fff200 290px,#ffdc00 300px,#ffc900 310px,#ffb800 320px,#ffa800 330px,#ff9a00 340px,#ff8d00 350px,#ff8100 360px,#ff7600 370px,#ff6c00 380px,#ff6300 390px,#ff5a00 400px,#ff5500 406px)"></div><div style="top:3px;height:3px;background:linear-gradient(90deg,#00ff02 0px,#00ff02 10px,#00ff02 20px,#00ff02 30px,#00ff02 40px,#00ff02 50px,#00ff02 60px,#00ff02 70px,#00ff02 80px,#00ff02 90px,#00ff02 100px,#00ff02 110px,#00ff02 120px,#09ff00 130px,#14ff00 140px,#20ff00 150px,#2cff00 160px,#38ff00 170px,#46ff00 180px,#54ff00 190px,#62ff00 200px,#72ff00 210px,#82ff00 220px,#93ff00 230px,#a6ff00 240px,#b9ff00 250px,#ceff00 260px,#e4ff00 270px,#fcff00 280px,#ffeb00 290px,#ffd600 300px,#ffc300 310px,#ffb300 320px,#ffa300 330px,#ff9600 340px,#ff8900 350px,#ff7e00 360px,#ff7300 370px,#ff6900 380px,#ff6000 390px,#ff5800 400px,#ff5300 406px)"></div><div style="top:6px;height:3px;background:linear-gradient(90deg,#00ff05 0px,#00ff05 10px,#00ff05 20px,#00ff05 30px,#00ff05 40px,#00ff05 50px,#00ff05 60px,#00ff05 70px,#00ff05 80px,#00ff05 90px,#00ff05 100px,#00ff05 110px,#00ff05 120px,#0bff02 130px,#18ff00 140px,#23ff00 150px,#30ff00 160px,#3cff00 170px,#4aff00 180px,#58ff00 190px,#67ff00 200px,#77ff00 210px,#87ff00 220px,#99ff00 230px,#acff00 240px,#c0ff00 250px,#d5ff00 260px,#ebff00 270px,#fffb00 280px,#ffe400 290px,#ffd000 300px,#ffbe00 310px,#ffae00 320px,#ff9f00 330px,#ff9200 340px,#ff8500 350px,#ff7a00 360px,#ff7000 370px,#ff6600 380px,#ff5d00 390px,#ff5500 400px,#ff5100 406px)"></div><div style="top:9px;height:3px;background:linear-gradient(90deg,#00ff07 0px,#00ff07 10px,#00ff07 20px,#00ff07 30px,#00ff07 40px,#00ff07 50px,#00ff07 60px,#00ff07 70px,#00ff07 80px,#00ff07 90px,#00ff07 100px,#00ff07 110px,#00ff07 120px,#0dff04 130px,#1bff00 140px,#27ff00 150px,#33ff00 160px,#41ff00 170px,#4eff00 180px,#5dff00 190px,#6cff00 200px,#7cff00 210px,#8dff00 220px,#9fff00 230px,#b2ff00 240px,#c6ff00 250px,#dcff00 260px,#f3ff00 270px,#fff300 280px,#ffde00 290px,#ffca00 300px,#ffb900 310px,#ffa900 320px,#ff9b00 330px,#ff8e00 340px,#ff8200 350px,#ff7700 360px,#ff6d00 370px,#ff6300 380px,#ff5b00 390px,#ff5300 400px,#ff4e00 406px)"></div><div style="top:12px;height:3px;background:linear-gradient(90deg,#00ff09 0px,#00ff09 10px,#00ff09 20px,#00ff09 30px,#00ff09 40px,#00ff09 50px,#00ff09 60px,#00ff09 70px,#00ff09 80px,#00ff09 90px,#00ff09 100px,#00ff09 110px,#00ff09 120px,#0eff06 130px,#1dff02 140px,#2bff00 150px,#38ff00 160px,#45ff00 170px,#53ff00 180px,#61ff00 190px,#71ff00 200px,#81ff00 210px,#92ff00 220px,#a5ff00 230px,#b8ff00 240px,#cdff00 250px,#e3ff00 260px,#faff00 270px,#ffec00 280px,#ffd700 290px,#ffc400 300px,#ffb400 310px,#ffa400 320px,#ff9600 330px,#ff8a00 340px,#ff7e00 350px,#ff7400 360px,#ff6a00 370px,#ff6100 380px,#ff5800 390px,#ff5000 400px,#ff4c00 406px)"></div><div style="top:15px;height:3px;background:linear-gradient(90deg,#00ff0c 0px,#00ff0c 10px,#00ff0c 20px,#00ff0c 30px,#00ff0c 40px,#00ff0c 50px,#00ff0c 60px,#00ff0c 70px,#00ff0c 80px,#00ff0c 90px,#00ff0c 100px,#00ff0c 110px,#01ff0b 120px,#10ff08 130px,#1fff04 140px,#2fff00 150px,#3cff00 160px,#49ff00 170px,#57ff00 180px,#66ff00 190px,#76ff00 200px,#87ff00 210px,#98ff00 220px,#abff00 230px,#bfff00 240px,#d4ff00 250px,#eaff00 260px,#fffc00 270px,#ffe500 280px,#ffd100 290px,#ffbf00 300px,#ffaf00 310px,#ffa000 320px,#ff9200 330px,#ff8600 340px,#ff7b00 350px,#ff7000 360px,#ff6700 370px,#ff5e00 380px,#ff5600 390px,#ff4e00 400px,#ff4a00 406px)"></div><div style="top:18px;height:3px;background:linear-gradient(90deg,#00ff0e 0px,#00ff0e 10px,#00ff0e 20px,#00ff0e 30px,#00ff0e 40px,#00ff0e 50px,#00ff0e 60px,#00ff0e 70px,#00ff0e 80px,#00ff0e 90px,#00ff0e 100px,#00ff0e 110px,#03ff0e 120px,#12ff0a 130px,#21ff06 140px,#31ff02 150px,#40ff00 160px,#4dff00 170px,#5cff00 180px,#6bff00 190px,#7bff00 200px,#8cff00 210px,#9eff00 220px,#b1ff00 230px,#c5ff00 240px,#daff00 250px,#f1ff00 260px,#fff500 270px,#ffdf00 280px,#ffcb00 290px,#ffba00 300px,#ffaa00 310px,#ff9b00 320px,#ff8e00 330px,#ff8200 340px,#ff7700 350px,#ff6d00 360px,#ff6400 370px,#ff5b00 380px,#ff5300 390px,#ff4c00 400px,#ff4700 406px)"></div><div style="top:21px;height:3px;background:linear-gradient(90deg,#00ff11 0px,#00ff11 10px,#00ff11 20px,#00ff11 30px,#00ff11 40px,#00ff11 50px,#00ff11 60px,#00ff11 70px,#00ff11 80px,#00ff11 90px,#00ff11 100px,#00ff11 110px,#05ff10 120px,#14ff0c 130px,#23ff08 140px,#33ff04 150px,#44ff00 160px,#52ff00 170px,#61ff00 180px,#70ff00 190px,#80ff00 200px,#91ff00 210px,#a4ff00 220px,#b7ff00 230px,#ccff00 240px,#e2ff00 250px,#f9ff00 260px,#ffed00 270px,#ffd800 280px,#ffc500 290px,#ffb400 300px,#ffa500 310px,#ff9700 320px,#ff8a00 330px,#ff7f00 340px,#ff7400 350px,#ff6a00 360px,#ff6100 370px,#ff5900 380px,#ff5100 390px,#ff4900 400px,#ff4500 406px)"></div><div style="top:24px;height:3px;background:linear-gradient(90deg,#00ff13 0px,#00ff13 10px,#00ff13 20px,#00ff13 30px,#00ff13 40px,#00ff13 50px,#00ff13 60px,#00ff13 70px,#00ff13 80px,#00ff13 90px,#00ff13 100px,#00ff13 110px,#06ff12 120px,#16ff0e 130px,#25ff0a 140px,#36ff06 150px,#47ff02 160px,#56ff00 170px,#65ff00 180px,#75ff00 190px,#86ff00 200px,#97ff00 210px,#aaff00 220px,#bdff00 230px,#d2ff00 240px,#e9ff00 250px,#fffd00 260px,#ffe700 270px,#ffd200 280px,#ffc000 290px,#ffaf00 300px,#ffa100 310px,#ff9300 320px,#ff8700 330px,#ff7b00 340px,#ff7100 350px,#ff6700 360px,#ff5e00 370px,#ff5600 380px,#ff4e00 390px,#ff4700 400px,#ff4300 406px)"></div><div style="top:27px;height:3px;background:linear-gradient(90deg,#00ff16 0px,#00ff16 10px,#00ff16 20px,#00ff16 30px,#00ff16 40px,#00ff16 50px,#00ff16 60px,#00ff16 70px,#00ff16 80px,#00ff16 90px,#00ff16 100px,#00ff16 110px,#08ff14 120px,#18ff10 130px,#28ff0c 140px,#38ff08 150px,#49ff04 160px,#5bff00 170px,#6aff00 180px,#7aff00 190px,#8bff00 200px,#9dff00 210px,#b0ff00 220px,#c4ff00 230px,#d9ff00 240px,#f0ff00 250px,#fff600 260px,#ffe000 270px,#ffcc00 280px,#ffbb00 290px,#ffab00 300px,#ff9c00 310px,#ff8f00 320px,#ff8300 330px,#ff7800 340px,#ff6e00 350px,#ff6400 360px,#ff5c00 370px,#ff5400 380px,#ff4c00 390px,#ff4500 400px,#ff4100 406px)"></div><div style="top:30px;height:3px;background:linear-gradient(90deg,#00ff19 0px,#00ff19 10px,#00ff19 20px,#00ff19 30px,#00ff19 40px,#00ff19 50px,#00ff19 60px,#00ff19 70px,#00ff19 80px,#00ff19 90px,#00ff19 100px,#00ff19 110px,#0aff16 120px,#1aff13 130px,#2aff0f 140px,#3bff0b 150px,#4cff06 160px,#5eff02 170px,#6fff00 180px,#7fff00 190px,#90ff00 200px,#a3ff00 210px,#b6ff00 220px,#caff00 230px,#e0ff00 240px,#f8ff00 250px,#ffef00 260px,#ffd900 270px,#ffc600 280px,#ffb500 290px,#ffa600 300px,#ff9800 310px,#ff8b00 320px,#ff7f00 330px,#ff7500 340px,#ff6b00 350px,#ff6200 360px,#ff5900 370px,#ff5100 380px,#ff4a00 390px,#ff4300 400px,#ff3f00 406px)"></div><div style="top:33px;height:3px;background:linear-gradient(90deg,#00ff1c 0px,#00ff1c 10px,#00ff1c 20px,#00ff1c 30px,#00ff1c 40px,#00ff1c 50px,#00ff1c 60px,#00ff1c 70px,#00ff1c 80px,#00ff1c 90px,#00ff1c 100px,#00ff1c 110px,#0cff19 120px,#1cff15 130px,#2cff11 140px,#3dff0d 150px,#4fff09 160px,#61ff04 170px,#74ff00 180px,#85ff00 190px,#96ff00 200px,#a9ff00 210px,#bcff00 220px,#d1ff00 230px,#e7ff00 240px,#ffff00 250px,#ffe800 260px,#ffd300 270px,#ffc100 280px,#ffb000 290px,#ffa100 300px,#ff9400 310px,#ff8700 320px,#ff7c00 330px,#ff7100 340px,#ff6800 350px,#ff5f00 360px,#ff5700 370px,#ff4f00 380px,#ff4800 390px,#ff4100 400px,#ff3d00 406px)"></div><div style="top:36px;height:3px;background:linear-gradient(90deg,#00ff1e 0px,#00ff1e 10px,#00ff1e 20px,#00ff1e 30px,#00ff1e 40px,#00ff1e 50px,#00ff1e 60px,#00ff1e 70px,#00ff1e 80px,#00ff1e 90px,#00ff1e 100px,#00ff1e 110px,#0eff1b 120px,#1eff17 130px,#2eff13 140px,#40ff0f 150px,#52ff0b 160px,#64ff07 170px,#78ff02 180px,#8aff00 190px,#9cff00 200px,#afff00 210px,#c3ff00 220px,#d8ff00 230px,#efff00 240px,#fff700 250px,#ffe100 260px,#ffcd00 270px,#ffbb00 280px,#ffab00 290px,#ff9d00 300px,#ff9000 310px,#ff8400 320px,#ff7900 330px,#ff6e00 340px,#ff6500 350px,#ff5c00 360px,#ff5400 370px,#ff4c00 380px,#ff4500 390px,#ff3f00 400px,#ff3b00 406px)"></div><div style="top:39px;height:3px;background:linear-gradient(90deg,#00ff21 0px,#00ff21 10px,#00ff21 20px,#00ff21 30px,#00ff21 40px,#00ff21 50px,#00ff21 60px,#00ff21 70px,#00ff21 80px,#00ff21 90px,#00ff21 100px,#00ff21 110px,#0fff1e 120px,#20ff1a 130px,#31ff16 140px,#42ff12 150px,#55ff0d 160px,#68ff09 170px,#7bff04 180px,#8fff00 190px,#a2ff00 200px,#b5ff00 210px,#c9ff00 220px,#dfff00 230px,#f6ff00 240px,#fff000 250px,#ffdb00 260px,#ffc700 270px,#ffb600 280px,#ffa700 290px,#ff9900 300px,#ff8c00 310px,#ff8000 320px,#ff7500 330px,#ff6b00 340px,#ff6200 350px,#ff5a00 360px,#ff5200 370px,#ff4a00 380px,#ff4300 390px,#ff3d00 400px,#ff3900 406px)"></div><div style="top:42px;height:3px;background:linear-gradient(90deg,#00ff24 0px,#00ff24 10px,#00ff24 20px,#00ff24 30px,#00ff24 40px,#00ff24 50px,#00ff24 60px,#00ff24 70px,#00ff24 80px,#00ff24 90px,#00ff24 100px,#01ff24 110px,#11ff20 120px,#22ff1c 130px,#33ff18 140px,#45ff14 150px,#58ff10 160px,#6bff0c 170px,#7fff07 180px,#94ff02 190px,#a8ff00 200px,#bbff00 210px,#d0ff00 220px,#e6ff00 230px,#feff00 240px,#ffe900 250px,#ffd400 260px,#ffc200 270px,#ffb100 280px,#ffa200 290px,#ff9400 300px,#ff8800 310px,#ff7d00 320px,#ff7200 330px,#ff6800 340px,#ff5f00 350px,#ff5700 360px,#ff4f00 370px,#ff4800 380px,#ff4100 390px,#ff3b00 400px,#ff3700 406px)"></div><div style="top:45px;height:3px;background:linear-gradient(90deg,#00ff27 0px,#00ff27 10px,#00ff27 20px,#00ff27 30px,#00ff27 40px,#00ff27 50px,#00ff27 60px,#00ff27 70px,#00ff27 80px,#00ff27 90px,#00ff27 100px,#03ff26 110px,#13ff23 120px,#24ff1f 130px,#36ff1b 140px,#48ff17 150px,#5bff12 160px,#6eff0e 170px,#83ff09 180px,#98ff05 190px,#aeff00 200px,#c2ff00 210px,#d7ff00 220px,#edff00 230px,#fff900 240px,#ffe200 250px,#ffce00 260px,#ffbc00 270px,#ffac00 280px,#ff9e00 290px,#ff9000 300px,#ff8400 310px,#ff7900 320px,#ff6f00 330px,#ff6500 340px,#ff5d00 350px,#ff5400 360px,#ff4d00 370px,#ff4600 380px,#ff3f00 390px,#ff3900 400px,#ff3500 406px)"></div><div style="top:48px;height:3px;background:linear-gradient(90deg,#00ff2a 0px,#00ff2a 10px,#00ff2a 20px,#00ff2a 30px,#00ff2a 40px,#00ff2a 50px,#00ff2a 60px,#00ff2a 70px,#00ff2a 80px,#00ff2a 90px,#00ff2a 100px,#05ff29 110px,#15ff25 120px,#27ff21 130px,#38ff1d 140px,#4bff19 150px,#5eff15 160px,#72ff11 170px,#87ff0c 180px,#9cff07 190px,#b2ff02 200px,#c8ff00 210px,#deff00 220px,#f5ff00 230px,#fff100 240px,#ffdc00 250px,#ffc800 260px,#ffb700 270px,#ffa800 280px,#ff9900 290px,#ff8c00 300px,#ff8100 310px,#ff7600 320px,#ff6c00 330px,#ff6300 340px,#ff5a00 350px,#ff5200 360px,#ff4b00 370px,#ff4400 380px,#ff3d00 390px,#ff3700 400px,#ff3400 406px)"></div><div style="top:51px;height:3px;background:linear-gradient(90deg,#00ff2d 0px,#00ff2d 10px,#00ff2d 20px,#00ff2d 30px,#00ff2d 40px,#00ff2d 50px,#00ff2d 60px,#00ff2d 70px,#00ff2d 80px,#00ff2d 90px,#00ff2d 100px,#07ff2c 110px,#18ff28 120px,#29ff24 130px,#3bff20 140px,#4eff1c 150px,#61ff18 160px,#75ff13 170px,#8bff0f 180px,#a0ff0a 190px,#b7ff05 200px,#cfff00 210px,#e5ff00 220px,#fcff00 230px,#ffea00 240px,#ffd500 250px,#ffc300 260px,#ffb200 270px,#ffa300 280px,#ff9500 290px,#ff8900 300px,#ff7d00 310px,#ff7300 320px,#ff6900 330px,#ff6000 340px,#ff5700 350px,#ff5000 360px,#ff4800 370px,#ff4200 380px,#ff3b00 390px,#ff3500 400px,#ff3200 406px)"></div><div style="top:54px;height:3px;background:linear-gradient(90deg,#00ff30 0px,#00ff30 10px,#00ff30 20px,#00ff30 30px,#00ff30 40px,#00ff30 50px,#00ff30 60px,#00ff30 70px,#00ff30 80px,#00ff30 90px,#00ff30 100px,#09ff2e 110px,#1aff2b 120px,#2bff27 130px,#3eff23 140px,#51ff1f 150px,#65ff1b 160px,#79ff16 170px,#8fff11 180px,#a5ff0d 190px,#bcff08 200px,#d4ff02 210px,#ecff00 220px,#fffa00 230px,#ffe300 240px,#ffcf00 250px,#ffbd00 260px,#ffad00 270px,#ff9e00 280px,#ff9100 290px,#ff8500 300px,#ff7a00 310px,#ff6f00 320px,#ff6600 330px,#ff5d00 340px,#ff5500 350px,#ff4d00 360px,#ff4600 370px,#ff4000 380px,#ff3900 390px,#ff3300 400px,#ff3000 406px)"></div><div style="top:57px;height:3px;background:linear-gradient(90deg,#00ff34 0px,#00ff34 10px,#00ff34 20px,#00ff34 30px,#00ff34 40px,#00ff34 50px,#00ff34 60px,#00ff34 70px,#00ff34 80px,#00ff34 90px,#00ff34 100px,#0bff31 110px,#1cff2e 120px,#2eff2a 130px,#41ff26 140px,#54ff22 150px,#68ff1d 160px,#7dff19 170px,#93ff14 180px,#aaff0f 190px,#c1ff0a 200px,#daff05 210px,#f3ff00 220px,#fff300 230px,#ffdd00 240px,#ffc900 250px,#ffb800 260px,#ffa800 270px,#ff9a00 280px,#ff8d00 290px,#ff8100 300px,#ff7600 310px,#ff6c00 320px,#ff6300 330px,#ff5a00 340px,#ff5200 350px,#ff4b00 360px,#ff4400 370px,#ff3e00 380px,#ff3700 390px,#ff3200 400px,#ff2e00 406px)"></div><div style="top:60px;height:3px;background:linear-gradient(90deg,#00ff37 0px,#00ff37 10px,#00ff37 20px,#00ff37 30px,#00ff37 40px,#00ff37 50px,#00ff37 60px,#00ff37 70px,#00ff37 80px,#00ff37 90px,#00ff37 100px,#0dff34 110px,#1eff31 120px,#30ff2d 130px,#43ff29 140px,#57ff25 150px,#6cff20 160px,#81ff1c 170px,#97ff17 180px,#aeff12 190px,#c6ff0d 200px,#e0ff08 210px,#faff03 220px,#ffeb00 230px,#ffd700 240px,#ffc400 250px,#ffb300 260px,#ffa400 270px,#ff9600 280px,#ff8900 290px,#ff7e00 300px,#ff7300 310px,#ff6900 320px,#ff6000 330px,#ff5800 340px,#ff5000 350px,#ff4900 360px,#ff4200 370px,#ff3c00 380px,#ff3600 390px,#ff3000 400px,#ff2d00 406px)"></div><div style="top:63px;height:3px;background:linear-gradient(90deg,#00ff3a 0px,#00ff3a 10px,#00ff3a 20px,#00ff3a 30px,#00ff3a 40px,#00ff3a 50px,#00ff3a 60px,#00ff3a 70px,#00ff3a 80px,#00ff3a 90px,#00ff3a 100px,#0fff37 110px,#21ff34 120px,#33ff30 130px,#46ff2c 140px,#5aff28 150px,#6fff23 160px,#85ff1f 170px,#9cff1a 180px,#b3ff15 190px,#ccff10 200px,#e6ff0b 210px,#fffe05 220px,#ffe500 230px,#ffd000 240px,#ffbe00 250px,#ffae00 260px,#ff9f00 270px,#ff9200 280px,#ff8600 290px,#ff7a00 300px,#ff7000 310px,#ff6600 320px,#ff5e00 330px,#ff5500 340px,#ff4e00 350px,#ff4700 360px,#ff4000 370px,#ff3a00 380px,#ff3400 390px,#ff2e00 400px,#ff2b00 406px)"></div><div style="top:66px;height:3px;background:linear-gradient(90deg,#00ff3e 0px,#00ff3e 10px,#00ff3e 20px,#00ff3e 30px,#00ff3e 40px,#00ff3e 50px,#00ff3e 60px,#00ff3e 70px,#00ff3e 80px,#00ff3e 90px,#00ff3e 100px,#11ff3a 110px,#23ff37 120px,#36ff33 130px,#49ff2f 140px,#5eff2b 150px,#73ff26 160px,#89ff22 170px,#a0ff1d 180px,#b8ff18 190px,#d1ff13 200px,#ecff0e 210px,#fff708 220px,#ffdf02 230px,#ffca00 240px,#ffb900 250px,#ffa900 260px,#ff9b00 270px,#ff8e00 280px,#ff8200 290px,#ff7700 300px,#ff6d00 310px,#ff6400 320px,#ff5b00 330px,#ff5300 340px,#ff4b00 350px,#ff4400 360px,#ff3e00 370px,#ff3800 380px,#ff3200 390px,#ff2c00 400px,#ff2900 406px)"></div><div style="top:69px;height:3px;background:linear-gradient(90deg,#00ff41 0px,#00ff41 10px,#00ff41 20px,#00ff41 30px,#00ff41 40px,#00ff41 50px,#00ff41 60px,#00ff41 70px,#00ff41 80px,#00ff41 90px,#01ff41 100px,#13ff3d 110px,#25ff3a 120px,#39ff36 130px,#4dff32 140px,#61ff2e 150px,#77ff2a 160px,#8dff25 170px,#a5ff20 180px,#bdff1c 190px,#d7ff17 200px,#f2ff11 210px,#fff10b 220px,#ffd905 230px,#ffc500 240px,#ffb400 250px,#ffa500 260px,#ff9700 270px,#ff8a00 280px,#ff7e00 290px,#ff7400 300px,#ff6a00 310px,#ff6100 320px,#ff5800 330px,#ff5100 340px,#ff4900 350px,#ff4200 360px,#ff3c00 370px,#ff3600 380px,#ff3000 390px,#ff2b00 400px,#ff2800 406px)"></div><div style="top:72px;height:3px;background:linear-gradient(90deg,#00ff45 0px,#00ff45 10px,#00ff45 20px,#00ff45 30px,#00ff45 40px,#00ff45 50px,#00ff45 60px,#00ff45 70px,#00ff45 80px,#00ff45 90px,#03ff44 100px,#15ff41 110px,#28ff3d 120px,#3bff39 130px,#50ff35 140px,#65ff31 150px,#7bff2d 160px,#92ff28 170px,#aaff24 180px,#c3ff1f 190px,#ddff1a 200px,#f9ff14 210px,#ffea0e 220px,#ffd307 230px,#ffc002 240px,#ffaf00 250px,#ffa000 260px,#ff9300 270px,#ff8600 280px,#ff7b00 290px,#ff7100 300px,#ff6700 310px,#ff5e00 320px,#ff5600 330px,#ff4e00 340px,#ff4700 350px,#ff4000 360px,#ff3a00 370px,#ff3400 380px,#ff2e00 390px,#ff2900 400px,#ff2600 406px)"></div><div style="top:75px;height:3px;background:linear-gradient(90deg,#00ff49 0px,#00ff49 10px,#00ff49 20px,#00ff49 30px,#00ff49 40px,#00ff49 50px,#00ff49 60px,#00ff49 70px,#00ff49 80px,#00ff49 90px,#05ff48 100px,#18ff44 110px,#2bff40 120px,#3eff3d 130px,#53ff39 140px,#69ff35 150px,#7fff30 160px,#96ff2c 170px,#afff27 180px,#c8ff22 190px,#e3ff1d 200px,#ffff18 210px,#ffe410 220px,#ffce0a 230px,#ffbb04 240px,#ffaa00 250px,#ff9c00 260px,#ff8f00 270px,#ff8300 280px,#ff7800 290px,#ff6d00 300px,#ff6400 310px,#ff5b00 320px,#ff5300 330px,#ff4c00 340px,#ff4500 350px,#ff3e00 360px,#ff3800 370px,#ff3200 380px,#ff2d00 390px,#ff2800 400px,#ff2500 406px)"></div><div style="top:78px;height:3px;background:linear-gradient(90deg,#00ff4c 0px,#00ff4c 10px,#00ff4c 20px,#00ff4c 30px,#00ff4c 40px,#00ff4c 50px,#00ff4c 60px,#00ff4c 70px,#00ff4c 80px,#00ff4c 90px,#07ff4b 100px,#1aff47 110px,#2dff44 120px,#41ff40 130px,#56ff3c 140px,#6cff38 150px,#83ff34 160px,#9bff2f 170px,#b4ff2b 180px,#ceff26 190px,#eaff21 200px,#fff81b 210px,#ffde13 220px,#ffc90c 230px,#ffb607 240px,#ffa602 250px,#ff9700 260px,#ff8b00 270px,#ff7f00 280px,#ff7400 290px,#ff6a00 300px,#ff6100 310px,#ff5900 320px,#ff5100 330px,#ff4a00 340px,#ff4300 350px,#ff3c00 360px,#ff3600 370px,#ff3000 380px,#ff2b00 390px,#ff2600 400px,#ff2300 406px)"></div><div style="top:81px;height:3px;background:linear-gradient(90deg,#00ff50 0px,#00ff50 10px,#00ff50 20px,#00ff50 30px,#00ff50 40px,#00ff50 50px,#00ff50 60px,#00ff50 70px,#00ff50 80px,#00ff50 90px,#09ff4e 100px,#1cff4b 110px,#30ff47 120px,#45ff44 130px,#5aff40 140px,#70ff3c 150px,#88ff37 160px,#a0ff33 170px,#baff2e 180px,#d4ff29 190px,#f0ff24 200px,#fff11d 210px,#ffd815 220px,#ffc30f 230px,#ffb109 240px,#ffa104 250px,#ff9300 260px,#ff8700 270px,#ff7c00 280px,#ff7100 290px,#ff6800 300px,#ff5f00 310px,#ff5600 320px,#ff4f00 330px,#ff4700 340px,#ff4100 350px,#ff3a00 360px,#ff3400 370px,#ff2f00 380px,#ff2a00 390px,#ff2500 400px,#ff2200 406px)"></div><div style="top:84px;height:3px;background:linear-gradient(90deg,#00ff54 0px,#00ff54 10px,#00ff54 20px,#00ff54 30px,#00ff54 40px,#00ff54 50px,#00ff54 60px,#00ff54 70px,#00ff54 80px,#00ff54 90px,#0cff52 100px,#1fff4f 110px,#33ff4b 120px,#48ff47 130px,#5eff43 140px,#74ff3f 150px,#8cff3b 160px,#a5ff37 170px,#bfff32 180px,#daff2d 190px,#f7ff28 200px,#ffeb20 210px,#ffd318 220px,#ffbe11 230px,#ffac0b 240px,#ff9d06 250px,#ff8f02 260px,#ff8300 270px,#ff7800 280px,#ff6e00 290px,#ff6500 300px,#ff5c00 310px,#ff5400 320px,#ff4c00 330px,#ff4500 340px,#ff3f00 350px,#ff3800 360px,#ff3300 370px,#ff2d00 380px,#ff2800 390px,#ff2300 400px,#ff2000 406px)"></div><div style="top:87px;height:3px;background:linear-gradient(90deg,#00ff58 0px,#00ff58 10px,#00ff58 20px,#00ff58 30px,#00ff58 40px,#00ff58 50px,#00ff58 60px,#00ff58 70px,#00ff58 80px,#00ff58 90px,#0eff56 100px,#21ff52 110px,#36ff4f 120px,#4bff4b 130px,#61ff47 140px,#79ff43 150px,#91ff3f 160px,#aaff3b 170px,#c5ff36 180px,#e1ff31 190px,#feff2c 200px,#ffe423 210px,#ffcd1a 220px,#ffb914 230px,#ffa80e 240px,#ff9908 250px,#ff8b04 260px,#ff8000 270px,#ff7500 280px,#ff6b00 290px,#ff6200 300px,#ff5900 310px,#ff5100 320px,#ff4a00 330px,#ff4300 340px,#ff3d00 350px,#ff3700 360px,#ff3100 370px,#ff2b00 380px,#ff2600 390px,#ff2200 400px,#ff1f00 406px)"></div><div style="top:90px;height:3px;background:linear-gradient(90deg,#00ff5c 0px,#00ff5c 10px,#00ff5c 20px,#00ff5c 30px,#00ff5c 40px,#00ff5c 50px,#00ff5c 60px,#00ff5c 70px,#00ff5c 80px,#00ff5c 90px,#10ff5a 100px,#24ff56 110px,#39ff53 120px,#4fff4f 130px,#65ff4b 140px,#7dff47 150px,#96ff43 160px,#b0ff3f 170px,#cbff3a 180px,#e7ff35 190px,#fff92f 200px,#ffde25 210px,#ffc71d 220px,#ffb416 230px,#ffa310 240px,#ff940a 250px,#ff8806 260px,#ff7c02 270px,#ff7200 280px,#ff6800 290px,#ff5f00 300px,#ff5700 310px,#ff4f00 320px,#ff4800 330px,#ff4100 340px,#ff3b00 350px,#ff3500 360px,#ff2f00 370px,#ff2a00 380px,#ff2500 390px,#ff2000 400px,#ff1d00 406px)"></div><div style="top:93px;height:3px;background:linear-gradient(90deg,#00ff61 0px,#00ff61 10px,#00ff61 20px,#00ff61 30px,#00ff61 40px,#00ff61 50px,#00ff61 60px,#00ff61 70px,#00ff61 80px,#00ff61 90px,#13ff5e 100px,#27ff5a 110px,#3cff57 120px,#52ff53 130px,#69ff4f 140px,#81ff4b 150px,#9bff47 160px,#b5ff43 170px,#d1ff3e 180px,#eeff39 190px,#fff231 200px,#ffd828 210px,#ffc21f 220px,#ffaf18 230px,#ff9f12 240px,#ff900d 250px,#ff8408 260px,#ff7904 270px,#ff6f00 280px,#ff6500 290px,#ff5c00 300px,#ff5400 310px,#ff4d00 320px,#ff4600 330px,#ff3f00 340px,#ff3900 350px,#ff3300 360px,#ff2d00 370px,#ff2800 380px,#ff2300 390px,#ff1f00 400px,#ff1c00 406px)"></div><div style="top:96px;height:3px;background:linear-gradient(90deg,#00ff65 0px,#00ff65 10px,#00ff65 20px,#00ff65 30px,#00ff65 40px,#00ff65 50px,#00ff65 60px,#00ff65 70px,#00ff65 80px,#01ff65 90px,#15ff62 100px,#2aff5e 110px,#3fff5b 120px,#56ff57 130px,#6dff53 140px,#86ff4f 150px,#a0ff4b 160px,#bbff47 170px,#d7ff42 180px,#f5ff3e 190px,#ffeb34 200px,#ffd22a 210px,#ffbc22 220px,#ffaa1a 230px,#ff9a14 240px,#ff8c0f 250px,#ff800a 260px,#ff7505 270px,#ff6b02 280px,#ff6200 290px,#ff5a00 300px,#ff5200 310px,#ff4a00 320px,#ff4300 330px,#ff3d00 340px,#ff3700 350px,#ff3100 360px,#ff2c00 370px,#ff2700 380px,#ff2200 390px,#ff1d00 400px,#ff1b00 406px)"></div><div style="top:99px;height:3px;background:linear-gradient(90deg,#00ff69 0px,#00ff69 10px,#00ff69 20px,#00ff69 30px,#00ff69 40px,#00ff69 50px,#00ff69 60px,#00ff69 70px,#00ff69 80px,#03ff69 90px,#18ff66 100px,#2dff63 110px,#43ff5f 120px,#59ff5b 130px,#72ff58 140px,#8bff54 150px,#a5ff50 160px,#c1ff4b 170px,#deff47 180px,#fdff42 190px,#ffe437 200px,#ffcc2c 210px,#ffb724 220px,#ffa51d 230px,#ff9616 240px,#ff8811 250px,#ff7c0c 260px,#ff7207 270px,#ff6803 280px,#ff6000 290px,#ff5700 300px,#ff4f00 310px,#ff4800 320px,#ff4100 330px,#ff3b00 340px,#ff3500 350px,#ff2f00 360px,#ff2a00 370px,#ff2500 380px,#ff2000 390px,#ff1c00 400px,#ff1900 406px)"></div><div style="top:102px;height:3px;background:linear-gradient(90deg,#00ff6e 0px,#00ff6e 10px,#00ff6e 20px,#00ff6e 30px,#00ff6e 40px,#00ff6e 50px,#00ff6e 60px,#00ff6e 70px,#00ff6e 80px,#06ff6d 90px,#1aff6a 100px,#30ff67 110px,#46ff63 120px,#5dff60 130px,#76ff5c 140px,#90ff58 150px,#abff54 160px,#c7ff50 170px,#e5ff4b 180px,#fffa45 190px,#ffdd39 200px,#ffc62f 210px,#ffb226 220px,#ffa01f 230px,#ff9118 240px,#ff8413 250px,#ff790e 260px,#ff6e09 270px,#ff6505 280px,#ff5d01 290px,#ff5500 300px,#ff4d00 310px,#ff4600 320px,#ff3f00 330px,#ff3900 340px,#ff3300 350px,#ff2e00 360px,#ff2800 370px,#ff2400 380px,#ff1f00 390px,#ff1a00 400px,#ff1800 406px)"></div><div style="top:105px;height:3px;background:linear-gradient(90deg,#00ff73 0px,#00ff73 10px,#00ff73 20px,#00ff73 30px,#00ff73 40px,#00ff73 50px,#00ff73 60px,#00ff73 70px,#00ff73 80px,#08ff72 90px,#1dff6f 100px,#33ff6b 110px,#49ff68 120px,#61ff65 130px,#7aff61 140px,#95ff5d 150px,#b0ff59 160px,#cdff55 170px,#ecff50 180px,#fff248 190px,#ffd73b 200px,#ffc031 210px,#ffad28 220px,#ff9c21 230px,#ff8d1a 240px,#ff8015 250px,#ff750f 260px,#ff6b0b 270px,#ff6207 280px,#ff5a03 290px,#ff5200 300px,#ff4b00 310px,#ff4400 320px,#ff3d00 330px,#ff3700 340px,#ff3100 350px,#ff2c00 360px,#ff2700 370px,#ff2200 380px,#ff1d00 390px,#ff1900 400px,#ff1700 406px)"></div><div style="top:108px;height:3px;background:linear-gradient(90deg,#00ff78 0px,#00ff78 10px,#00ff78 20px,#00ff78 30px,#00ff78 40px,#00ff78 50px,#00ff78 60px,#00ff78 70px,#00ff78 80px,#0aff76 90px,#20ff73 100px,#36ff70 110px,#4dff6d 120px,#66ff69 130px,#7fff66 140px,#9aff62 150px,#b6ff5e 160px,#d4ff5a 170px,#f3ff55 180px,#ffeb4a 190px,#ffd13e 200px,#ffba33 210px,#ffa82b 220px,#ff9723 230px,#ff891c 240px,#ff7d16 250px,#ff7111 260px,#ff680d 270px,#ff5f08 280px,#ff5705 290px,#ff5001 300px,#ff4900 310px,#ff4200 320px,#ff3b00 330px,#ff3500 340px,#ff3000 350px,#ff2a00 360px,#ff2500 370px,#ff2100 380px,#ff1c00 390px,#ff1800 400px,#ff1500 406px)"></div><div style="top:111px;height:3px;background:linear-gradient(90deg,#00ff7d 0px,#00ff7d 10px,#00ff7d 20px,#00ff7d 30px,#00ff7d 40px,#00ff7d 50px,#00ff7d 60px,#00ff7d 70px,#00ff7d 80px,#0dff7b 90px,#22ff78 100px,#39ff75 110px,#51ff72 120px,#6aff6e 130px,#84ff6b 140px,#a0ff67 150px,#bdff63 160px,#dbff5f 170px,#fbff5a 180px,#ffe44d 190px,#ffca40 200px,#ffb536 210px,#ffa32d 220px,#ff9325 230px,#ff851e 240px,#ff7918 250px,#ff6e13 260px,#ff640e 270px,#ff5c0a 280px,#ff5406 290px,#ff4d03 300px,#ff4600 310px,#ff4000 320px,#ff3900 330px,#ff3400 340px,#ff2e00 350px,#ff2900 360px,#ff2400 370px,#ff1f00 380px,#ff1b00 390px,#ff1700 400px,#ff1400 406px)"></div><div style="top:114px;height:3px;background:linear-gradient(90deg,#00ff82 0px,#00ff82 10px,#00ff82 20px,#00ff82 30px,#00ff82 40px,#00ff82 50px,#00ff82 60px,#00ff82 70px,#00ff82 80px,#0fff80 90px,#25ff7d 100px,#3dff7a 110px,#55ff77 120px,#6eff73 130px,#89ff70 140px,#a5ff6c 150px,#c3ff68 160px,#e2ff64 170px,#fffb5e 180px,#ffdd4f 190px,#ffc443 200px,#ffaf38 210px,#ff9e2f 220px,#ff8e27 230px,#ff8120 240px,#ff751a 250px,#ff6a15 260px,#ff6110 270px,#ff590c 280px,#ff5108 290px,#ff4a04 300px,#ff4401 310px,#ff3e00 320px,#ff3800 330px,#ff3200 340px,#ff2c00 350px,#ff2700 360px,#ff2200 370px,#ff1e00 380px,#ff1900 390px,#ff1500 400px,#ff1300 406px)"></div><div style="top:117px;height:3px;background:linear-gradient(90deg,#00ff87 0px,#00ff87 10px,#00ff87 20px,#00ff87 30px,#00ff87 40px,#00ff87 50px,#00ff87 60px,#00ff87 70px,#00ff87 80px,#12ff85 90px,#29ff82 100px,#40ff7f 110px,#59ff7c 120px,#73ff79 130px,#8eff75 140px,#abff72 150px,#caff6e 160px,#eaff6a 170px,#fff361 180px,#ffd651 190px,#ffbe45 200px,#ffaa3a 210px,#ff9931 220px,#ff8a29 230px,#ff7d22 240px,#ff711c 250px,#ff6717 260px,#ff5e12 270px,#ff560d 280px,#ff4e0a 290px,#ff4806 300px,#ff4103 310px,#ff3c00 320px,#ff3600 330px,#ff3000 340px,#ff2b00 350px,#ff2600 360px,#ff2100 370px,#ff1c00 380px,#ff1800 390px,#ff1400 400px,#ff1200 406px)"></div><div style="top:120px;height:3px;background:linear-gradient(90deg,#00ff8c 0px,#00ff8c 10px,#00ff8c 20px,#00ff8c 30px,#00ff8c 40px,#00ff8c 50px,#00ff8c 60px,#00ff8c 70px,#00ff8c 80px,#15ff8a 90px,#2cff87 100px,#44ff84 110px,#5dff81 120px,#78ff7e 130px,#94ff7b 140px,#b1ff77 150px,#d0ff73 160px,#f1ff6f 170px,#ffeb63 180px,#ffcf54 190px,#ffb847 200px,#ffa53c 210px,#ff9433 220px,#ff852b 230px,#ff7924 240px,#ff6e1e 250px,#ff6418 260px,#ff5b14 270px,#ff530f 280px,#ff4c0b 290px,#ff4508 300px,#ff3f04 310px,#ff3901 320px,#ff3400 330px,#ff2e00 340px,#ff2900 350px,#ff2400 360px,#ff1f00 370px,#ff1b00 380px,#ff1700 390px,#ff1300 400px,#ff1000 406px)"></div><div style="top:123px;height:3px;background:linear-gradient(90deg,#00ff92 0px,#00ff92 10px,#00ff92 20px,#00ff92 30px,#00ff92 40px,#00ff92 50px,#00ff92 60px,#00ff92 70px,#01ff92 80px,#17ff8f 90px,#2fff8c 100px,#48ff8a 110px,#61ff87 120px,#7dff84 130px,#99ff80 140px,#b8ff7d 150px,#d8ff79 160px,#faff76 170px,#ffe465 180px,#ffc956 190px,#ffb349 200px,#ffa03e 210px,#ff8f35 220px,#ff812d 230px,#ff7526 240px,#ff6a20 250px,#ff601a 260px,#ff5815 270px,#ff5011 280px,#ff490d 290px,#ff4209 300px,#ff3c06 310px,#ff3703 320px,#ff3200 330px,#ff2d00 340px,#ff2700 350px,#ff2300 360px,#ff1e00 370px,#ff1a00 380px,#ff1500 390px,#ff1200 400px,#ff0f00 406px)"></div><div style="top:126px;height:3px;background:linear-gradient(90deg,#00ff97 0px,#00ff97 10px,#00ff97 20px,#00ff97 30px,#00ff97 40px,#00ff97 50px,#00ff97 60px,#00ff97 70px,#04ff97 80px,#1aff95 90px,#32ff92 100px,#4cff8f 110px,#66ff8d 120px,#82ff8a 130px,#9fff86 140px,#beff83 150px,#dfff80 160px,#fffc7a 170px,#ffdc68 180px,#ffc358 190px,#ffad4b 200px,#ff9a40 210px,#ff8b37 220px,#ff7d2f 230px,#ff7128 240px,#ff6621 250px,#ff5d1c 260px,#ff5517 270px,#ff4d12 280px,#ff460e 290px,#ff400b 300px,#ff3a07 310px,#ff3504 320px,#ff3001 330px,#ff2b00 340px,#ff2600 350px,#ff2100 360px,#ff1d00 370px,#ff1800 380px,#ff1400 390px,#ff1000 400px,#ff0e00 406px)"></div><div style="top:129px;height:3px;background:linear-gradient(90deg,#00ff9d 0px,#00ff9d 10px,#00ff9d 20px,#00ff9d 30px,#00ff9d 40px,#00ff9d 50px,#00ff9d 60px,#00ff9d 70px,#06ff9d 80px,#1dff9a 90px,#36ff98 100px,#50ff95 110px,#6bff93 120px,#87ff90 130px,#a5ff8d 140px,#c5ff89 150px,#e7ff86 160px,#fff47d 170px,#ffd56a 180px,#ffbc5a 190px,#ffa74d 200px,#ff9542 210px,#ff8639 220px,#ff7931 230px,#ff6d2a 240px,#ff6323 250px,#ff5a1e 260px,#ff5118 270px,#ff4a14 280px,#ff4310 290px,#ff3d0c 300px,#ff3809 310px,#ff3305 320px,#ff2e02 330px,#ff2900 340px,#ff2400 350px,#ff2000 360px,#ff1b00 370px,#ff1700 380px,#ff1300 390px,#ff0f00 400px,#ff0d00 406px)"></div><div style="top:132px;height:3px;background:linear-gradient(90deg,#00ffa3 0px,#00ffa3 10px,#00ffa3 20px,#00ffa3 30px,#00ffa3 40px,#00ffa3 50px,#00ffa3 60px,#00ffa3 70px,#09ffa3 80px,#21ffa0 90px,#3aff9e 100px,#54ff9b 110px,#70ff99 120px,#8dff96 130px,#acff93 140px,#ccff90 150px,#efff8d 160px,#ffec7f 170px,#ffce6c 180px,#ffb65c 190px,#ffa24f 200px,#ff9144 210px,#ff823b 220px,#ff7533 230px,#ff692b 240px,#ff5f25 250px,#ff561f 260px,#ff4e1a 270px,#ff4715 280px,#ff4111 290px,#ff3b0d 300px,#ff350a 310px,#ff3007 320px,#ff2c04 330px,#ff2701 340px,#ff2300 350px,#ff1e00 360px,#ff1a00 370px,#ff1600 380px,#ff1200 390px,#ff0e00 400px,#ff0c00 406px)"></div><div style="top:135px;height:3px;background:linear-gradient(90deg,#00ffaa 0px,#00ffaa 10px,#00ffaa 20px,#00ffaa 30px,#00ffaa 40px,#00ffaa 50px,#00ffaa 60px,#00ffaa 70px,#0bffa9 80px,#24ffa6 90px,#3dffa4 100px,#58ffa2 110px,#75ff9f 120px,#93ff9d 130px,#b2ff9a 140px,#d4ff97 150px,#f8ff94 160px,#ffe481 170px,#ffc76e 180px,#ffb05f 190px,#ff9c52 200px,#ff8c46 210px,#ff7d3d 220px,#ff7135 230px,#ff662d 240px,#ff5c27 250px,#ff5321 260px,#ff4b1c 270px,#ff4417 280px,#ff3e13 290px,#ff380f 300px,#ff330b 310px,#ff2e08 320px,#ff2905 330px,#ff2502 340px,#ff2100 350px,#ff1d00 360px,#ff1900 370px,#ff1400 380px,#ff1100 390px,#ff0d00 400px,#ff0b00 406px)"></div><div style="top:138px;height:3px;background:linear-gradient(90deg,#00ffb0 0px,#00ffb0 10px,#00ffb0 20px,#00ffb0 30px,#00ffb0 40px,#00ffb0 50px,#00ffb0 60px,#00ffb0 70px,#0effaf 80px,#27ffad 90px,#41ffab 100px,#5dffa8 110px,#7affa6 120px,#99ffa4 130px,#b9ffa1 140px,#dcff9e 150px,#fffd9a 160px,#ffdc83 170px,#ffc170 180px,#ffaa61 190px,#ff9754 200px,#ff8748 210px,#ff793f 220px,#ff6d36 230px,#ff622f 240px,#ff5928 250px,#ff5023 260px,#ff491d 270px,#ff4219 280px,#ff3b14 290px,#ff3610 300px,#ff310d 310px,#ff2c09 320px,#ff2706 330px,#ff2304 340px,#ff2001 350px,#ff1b00 360px,#ff1700 370px,#ff1300 380px,#ff0f00 390px,#ff0c00 400px,#ff0a00 406px)"></div><div style="top:141px;height:3px;background:linear-gradient(90deg,#00ffb7 0px,#00ffb7 10px,#00ffb7 20px,#00ffb7 30px,#00ffb7 40px,#00ffb7 50px,#00ffb7 60px,#00ffb7 70px,#11ffb5 80px,#2bffb3 90px,#45ffb1 100px,#62ffaf 110px,#7fffad 120px,#9fffab 130px,#c0ffa8 140px,#e4ffa6 150px,#fff59c 160px,#ffd485 170px,#ffba72 180px,#ffa463 190px,#ff9255 200px,#ff824a 210px,#ff7541 220px,#ff6938 230px,#ff5e31 240px,#ff552a 250px,#ff4d24 260px,#ff461f 270px,#ff3f1a 280px,#ff3916 290px,#ff3312 300px,#ff2e0e 310px,#ff2a0b 320px,#ff2508 330px,#ff2105 340px,#ff1e02 350px,#ff1a00 360px,#ff1600 370px,#ff1200 380px,#ff0e00 390px,#ff0b00 400px,#ff0900 406px)"></div><div style="top:144px;height:3px;background:linear-gradient(90deg,#00ffbd 0px,#00ffbd 10px,#00ffbd 20px,#00ffbd 30px,#00ffbd 40px,#00ffbd 50px,#00ffbd 60px,#00ffbd 70px,#14ffbc 80px,#2effba 90px,#4affb8 100px,#66ffb6 110px,#85ffb4 120px,#a6ffb2 130px,#c8ffb0 140px,#edffad 150px,#ffec9e 160px,#ffcd87 170px,#ffb474 180px,#ff9f65 190px,#ff8d57 200px,#ff7e4c 210px,#ff7042 220px,#ff653a 230px,#ff5b32 240px,#ff522c 250px,#ff4a26 260px,#ff4320 270px,#ff3c1c 280px,#ff3617 290px,#ff3113 300px,#ff2c10 310px,#ff270c 320px,#ff2309 330px,#ff1f06 340px,#ff1c03 350px,#ff1801 360px,#ff1500 370px,#ff1100 380px,#ff0d00 390px,#ff0a00 400px,#ff0700 406px)"></div><div style="top:147px;height:3px;background:linear-gradient(90deg,#00ffc4 0px,#00ffc4 10px,#00ffc4 20px,#00ffc4 30px,#00ffc4 40px,#00ffc4 50px,#00ffc4 60px,#00ffc4 70px,#17ffc3 80px,#32ffc1 90px,#4effc0 100px,#6cffbe 110px,#8bffbc 120px,#acffba 130px,#d0ffb8 140px,#f6ffb6 150px,#ffe3a0 160px,#ffc689 170px,#ffad76 180px,#ff9966 190px,#ff8859 200px,#ff794e 210px,#ff6c44 220px,#ff613c 230px,#ff5734 240px,#ff4f2d 250px,#ff4727 260px,#ff4022 270px,#ff3a1d 280px,#ff3419 290px,#ff2e15 300px,#ff2a11 310px,#ff250d 320px,#ff210a 330px,#ff1d07 340px,#ff1a05 350px,#ff1702 360px,#ff1300 370px,#ff1000 380px,#ff0c00 390px,#ff0800 400px,#ff0600 406px)"></div><div style="top:150px;height:3px;background:linear-gradient(90deg,#00ffcc 0px,#00ffcc 10px,#00ffcc 20px,#00ffcc 30px,#00ffcc 40px,#00ffcc 50px,#00ffcc 60px,#01ffcc 70px,#1bffca 80px,#36ffc9 90px,#53ffc7 100px,#71ffc6 110px,#91ffc4 120px,#b4ffc2 130px,#d8ffc0 140px,#ffffbe 150px,#ffdba2 160px,#ffbe8b 170px,#ffa778 180px,#ff9368 190px,#ff835b 200px,#ff7550 210px,#ff6846 220px,#ff5d3d 230px,#ff5436 240px,#ff4b2f 250px,#ff4429 260px,#ff3d23 270px,#ff371f 280px,#ff311a 290px,#ff2c16 300px,#ff2712 310px,#ff230f 320px,#ff1f0c 330px,#ff1b09 340px,#ff1806 350px,#ff1503 360px,#ff1201 370px,#ff0e00 380px,#ff0b00 390px,#ff0700 400px,#ff0500 406px)"></div><div style="top:153px;height:3px;background:linear-gradient(90deg,#00ffd3 0px,#00ffd3 10px,#00ffd3 20px,#00ffd3 30px,#00ffd3 40px,#00ffd3 50px,#00ffd3 60px,#04ffd3 70px,#1effd2 80px,#3affd0 90px,#57ffcf 100px,#77ffce 110px,#98ffcc 120px,#bbffcb 130px,#e1ffc9 140px,#fff5c0 150px,#ffd3a3 160px,#ffb88d 170px,#ffa17a 180px,#ff8e6a 190px,#ff7e5d 200px,#ff7052 210px,#ff6448 220px,#ff5a3f 230px,#ff5037 240px,#ff4831 250px,#ff412a 260px,#ff3a25 270px,#ff3420 280px,#ff2f1b 290px,#ff2a17 300px,#ff2514 310px,#ff2110 320px,#ff1d0d 330px,#ff190a 340px,#ff1607 350px,#ff1304 360px,#ff1002 370px,#ff0d00 380px,#ff0a00 390px,#ff0600 400px,#ff0400 406px)"></div><div style="top:156px;height:3px;background:linear-gradient(90deg,#00ffdb 0px,#00ffdb 10px,#00ffdb 20px,#00ffdb 30px,#00ffdb 40px,#00ffdb 50px,#00ffdb 60px,#07ffdb 70px,#22ffda 80px,#3effd9 90px,#5cffd7 100px,#7cffd6 110px,#9fffd5 120px,#c3ffd4 130px,#eaffd2 140px,#ffecc1 150px,#ffcba5 160px,#ffb18e 170px,#ff9b7c 180px,#ff896c 190px,#ff795f 200px,#ff6c53 210px,#ff6049 220px,#ff5641 230px,#ff4d39 240px,#ff4532 250px,#ff3e2c 260px,#ff3726 270px,#ff3221 280px,#ff2c1d 290px,#ff2719 300px,#ff2315 310px,#ff1f11 320px,#ff1b0e 330px,#ff180b 340px,#ff1408 350px,#ff1106 360px,#ff0e03 370px,#ff0c01 380px,#ff0900 390px,#ff0500 400px,#ff0300 406px)"></div><div style="top:159px;height:3px;background:linear-gradient(90deg,#00ffe3 0px,#00ffe3 10px,#00ffe3 20px,#00ffe3 30px,#00ffe3 40px,#00ffe3 50px,#00ffe3 60px,#0affe2 70px,#25ffe2 80px,#43ffe1 90px,#62ffe0 100px,#83ffdf 110px,#a6ffde 120px,#cbffdd 130px,#f3ffdc 140px,#ffe3c3 150px,#ffc4a7 160px,#ffaa90 170px,#ff957e 180px,#ff836e 190px,#ff7461 200px,#ff6855 210px,#ff5c4b 220px,#ff5242 230px,#ff4a3b 240px,#ff4234 250px,#ff3b2d 260px,#ff3528 270px,#ff2f23 280px,#ff2a1e 290px,#ff251a 300px,#ff2116 310px,#ff1d13 320px,#ff190f 330px,#ff160c 340px,#ff1209 350px,#ff0f07 360px,#ff0d04 370px,#ff0a02 380px,#ff0800 390px,#ff0400 400px,#ff0200 406px)"></div><div style="top:162px;height:3px;background:linear-gradient(90deg,#00ffeb 0px,#00ffeb 10px,#00ffeb 20px,#00ffeb 30px,#00ffeb 40px,#00ffeb 50px,#00ffeb 60px,#0dffeb 70px,#29ffea 80px,#47ffea 90px,#67ffe9 100px,#89ffe8 110px,#adffe8 120px,#d4ffe7 130px,#fdffe6 140px,#ffdac4 150px,#ffbca9 160px,#ffa492 170px,#ff8f7f 180px,#ff7e70 190px,#ff7062 200px,#ff6357 210px,#ff584d 220px,#ff4f44 230px,#ff463c 240px,#ff3f35 250px,#ff382f 260px,#ff3229 270px,#ff2d24 280px,#ff2720 290px,#ff231b 300px,#ff1f17 310px,#ff1b14 320px,#ff1711 330px,#ff140d 340px,#ff110b 350px,#ff0e08 360px,#ff0b05 370px,#ff0803 380px,#ff0601 390px,#ff0300 400px,#ff0100 406px)"></div><div style="top:165px;height:3px;background:linear-gradient(90deg,#00fff4 0px,#00fff4 10px,#00fff4 20px,#00fff4 30px,#00fff4 40px,#00fff4 50px,#00fff4 60px,#10fff3 70px,#2dfff3 80px,#4cfff3 90px,#6dfff2 100px,#90fff2 110px,#b5fff2 120px,#ddfff1 130px,#fff6e9 140px,#ffd2c6 150px,#ffb5aa 160px,#ff9d94 170px,#ff8a81 180px,#ff7971 190px,#ff6b64 200px,#ff5f58 210px,#ff554e 220px,#ff4b46 230px,#ff433e 240px,#ff3c37 250px,#ff3530 260px,#ff2f2b 270px,#ff2a26 280px,#ff2521 290px,#ff211d 300px,#ff1c19 310px,#ff1915 320px,#ff1512 330px,#ff120f 340px,#ff0f0c 350px,#ff0c09 360px,#ff0906 370px,#ff0704 380px,#ff0502 390px,#ff0200 400px,#ff0000 406px)"></div><div style="top:168px;height:3px;background:linear-gradient(90deg,#00fffc 0px,#00fffc 10px,#00fffc 20px,#00fffc 30px,#00fffc 40px,#00fffc 50px,#00fffc 60px,#14fffc 70px,#32fffc 80px,#51fffc 90px,#73fffc 100px,#97fffc 110px,#bdfffc 120px,#e6fffc 130px,#ffedea 140px,#ffc9c7 150px,#ffaeac 160px,#ff9795 170px,#ff8483 180px,#ff7473 190px,#ff6766 200px,#ff5b5a 210px,#ff5150 220px,#ff4847 230px,#ff403f 240px,#ff3938 250px,#ff3332 260px,#ff2d2c 270px,#ff2727 280px,#ff2322 290px,#ff1e1e 300px,#ff1a1a 310px,#ff1716 320px,#ff1313 330px,#ff1010 340px,#ff0d0d 350px,#ff0a0a 360px,#ff0808 370px,#ff0505 380px,#ff0303 390px,#ff0101 400px,#ff0000 406px)"></div><div style="top:171px;height:3px;background:linear-gradient(90deg,#00f9ff 0px,#00f9ff 10px,#00f9ff 20px,#00f9ff 30px,#00f9ff 40px,#00f9ff 50px,#00f9ff 60px,#17f8ff 70px,#34f8ff 80px,#54f8ff 90px,#75f8ff 100px,#99f7ff 110px,#c0f7ff 120px,#e9f6ff 130px,#ffe3eb 140px,#ffc1c9 150px,#ffa7ad 160px,#ff9197 170px,#ff7f84 180px,#ff6f75 190px,#ff6267 200px,#ff575c 210px,#ff4d52 220px,#ff4549 230px,#ff3d41 240px,#ff363a 250px,#ff3033 260px,#ff2a2e 270px,#ff2528 280px,#ff2024 290px,#ff1c1f 300px,#ff181b 310px,#ff1518 320px,#ff1114 330px,#ff0e11 340px,#ff0b0e 350px,#ff090b 360px,#ff0609 370px,#ff0406 380px,#ff0204 390px,#ff0002 400px,#ff0000 406px)"></div><div style="top:174px;height:3px;background:linear-gradient(90deg,#00f0ff 0px,#00f0ff 10px,#00f0ff 20px,#00f0ff 30px,#00f0ff 40px,#00f0ff 50px,#00f0ff 60px,#1aefff 70px,#37efff 80px,#56eeff 90px,#77eeff 100px,#9aedff 110px,#c0ecff 120px,#e8ecff 130px,#ffd9ec 140px,#ffb9ca 150px,#ffa0af 160px,#ff8b99 170px,#ff7986 180px,#ff6b76 190px,#ff5e69 200px,#ff535d 210px,#ff4a53 220px,#ff414a 230px,#ff3a42 240px,#ff333b 250px,#ff2d35 260px,#ff282f 270px,#ff232a 280px,#ff1e25 290px,#ff1a21 300px,#ff161c 310px,#ff1319 320px,#ff0f15 330px,#ff0c12 340px,#ff0a0f 350px,#ff070c 360px,#ff040a 370px,#ff0207 380px,#ff0005 390px,#ff0002 400px,#ff0001 406px)"></div><div style="top:177px;height:3px;background:linear-gradient(90deg,#00e7ff 0px,#00e7ff 10px,#00e7ff 20px,#00e7ff 30px,#00e7ff 40px,#00e7ff 50px,#01e7ff 60px,#1ce7ff 70px,#39e6ff 80px,#58e5ff 90px,#78e4ff 100px,#9be3ff 110px,#c0e2ff 120px,#e8e1ff 130px,#ffd0ed 140px,#ffb2cb 150px,#ff99b0 160px,#ff859a 170px,#ff7488 180px,#ff6678 190px,#ff5a6b 200px,#ff4f5f 210px,#ff4655 220px,#ff3e4c 230px,#ff3744 240px,#ff303d 250px,#ff2a36 260px,#ff2530 270px,#ff202b 280px,#ff1c26 290px,#ff1822 300px,#ff141e 310px,#ff111a 320px,#ff0d16 330px,#ff0b13 340px,#ff0810 350px,#ff050d 360px,#ff030b 370px,#ff0108 380px,#ff0006 390px,#ff0003 400px,#ff0001 406px)"></div><div style="top:180px;height:3px;background:linear-gradient(90deg,#00dfff 0px,#00dfff 10px,#00dfff 20px,#00dfff 30px,#00dfff 40px,#00dfff 50px,#04dfff 60px,#1fdeff 70px,#3bddff 80px,#5adcff 90px,#7adbff 100px,#9cdaff 110px,#c0d8ff 120px,#e7d7ff 130px,#ffc7ee 140px,#ffaacd 150px,#ff92b2 160px,#ff7f9c 170px,#ff6f89 180px,#ff617a 190px,#ff566c 200px,#ff4b60 210px,#ff4256 220px,#ff3b4d 230px,#ff3445 240px,#ff2d3e 250px,#ff2838 260px,#ff2232 270px,#ff1e2c 280px,#ff1928 290px,#ff1623 300px,#ff121f 310px,#ff0f1b 320px,#ff0c18 330px,#ff0914 340px,#ff0611 350px,#ff040e 360px,#ff010c 370px,#ff0009 380px,#ff0006 390px,#ff0003 400px,#ff0002 406px)"></div><div style="top:183px;height:3px;background:linear-gradient(90deg,#00d7ff 0px,#00d7ff 10px,#00d7ff 20px,#00d7ff 30px,#00d7ff 40px,#00d7ff 50px,#07d7ff 60px,#21d6ff 70px,#3dd5ff 80px,#5bd3ff 90px,#7bd2ff 100px,#9dd1ff 110px,#c1cfff 120px,#e7cdff 130px,#ffbfef 140px,#ffa3ce 150px,#ff8cb3 160px,#ff7a9d 170px,#ff6a8b 180px,#ff5d7b 190px,#ff516e 200px,#ff4862 210px,#ff3f58 220px,#ff374f 230px,#ff3047 240px,#ff2a3f 250px,#ff2539 260px,#ff2033 270px,#ff1b2e 280px,#ff1729 290px,#ff1324 300px,#ff1020 310px,#ff0d1c 320px,#ff0a19 330px,#ff0715 340px,#ff0412 350px,#ff0210 360px,#ff000d 370px,#ff000a 380px,#ff0007 390px,#ff0004 400px,#ff0002 406px)"></div><div style="top:186px;height:3px;background:linear-gradient(90deg,#00d0ff 0px,#00d0ff 10px,#00d0ff 20px,#00d0ff 30px,#00d0ff 40px,#00d0ff 50px,#09cfff 60px,#24ceff 70px,#40ccff 80px,#5dcbff 90px,#7cc9ff 100px,#9ec8ff 110px,#c1c6ff 120px,#e7c4ff 130px,#ffb6f0 140px,#ff9bcf 150px,#ff86b5 160px,#ff749f 170px,#ff658c 180px,#ff587d 190px,#ff4d6f 200px,#ff4464 210px,#ff3b59 220px,#ff3450 230px,#ff2d48 240px,#ff2841 250px,#ff223a 260px,#ff1d34 270px,#ff192f 280px,#ff152a 290px,#ff1126 300px,#ff0e21 310px,#ff0b1e 320px,#ff081a 330px,#ff0517 340px,#ff0314 350px,#ff0011 360px,#ff000d 370px,#ff000a 380px,#ff0007 390px,#ff0005 400px,#ff0003 406px)"></div><div style="top:189px;height:3px;background:linear-gradient(90deg,#00c8ff 0px,#00c8ff 10px,#00c8ff 20px,#00c8ff 30px,#00c8ff 40px,#00c8ff 50px,#0cc8ff 60px,#26c6ff 70px,#42c4ff 80px,#5fc3ff 90px,#7ec1ff 100px,#9ebfff 110px,#c1bdff 120px,#e6bbff 130px,#ffaef1 140px,#ff94d0 150px,#ff80b6 160px,#ff6fa0 170px,#ff608e 180px,#ff547e 190px,#ff4971 200px,#ff4065 210px,#ff385b 220px,#ff3152 230px,#ff2b4a 240px,#ff2542 250px,#ff203c 260px,#ff1b36 270px,#ff1730 280px,#ff132b 290px,#ff0f27 300px,#ff0c23 310px,#ff091f 320px,#ff061b 330px,#ff0318 340px,#ff0115 350px,#ff0011 360px,#ff000e 370px,#ff000b 380px,#ff0008 390px,#ff0005 400px,#ff0004 406px)"></div><div style="top:192px;height:3px;background:linear-gradient(90deg,#00c1ff 0px,#00c1ff 10px,#00c1ff 20px,#00c1ff 30px,#00c1ff 40px,#00c1ff 50px,#0ec0ff 60px,#28bfff 70px,#44bdff 80px,#60bbff 90px,#7fb9ff 100px,#9fb7ff 110px,#c2b4ff 120px,#e6b2ff 130px,#ffa6f2 140px,#ff8ed1 150px,#ff7ab7 160px,#ff69a1 170px,#ff5b8f 180px,#ff5080 190px,#ff4572 200px,#ff3d67 210px,#ff355c 220px,#ff2e53 230px,#ff284b 240px,#ff2244 250px,#ff1d3d 260px,#ff1937 270px,#ff1432 280px,#ff112d 290px,#ff0d28 300px,#ff0a24 310px,#ff0720 320px,#ff041c 330px,#ff0219 340px,#ff0016 350px,#ff0012 360px,#ff000f 370px,#ff000c 380px,#ff0009 390px,#ff0006 400px,#ff0004 406px)"></div><div style="top:195px;height:3px;background:linear-gradient(90deg,#00baff 0px,#00baff 10px,#00baff 20px,#00baff 30px,#00baff 40px,#00baff 50px,#11b9ff 60px,#2bb7ff 70px,#45b5ff 80px,#62b3ff 90px,#80b1ff 100px,#a0aeff 110px,#c2acff 120px,#e6a9ff 130px,#ff9ef3 140px,#ff87d3 150px,#ff74b8 160px,#ff64a3 170px,#ff5791 180px,#ff4b81 190px,#ff4274 200px,#ff3968 210px,#ff315e 220px,#ff2b54 230px,#ff254c 240px,#ff1f45 250px,#ff1b3e 260px,#ff1638 270px,#ff1233 280px,#ff0e2e 290px,#ff0b29 300px,#ff0825 310px,#ff0521 320px,#ff021d 330px,#ff001a 340px,#ff0016 350px,#ff0013 360px,#ff0010 370px,#ff000c 380px,#ff0009 390px,#ff0006 400px,#ff0005 406px)"></div><div style="top:198px;height:3px;background:linear-gradient(90deg,#00b4ff 0px,#00b4ff 10px,#00b4ff 20px,#00b4ff 30px,#00b4ff 40px,#00b4ff 50px,#13b2ff 60px,#2db0ff 70px,#47aeff 80px,#64abff 90px,#81a9ff 100px,#a1a6ff 110px,#c2a4ff 120px,#e5a1ff 130px,#ff97f3 140px,#ff80d4 150px,#ff6eba 160px,#ff5fa4 170px,#ff5292 180px,#ff4783 190px,#ff3e75 200px,#ff3569 210px,#ff2e5f 220px,#ff2856 230px,#ff224e 240px,#ff1d46 250px,#ff1840 260px,#ff143a 270px,#ff1034 280px,#ff0c2f 290px,#ff092a 300px,#ff0626 310px,#ff0322 320px,#ff011e 330px,#ff001b 340px,#ff0017 350px,#ff0014 360px,#ff0010 370px,#ff000d 380px,#ff000a 390px,#ff0007 400px,#ff0005 406px)"></div><div style="top:201px;height:3px;background:linear-gradient(90deg,#00adff 0px,#00adff 10px,#00adff 20px,#00adff 30px,#00adff 40px,#00adff 50px,#16abff 60px,#2fa9ff 70px,#49a7ff 80px,#65a4ff 90px,#82a2ff 100px,#a19fff 110px,#c29cff 120px,#e599ff 130px,#ff8ff4 140px,#ff7ad5 150px,#ff68bb 160px,#ff5aa6 170px,#ff4e93 180px,#ff4384 190px,#ff3a77 200px,#ff326b 210px,#ff2b60 220px,#ff2557 230px,#ff1f4f 240px,#ff1a48 250px,#ff1641 260px,#ff113b 270px,#ff0e35 280px,#ff0a30 290px,#ff072c 300px,#ff0427 310px,#ff0123 320px,#ff001f 330px,#ff001c 340px,#ff0018 350px,#ff0014 360px,#ff0011 370px,#ff000e 380px,#ff000b 390px,#ff0008 400px,#ff0006 406px)"></div><div style="top:204px;height:3px;background:linear-gradient(90deg,#00a7ff 0px,#00a7ff 10px,#00a7ff 20px,#00a7ff 30px,#00a7ff 40px,#01a7ff 50px,#18a4ff 60px,#31a2ff 70px,#4ba0ff 80px,#669dff 90px,#839aff 100px,#a297ff 110px,#c294ff 120px,#e591ff 130px,#ff88f5 140px,#ff74d6 150px,#ff63bc 160px,#ff55a7 170px,#ff4995 180px,#ff3f85 190px,#ff3678 200px,#ff2e6c 210px,#ff2862 220px,#ff2259 230px,#ff1c50 240px,#ff1749 250px,#ff1342 260px,#ff0f3c 270px,#ff0b37 280px,#ff0831 290px,#ff052d 300px,#ff0228 310px,#ff0024 320px,#ff0020 330px,#ff001c 340px,#ff0019 350px,#ff0015 360px,#ff0012 370px,#ff000e 380px,#ff000b 390px,#ff0008 400px,#ff0007 406px)"></div><div style="top:207px;height:3px;background:linear-gradient(90deg,#00a1ff 0px,#00a1ff 10px,#00a1ff 20px,#00a1ff 30px,#00a1ff 40px,#03a0ff 50px,#1a9eff 60px,#339bff 70px,#4d99ff 80px,#6896ff 90px,#8593ff 100px,#a390ff 110px,#c38dff 120px,#e589ff 130px,#ff81f6 140px,#ff6dd7 150px,#ff5dbd 160px,#ff50a8 170px,#ff4596 180px,#ff3b87 190px,#ff3279 200px,#ff2b6e 210px,#ff2563 220px,#ff1f5a 230px,#ff1a52 240px,#ff154a 250px,#ff1143 260px,#ff0d3d 270px,#ff0938 280px,#ff0633 290px,#ff032e 300px,#ff002a 310px,#ff0025 320px,#ff0021 330px,#ff001d 340px,#ff0019 350px,#ff0016 360px,#ff0012 370px,#ff000f 380px,#ff000c 390px,#ff0009 400px,#ff0007 406px)"></div><div style="top:210px;height:3px;background:linear-gradient(90deg,#009bff 0px,#009bff 10px,#009bff 20px,#009bff 30px,#009bff 40px,#059aff 50px,#1d98ff 60px,#3595ff 70px,#4e92ff 80px,#698fff 90px,#868cff 100px,#a389ff 110px,#c386ff 120px,#e482ff 130px,#ff7af7 140px,#ff67d8 150px,#ff58bf 160px,#ff4ba9 170px,#ff4098 180px,#ff3788 190px,#ff2f7b 200px,#ff286f 210px,#ff2165 220px,#ff1c5b 230px,#ff1753 240px,#ff124c 250px,#ff0e45 260px,#ff0a3f 270px,#ff0739 280px,#ff0434 290px,#ff012f 300px,#ff002a 310px,#ff0026 320px,#ff0022 330px,#ff001e 340px,#ff001a 350px,#ff0017 360px,#ff0013 370px,#ff0010 380px,#ff000d 390px,#ff000a 400px,#ff0008 406px)"></div><div style="top:213px;height:3px;background:linear-gradient(90deg,#0095ff 0px,#0095ff 10px,#0095ff 20px,#0095ff 30px,#0095ff 40px,#0894ff 50px,#1f91ff 60px,#378fff 70px,#508cff 80px,#6b89ff 90px,#8785ff 100px,#a482ff 110px,#c37fff 120px,#e47bff 130px,#ff73f7 140px,#ff62d9 150px,#ff53c0 160px,#ff47ab 170px,#ff3c99 180px,#ff3389 190px,#ff2b7c 200px,#ff2470 210px,#ff1e66 220px,#ff195d 230px,#ff1454 240px,#ff104d 250px,#ff0c46 260px,#ff0840 270px,#ff053a 280px,#ff0235 290px,#ff0030 300px,#ff002b 310px,#ff0027 320px,#ff0023 330px,#ff001f 340px,#ff001b 350px,#ff0017 360px,#ff0014 370px,#ff0011 380px,#ff000d 390px,#ff000a 400px,#ff0009 406px)"></div><div style="top:216px;height:3px;background:linear-gradient(90deg,#008fff 0px,#008fff 10px,#008fff 20px,#008fff 30px,#008fff 40px,#0a8eff 50px,#218bff 60px,#3988ff 70px,#5285ff 80px,#6c82ff 90px,#887fff 100px,#a57bff 110px,#c378ff 120px,#e474ff 130px,#ff6df8 140px,#ff5cda 150px,#ff4ec1 160px,#ff42ac 170px,#ff389a 180px,#ff2f8b 190px,#ff287d 200px,#ff2172 210px,#ff1b67 220px,#ff165e 230px,#ff1156 240px,#ff0d4e 250px,#ff0947 260px,#ff0641 270px,#ff033b 280px,#ff0036 290px,#ff0031 300px,#ff002c 310px,#ff0028 320px,#ff0024 330px,#ff0020 340px,#ff001c 350px,#ff0018 360px,#ff0015 370px,#ff0011 380px,#ff000e 390px,#ff000b 400px,#ff0009 406px)"></div><div style="top:219px;height:3px;background:linear-gradient(90deg,#008aff 0px,#008aff 10px,#008aff 20px,#008aff 30px,#008aff 40px,#0c88ff 50px,#2385ff 60px,#3a82ff 70px,#537fff 80px,#6d7cff 90px,#8879ff 100px,#a575ff 110px,#c471ff 120px,#e46dff 130px,#ff66f9 140px,#ff56db 150px,#ff49c2 160px,#ff3dad 170px,#ff349b 180px,#ff2c8c 190px,#ff247f 200px,#ff1e73 210px,#ff1868 220px,#ff135f 230px,#ff0f57 240px,#ff0b4f 250px,#ff0748 260px,#ff0442 270px,#ff013c 280px,#ff0037 290px,#ff0032 300px,#ff002d 310px,#ff0029 320px,#ff0025 330px,#ff0021 340px,#ff001d 350px,#ff0019 360px,#ff0015 370px,#ff0012 380px,#ff000f 390px,#ff000c 400px,#ff000a 406px)"></div><div style="top:222px;height:3px;background:linear-gradient(90deg,#0084ff 0px,#0084ff 10px,#0084ff 20px,#0084ff 30px,#0084ff 40px,#0f82ff 50px,#2580ff 60px,#3c7cff 70px,#5579ff 80px,#6e76ff 90px,#8972ff 100px,#a66fff 110px,#c46bff 120px,#e367ff 130px,#ff60fa 140px,#ff51dc 150px,#ff44c3 160px,#ff39ae 170px,#ff309d 180px,#ff288d 190px,#ff2180 200px,#ff1b74 210px,#ff156a 220px,#ff1160 230px,#ff0c58 240px,#ff0850 250px,#ff054a 260px,#ff0243 270px,#ff003e 280px,#ff0038 290px,#ff0033 300px,#ff002e 310px,#ff002a 320px,#ff0026 330px,#ff0021 340px,#ff001e 350px,#ff001a 360px,#ff0016 370px,#ff0013 380px,#ff000f 390px,#ff000c 400px,#ff000a 406px)"></div><div style="top:225px;height:3px;background:linear-gradient(90deg,#007fff 0px,#007fff 10px,#007fff 20px,#007fff 30px,#007fff 40px,#117dff 50px,#277aff 60px,#3e77ff 70px,#5673ff 80px,#7070ff 90px,#8a6cff 100px,#a668ff 110px,#c464ff 120px,#e360ff 130px,#ff5afa 140px,#ff4bdd 150px,#ff3fc4 160px,#ff35af 170px,#ff2c9e 180px,#ff248f 190px,#ff1e81 200px,#ff1875 210px,#ff126b 220px,#ff0e62 230px,#ff0a59 240px,#ff0652 250px,#ff024b 260px,#ff0045 270px,#ff003f 280px,#ff0039 290px,#ff0034 300px,#ff0030 310px,#ff002b 320px,#ff0027 330px,#ff0022 340px,#ff001e 350px,#ff001b 360px,#ff0017 370px,#ff0013 380px,#ff0010 390px,#ff000d 400px,#ff000b 406px)"></div><div style="top:228px;height:3px;background:linear-gradient(90deg,#007aff 0px,#007aff 10px,#007aff 20px,#007aff 30px,#007aff 40px,#1377ff 50px,#2974ff 60px,#4071ff 70px,#586eff 80px,#716aff 90px,#8b66ff 100px,#a762ff 110px,#c45eff 120px,#e35aff 130px,#ff54fb 140px,#ff46de 150px,#ff3ac5 160px,#ff30b1 170px,#ff289f 180px,#ff2190 190px,#ff1a82 200px,#ff1577 210px,#ff106c 220px,#ff0b63 230px,#ff075a 240px,#ff0353 250px,#ff004c 260px,#ff0046 270px,#ff0040 280px,#ff003b 290px,#ff0035 300px,#ff0031 310px,#ff002c 320px,#ff0027 330px,#ff0023 340px,#ff001f 350px,#ff001b 360px,#ff0018 370px,#ff0014 380px,#ff0011 390px,#ff000e 400px,#ff000c 406px)"></div><div style="top:231px;height:3px;background:linear-gradient(90deg,#0075ff 0px,#0075ff 10px,#0075ff 20px,#0075ff 30px,#0075ff 40px,#1572ff 50px,#2b6fff 60px,#416cff 70px,#5968ff 80px,#7264ff 90px,#8c61ff 100px,#a75dff 110px,#c458ff 120px,#e354ff 130px,#ff4efb 140px,#ff41de 150px,#ff36c6 160px,#ff2cb2 170px,#ff24a0 180px,#ff1d91 190px,#ff1784 200px,#ff1278 210px,#ff0d6d 220px,#ff0864 230px,#ff055c 240px,#ff0154 250px,#ff004d 260px,#ff0047 270px,#ff0041 280px,#ff003c 290px,#ff0037 300px,#ff0032 310px,#ff002d 320px,#ff0028 330px,#ff0024 340px,#ff0020 350px,#ff001c 360px,#ff0019 370px,#ff0015 380px,#ff0012 390px,#ff000e 400px,#ff000c 406px)"></div><div style="top:234px;height:3px;background:linear-gradient(90deg,#0070ff 0px,#0070ff 10px,#0070ff 20px,#0070ff 30px,#0270ff 40px,#176dff 50px,#2d6aff 60px,#4366ff 70px,#5b63ff 80px,#735fff 90px,#8d5bff 100px,#a857ff 110px,#c452ff 120px,#e24eff 130px,#ff48fc 140px,#ff3cdf 150px,#ff31c7 160px,#ff28b3 170px,#ff20a1 180px,#ff1a92 190px,#ff1485 200px,#ff0f79 210px,#ff0a6f 220px,#ff0665 230px,#ff025d 240px,#ff0055 250px,#ff004f 260px,#ff0048 270px,#ff0043 280px,#ff003d 290px,#ff0038 300px,#ff0033 310px,#ff002e 320px,#ff0029 330px,#ff0025 340px,#ff0021 350px,#ff001d 360px,#ff0019 370px,#ff0016 380px,#ff0012 390px,#ff000f 400px,#ff000d 406px)"></div><div style="top:237px;height:3px;background:linear-gradient(90deg,#006cff 0px,#006cff 10px,#006cff 20px,#006cff 30px,#056bff 40px,#1968ff 50px,#2e64ff 60px,#4561ff 70px,#5c5dff 80px,#7459ff 90px,#8e55ff 100px,#a951ff 110px,#c54dff 120px,#e248ff 130px,#ff43fd 140px,#ff37e0 150px,#ff2cc8 160px,#ff24b4 170px,#ff1da3 180px,#ff1693 190px,#ff1186 200px,#ff0c7a 210px,#ff0770 220px,#ff0367 230px,#ff005e 240px,#ff0057 250px,#ff0050 260px,#ff004a 270px,#ff0044 280px,#ff003e 290px,#ff0039 300px,#ff0034 310px,#ff002f 320px,#ff002a 330px,#ff0026 340px,#ff0022 350px,#ff001e 360px,#ff001a 370px,#ff0016 380px,#ff0013 390px,#ff0010 400px,#ff000e 406px)"></div><div style="top:240px;height:3px;background:linear-gradient(90deg,#0067ff 0px,#0067ff 10px,#0067ff 20px,#0067ff 30px,#0766ff 40px,#1b63ff 50px,#305fff 60px,#465cff 70px,#5d58ff 80px,#7554ff 90px,#8f50ff 100px,#a94cff 110px,#c547ff 120px,#e243ff 130px,#ff3dfd 140px,#ff32e1 150px,#ff28c9 160px,#ff20b5 170px,#ff19a4 180px,#ff1395 190px,#ff0d87 200px,#ff097c 210px,#ff0471 220px,#ff0168 230px,#ff0060 240px,#ff0058 250px,#ff0052 260px,#ff004b 270px,#ff0045 280px,#ff003f 290px,#ff003a 300px,#ff0035 310px,#ff0030 320px,#ff002b 330px,#ff0027 340px,#ff0023 350px,#ff001f 360px,#ff001b 370px,#ff0017 380px,#ff0014 390px,#ff0010 400px,#ff000f 406px)"></div><div style="top:243px;height:3px;background:linear-gradient(90deg,#0063ff 0px,#0063ff 10px,#0063ff 20px,#0063ff 30px,#0961ff 40px,#1d5eff 50px,#325aff 60px,#4857ff 70px,#5e53ff 80px,#764fff 90px,#8f4bff 100px,#a946ff 110px,#c542ff 120px,#e23dff 130px,#ff38fe 140px,#ff2de2 150px,#ff24ca 160px,#ff1cb6 170px,#ff15a5 180px,#ff0f96 190px,#ff0a88 200px,#ff067d 210px,#ff0272 220px,#ff0069 230px,#ff0061 240px,#ff005a 250px,#ff0053 260px,#ff004d 270px,#ff0046 280px,#ff0041 290px,#ff003b 300px,#ff0036 310px,#ff0031 320px,#ff002c 330px,#ff0028 340px,#ff0024 350px,#ff0020 360px,#ff001c 370px,#ff0018 380px,#ff0015 390px,#ff0011 400px,#ff000f 406px)"></div><div style="top:246px;height:3px;background:linear-gradient(90deg,#005eff 0px,#005eff 10px,#005eff 20px,#005eff 30px,#0b5cff 40px,#1f59ff 50px,#3456ff 60px,#4952ff 70px,#604eff 80px,#774aff 90px,#9046ff 100px,#aa41ff 110px,#c53dff 120px,#e238ff 130px,#ff32ff 140px,#ff28e3 150px,#ff1fcb 160px,#ff18b7 170px,#ff12a6 180px,#ff0c97 190px,#ff078a 200px,#ff037e 210px,#ff0074 220px,#ff006b 230px,#ff0063 240px,#ff005c 250px,#ff0055 260px,#ff004e 270px,#ff0048 280px,#ff0042 290px,#ff003c 300px,#ff0037 310px,#ff0032 320px,#ff002d 330px,#ff0029 340px,#ff0025 350px,#ff0020 360px,#ff001d 370px,#ff0019 380px,#ff0015 390px,#ff0012 400px,#ff0010 406px)"></div><div style="top:249px;height:3px;background:linear-gradient(90deg,#005aff 0px,#005aff 10px,#005aff 20px,#005aff 30px,#0d58ff 40px,#2154ff 50px,#3551ff 60px,#4b4dff 70px,#6149ff 80px,#7845ff 90px,#9141ff 100px,#aa3cff 110px,#c537ff 120px,#e133ff 130px,#ff2dff 140px,#ff24e3 150px,#ff1bcc 160px,#ff14b8 170px,#ff0ea7 180px,#ff0998 190px,#ff048b 200px,#ff007f 210px,#ff0076 220px,#ff006d 230px,#ff0065 240px,#ff005d 250px,#ff0056 260px,#ff004f 270px,#ff0049 280px,#ff0043 290px,#ff003d 300px,#ff0038 310px,#ff0033 320px,#ff002e 330px,#ff002a 340px,#ff0025 350px,#ff0021 360px,#ff001d 370px,#ff001a 380px,#ff0016 390px,#ff0013 400px,#ff0011 406px)"></div><div style="top:252px;height:3px;background:linear-gradient(90deg,#0056ff 0px,#0056ff 10px,#0056ff 20px,#0056ff 30px,#0f53ff 40px,#2250ff 50px,#374cff 60px,#4c48ff 70px,#6244ff 80px,#7940ff 90px,#923cff 100px,#ab37ff 110px,#c532ff 120px,#e12dff 130px,#fe28ff 140px,#ff1fe4 150px,#ff17cd 160px,#ff11b9 170px,#ff0ba8 180px,#ff0699 190px,#ff018c 200px,#ff0081 210px,#ff0078 220px,#ff006f 230px,#ff0067 240px,#ff005f 250px,#ff0058 260px,#ff0051 270px,#ff004a 280px,#ff0044 290px,#ff003f 300px,#ff0039 310px,#ff0034 320px,#ff002f 330px,#ff002b 340px,#ff0026 350px,#ff0022 360px,#ff001e 370px,#ff001a 380px,#ff0017 390px,#ff0013 400px,#ff0011 406px)"></div><div style="top:255px;height:3px;background:linear-gradient(90deg,#0052ff 0px,#0052ff 10px,#0052ff 20px,#0052ff 30px,#114fff 40px,#244bff 50px,#3848ff 60px,#4d44ff 70px,#6340ff 80px,#7a3bff 90px,#9237ff 100px,#ab32ff 110px,#c62eff 120px,#e128ff 130px,#fe23ff 140px,#ff1be5 150px,#ff13ce 160px,#ff0dba 170px,#ff07a9 180px,#ff039a 190px,#ff008e 200px,#ff0083 210px,#ff007a 220px,#ff0071 230px,#ff0068 240px,#ff0060 250px,#ff0059 260px,#ff0052 270px,#ff004c 280px,#ff0046 290px,#ff0040 300px,#ff003a 310px,#ff0035 320px,#ff0030 330px,#ff002c 340px,#ff0027 350px,#ff0023 360px,#ff001f 370px,#ff001b 380px,#ff0018 390px,#ff0014 400px,#ff0012 406px)"></div><div style="top:258px;height:3px;background:linear-gradient(90deg,#004eff 0px,#004eff 10px,#004eff 20px,#004eff 30px,#134aff 40px,#2647ff 50px,#3a43ff 60px,#4f3fff 70px,#653bff 80px,#7b37ff 90px,#9332ff 100px,#ac2eff 110px,#c629ff 120px,#e124ff 130px,#fd1eff 140px,#ff16e6 150px,#ff0fcf 160px,#ff09bb 170px,#ff04aa 180px,#ff009b 190px,#ff0090 200px,#ff0085 210px,#ff007c 220px,#ff0073 230px,#ff006a 240px,#ff0062 250px,#ff005b 260px,#ff0054 270px,#ff004d 280px,#ff0047 290px,#ff0041 300px,#ff003c 310px,#ff0036 320px,#ff0031 330px,#ff002d 340px,#ff0028 350px,#ff0024 360px,#ff0020 370px,#ff001c 380px,#ff0018 390px,#ff0015 400px,#ff0013 406px)"></div><div style="top:261px;height:3px;background:linear-gradient(90deg,#004aff 0px,#004aff 10px,#004aff 20px,#024aff 30px,#1446ff 40px,#2842ff 50px,#3b3fff 60px,#503bff 70px,#6637ff 80px,#7c32ff 90px,#942eff 100px,#ac29ff 110px,#c624ff 120px,#e11fff 130px,#fd19ff 140px,#ff12e6 150px,#ff0bd0 160px,#ff06bc 170px,#ff01ab 180px,#ff009e 190px,#ff0092 200px,#ff0088 210px,#ff007e 220px,#ff0075 230px,#ff006c 240px,#ff0064 250px,#ff005c 260px,#ff0055 270px,#ff004f 280px,#ff0048 290px,#ff0042 300px,#ff003d 310px,#ff0038 320px,#ff0032 330px,#ff002e 340px,#ff0029 350px,#ff0025 360px,#ff0021 370px,#ff001d 380px,#ff0019 390px,#ff0016 400px,#ff0014 406px)"></div><div style="top:264px;height:3px;background:linear-gradient(90deg,#0046ff 0px,#0046ff 10px,#0046ff 20px,#0446ff 30px,#1642ff 40px,#293eff 50px,#3d3aff 60px,#5136ff 70px,#6732ff 80px,#7d2eff 90px,#9429ff 100px,#ad24ff 110px,#c61fff 120px,#e01aff 130px,#fc15ff 140px,#ff0ee7 150px,#ff07d0 160px,#ff02bd 170px,#ff00ae 180px,#ff00a1 190px,#ff0095 200px,#ff008a 210px,#ff0080 220px,#ff0076 230px,#ff006e 240px,#ff0066 250px,#ff005e 260px,#ff0057 270px,#ff0050 280px,#ff004a 290px,#ff0044 300px,#ff003e 310px,#ff0039 320px,#ff0034 330px,#ff002f 340px,#ff002a 350px,#ff0026 360px,#ff0022 370px,#ff001e 380px,#ff001a 390px,#ff0016 400px,#ff0014 406px)"></div><div style="top:267px;height:3px;background:linear-gradient(90deg,#0043ff 0px,#0043ff 10px,#0043ff 20px,#0641ff 30px,#183eff 40px,#2b3aff 50px,#3e36ff 60px,#5332ff 70px,#682eff 80px,#7e29ff 90px,#9525ff 100px,#ad20ff 110px,#c61bff 120px,#e016ff 130px,#fc10ff 140px,#ff0ae8 150px,#ff04d1 160px,#ff00bf 170px,#ff00b1 180px,#ff00a3 190px,#ff0097 200px,#ff008c 210px,#ff0082 220px,#ff0078 230px,#ff0070 240px,#ff0067 250px,#ff0060 260px,#ff0058 270px,#ff0051 280px,#ff004b 290px,#ff0045 300px,#ff003f 310px,#ff003a 320px,#ff0035 330px,#ff0030 340px,#ff002b 350px,#ff0027 360px,#ff0023 370px,#ff001f 380px,#ff001b 390px,#ff0017 400px,#ff0015 406px)"></div><div style="top:270px;height:3px;background:linear-gradient(90deg,#003fff 0px,#003fff 10px,#003fff 20px,#083dff 30px,#1a3aff 40px,#2c36ff 50px,#4032ff 60px,#542eff 70px,#692aff 80px,#7f25ff 90px,#9621ff 100px,#ad1cff 110px,#c617ff 120px,#e011ff 130px,#fb0cff 140px,#ff05e8 150px,#ff00d2 160px,#ff00c2 170px,#ff00b4 180px,#ff00a6 190px,#ff009a 200px,#ff008f 210px,#ff0084 220px,#ff007a 230px,#ff0071 240px,#ff0069 250px,#ff0061 260px,#ff005a 270px,#ff0053 280px,#ff004c 290px,#ff0046 300px,#ff0040 310px,#ff003b 320px,#ff0036 330px,#ff0031 340px,#ff002c 350px,#ff0028 360px,#ff0023 370px,#ff001f 380px,#ff001c 390px,#ff0018 400px,#ff0016 406px)"></div><div style="top:273px;height:3px;background:linear-gradient(90deg,#003cff 0px,#003cff 10px,#003cff 20px,#0a3aff 30px,#1b36ff 40px,#2e32ff 50px,#412eff 60px,#552aff 70px,#6a26ff 80px,#8021ff 90px,#961cff 100px,#ae17ff 110px,#c612ff 120px,#e00dff 130px,#fb07ff 140px,#ff01e9 150px,#ff00d6 160px,#ff00c6 170px,#ff00b7 180px,#ff00a9 190px,#ff009d 200px,#ff0091 210px,#ff0086 220px,#ff007d 230px,#ff0073 240px,#ff006b 250px,#ff0063 260px,#ff005b 270px,#ff0054 280px,#ff004e 290px,#ff0048 300px,#ff0042 310px,#ff003c 320px,#ff0037 330px,#ff0032 340px,#ff002d 350px,#ff0029 360px,#ff0024 370px,#ff0020 380px,#ff001c 390px,#ff0019 400px,#ff0017 406px)"></div><div style="top:276px;height:3px;background:linear-gradient(90deg,#0038ff 0px,#0038ff 10px,#0038ff 20px,#0b36ff 30px,#1d32ff 40px,#302eff 50px,#432aff 60px,#5626ff 70px,#6b21ff 80px,#811dff 90px,#9718ff 100px,#ae13ff 110px,#c60eff 120px,#e009ff 130px,#fa03ff 140px,#ff00ec 150px,#ff00da 160px,#ff00c9 170px,#ff00ba 180px,#ff00ac 190px,#ff009f 200px,#ff0093 210px,#ff0089 220px,#ff007f 230px,#ff0075 240px,#ff006d 250px,#ff0065 260px,#ff005d 270px,#ff0056 280px,#ff004f 290px,#ff0049 300px,#ff0043 310px,#ff003d 320px,#ff0038 330px,#ff0033 340px,#ff002e 350px,#ff002a 360px,#ff0025 370px,#ff0021 380px,#ff001d 390px,#ff001a 400px,#ff0017 406px)"></div><div style="top:279px;height:3px;background:linear-gradient(90deg,#0035ff 0px,#0035ff 10px,#0035ff 20px,#0d32ff 30px,#1f2eff 40px,#312aff 50px,#4426ff 60px,#5822ff 70px,#6c1dff 80px,#8119ff 90px,#9814ff 100px,#af0fff 110px,#c70aff 120px,#e005ff 130px,#f900ff 140px,#ff00f0 150px,#ff00dd 160px,#ff00cc 170px,#ff00bd 180px,#ff00af 190px,#ff00a2 200px,#ff0096 210px,#ff008b 220px,#ff0081 230px,#ff0077 240px,#ff006e 250px,#ff0066 260px,#ff005f 270px,#ff0057 280px,#ff0051 290px,#ff004a 300px,#ff0044 310px,#ff003e 320px,#ff0039 330px,#ff0034 340px,#ff002f 350px,#ff002b 360px,#ff0026 370px,#ff0022 380px,#ff001e 390px,#ff001a 400px,#ff0018 406px)"></div><div style="top:282px;height:3px;background:linear-gradient(90deg,#0031ff 0px,#0031ff 10px,#0031ff 20px,#0f2eff 30px,#202aff 40px,#3326ff 50px,#4522ff 60px,#591eff 70px,#6d1aff 80px,#8215ff 90px,#9810ff 100px,#af0bff 110px,#c706ff 120px,#e001ff 130px,#f400ff 140px,#ff00f5 150px,#ff00e1 160px,#ff00d0 170px,#ff00c0 180px,#ff00b2 190px,#ff00a5 200px,#ff0098 210px,#ff008d 220px,#ff0083 230px,#ff0079 240px,#ff0070 250px,#ff0068 260px,#ff0060 270px,#ff0059 280px,#ff0052 290px,#ff004c 300px,#ff0045 310px,#ff0040 320px,#ff003a 330px,#ff0035 340px,#ff0030 350px,#ff002c 360px,#ff0027 370px,#ff0023 380px,#ff001f 390px,#ff001b 400px,#ff0019 406px)"></div><div style="top:285px;height:3px;background:linear-gradient(90deg,#002eff 0px,#002eff 10px,#002eff 20px,#112bff 30px,#2227ff 40px,#3423ff 50px,#471fff 60px,#5a1aff 70px,#6e16ff 80px,#8311ff 90px,#990cff 100px,#af07ff 110px,#c702ff 120px,#dc00ff 130px,#f000ff 140px,#ff00f9 150px,#ff00e5 160px,#ff00d4 170px,#ff00c4 180px,#ff00b5 190px,#ff00a7 200px,#ff009b 210px,#ff0090 220px,#ff0085 230px,#ff007b 240px,#ff0072 250px,#ff006a 260px,#ff0062 270px,#ff005a 280px,#ff0053 290px,#ff004d 300px,#ff0047 310px,#ff0041 320px,#ff003b 330px,#ff0036 340px,#ff0031 350px,#ff002d 360px,#ff0028 370px,#ff0024 380px,#ff0020 390px,#ff001c 400px,#ff001a 406px)"></div><div style="top:288px;height:3px;background:linear-gradient(90deg,#002bff 0px,#002bff 10px,#022bff 20px,#1227ff 30px,#2423ff 40px,#351fff 50px,#481bff 60px,#5b17ff 70px,#6f12ff 80px,#840dff 90px,#9909ff 100px,#b004ff 110px,#c500ff 120px,#d800ff 130px,#eb00ff 140px,#ff00fe 150px,#ff00ea 160px,#ff00d7 170px,#ff00c7 180px,#ff00b8 190px,#ff00aa 200px,#ff009e 210px,#ff0092 220px,#ff0087 230px,#ff007d 240px,#ff0074 250px,#ff006c 260px,#ff0064 270px,#ff005c 280px,#ff0055 290px,#ff004e 300px,#ff0048 310px,#ff0042 320px,#ff003d 330px,#ff0037 340px,#ff0032 350px,#ff002e 360px,#ff0029 370px,#ff0025 380px,#ff0021 390px,#ff001d 400px,#ff001b 406px)"></div><div style="top:291px;height:3px;background:linear-gradient(90deg,#0028ff 0px,#0028ff 10px,#0327ff 20px,#1423ff 30px,#251fff 40px,#371bff 50px,#4917ff 60px,#5c13ff 70px,#700eff 80px,#840aff 90px,#9a05ff 100px,#b000ff 110px,#c100ff 120px,#d400ff 130px,#e700ff 140px,#fc00ff 150px,#ff00ee 160px,#ff00db 170px,#ff00ca 180px,#ff00bb 190px,#ff00ad 200px,#ff00a0 210px,#ff0095 220px,#ff008a 230px,#ff0080 240px,#ff0076 250px,#ff006d 260px,#ff0065 270px,#ff005e 280px,#ff0056 290px,#ff0050 300px,#ff0049 310px,#ff0043 320px,#ff003e 330px,#ff0038 340px,#ff0033 350px,#ff002f 360px,#ff002a 370px,#ff0026 380px,#ff0022 390px,#ff001e 400px,#ff001b 406px)"></div><div style="top:294px;height:3px;background:linear-gradient(90deg,#0025ff 0px,#0025ff 10px,#0524ff 20px,#1620ff 30px,#271cff 40px,#3818ff 50px,#4a14ff 60px,#5d0fff 70px,#710bff 80px,#8506ff 90px,#9a01ff 100px,#ac00ff 110px,#bd00ff 120px,#cf00ff 130px,#e300ff 140px,#f700ff 150px,#ff00f2 160px,#ff00df 170px,#ff00ce 180px,#ff00be 190px,#ff00b0 200px,#ff00a3 210px,#ff0097 220px,#ff008c 230px,#ff0082 240px,#ff0078 250px,#ff006f 260px,#ff0067 270px,#ff005f 280px,#ff0058 290px,#ff0051 300px,#ff004b 310px,#ff0045 320px,#ff003f 330px,#ff003a 340px,#ff0034 350px,#ff0030 360px,#ff002b 370px,#ff0027 380px,#ff0022 390px,#ff001e 400px,#ff001c 406px)"></div><div style="top:297px;height:3px;background:linear-gradient(90deg,#0022ff 0px,#0022ff 10px,#0720ff 20px,#171cff 30px,#2819ff 40px,#3a14ff 50px,#4c10ff 60px,#5e0cff 70px,#7207ff 80px,#8603ff 90px,#9800ff 100px,#a800ff 110px,#b900ff 120px,#cb00ff 130px,#de00ff 140px,#f200ff 150px,#ff00f7 160px,#ff00e3 170px,#ff00d2 180px,#ff00c2 190px,#ff00b3 200px,#ff00a6 210px,#ff009a 220px,#ff008e 230px,#ff0084 240px,#ff007a 250px,#ff0071 260px,#ff0069 270px,#ff0061 280px,#ff005a 290px,#ff0053 300px,#ff004c 310px,#ff0046 320px,#ff0040 330px,#ff003b 340px,#ff0036 350px,#ff0031 360px,#ff002c 370px,#ff0028 380px,#ff0023 390px,#ff001f 400px,#ff001d 406px)"></div><div style="top:300px;height:3px;background:linear-gradient(90deg,#001fff 0px,#001fff 10px,#091dff 20px,#1919ff 30px,#2a15ff 40px,#3b11ff 50px,#4d0dff 60px,#5f08ff 70px,#7304ff 80px,#8600ff 90px,#9500ff 100px,#a500ff 110px,#b600ff 120px,#c700ff 130px,#da00ff 140px,#ee00ff 150px,#ff00fb 160px,#ff00e7 170px,#ff00d5 180px,#ff00c5 190px,#ff00b6 200px,#ff00a9 210px,#ff009c 220px,#ff0091 230px,#ff0086 240px,#ff007c 250px,#ff0073 260px,#ff006b 270px,#ff0063 280px,#ff005b 290px,#ff0054 300px,#ff004e 310px,#ff0047 320px,#ff0041 330px,#ff003c 340px,#ff0037 350px,#ff0032 360px,#ff002d 370px,#ff0029 380px,#ff0024 390px,#ff0020 400px,#ff001e 406px)"></div><div style="top:303px;height:3px;background:linear-gradient(90deg,#001cff 0px,#001cff 10px,#0a1aff 20px,#1a16ff 30px,#2b12ff 40px,#3c0eff 50px,#4e09ff 60px,#6005ff 70px,#7400ff 80px,#8200ff 90px,#9100ff 100px,#a100ff 110px,#b200ff 120px,#c300ff 130px,#d600ff 140px,#ea00ff 150px,#fe00ff 160px,#ff00eb 170px,#ff00d9 180px,#ff00c8 190px,#ff00b9 200px,#ff00ab 210px,#ff009f 220px,#ff0093 230px,#ff0088 240px,#ff007e 250px,#ff0075 260px,#ff006c 270px,#ff0064 280px,#ff005d 290px,#ff0056 300px,#ff004f 310px,#ff0049 320px,#ff0043 330px,#ff003d 340px,#ff0038 350px,#ff0033 360px,#ff002e 370px,#ff0029 380px,#ff0025 390px,#ff0021 400px,#ff001f 406px)"></div><div style="top:306px;height:3px;background:linear-gradient(90deg,#0019ff 0px,#0019ff 10px,#0c16ff 20px,#1c13ff 30px,#2c0fff 40px,#3d0aff 50px,#4f06ff 60px,#6102ff 70px,#7100ff 80px,#7f00ff 90px,#8e00ff 100px,#9e00ff 110px,#ae00ff 120px,#c000ff 130px,#d200ff 140px,#e500ff 150px,#fa00ff 160px,#ff00f0 170px,#ff00dd 180px,#ff00cc 190px,#ff00bc 200px,#ff00ae 210px,#ff00a1 220px,#ff0096 230px,#ff008b 240px,#ff0080 250px,#ff0077 260px,#ff006e 270px,#ff0066 280px,#ff005e 290px,#ff0057 300px,#ff0050 310px,#ff004a 320px,#ff0044 330px,#ff003e 340px,#ff0039 350px,#ff0034 360px,#ff002f 370px,#ff002a 380px,#ff0026 390px,#ff0022 400px,#ff0020 406px)"></div><div style="top:309px;height:3px;background:linear-gradient(90deg,#0017ff 0px,#0017ff 10px,#0d13ff 20px,#1d0fff 30px,#2e0bff 40px,#3f07ff 50px,#5003ff 60px,#6000ff 70px,#6e00ff 80px,#7c00ff 90px,#8b00ff 100px,#9a00ff 110px,#aa00ff 120px,#bc00ff 130px,#ce00ff 140px,#e100ff 150px,#f500ff 160px,#ff00f4 170px,#ff00e1 180px,#ff00cf 190px,#ff00c0 200px,#ff00b1 210px,#ff00a4 220px,#ff0098 230px,#ff008d 240px,#ff0083 250px,#ff0079 260px,#ff0070 270px,#ff0068 280px,#ff0060 290px,#ff0059 300px,#ff0052 310px,#ff004b 320px,#ff0045 330px,#ff003f 340px,#ff003a 350px,#ff0035 360px,#ff0030 370px,#ff002b 380px,#ff0027 390px,#ff0023 400px,#ff0020 406px)"></div><div style="top:312px;height:3px;background:linear-gradient(90deg,#0014ff 0px,#0014ff 10px,#0f10ff 20px,#1f0cff 30px,#2f08ff 40px,#4004ff 50px,#5100ff 60px,#5e00ff 70px,#6b00ff 80px,#7900ff 90px,#8700ff 100px,#9700ff 110px,#a700ff 120px,#b800ff 130px,#ca00ff 140px,#dd00ff 150px,#f100ff 160px,#ff00f8 170px,#ff00e5 180px,#ff00d3 190px,#ff00c3 200px,#ff00b4 210px,#ff00a7 220px,#ff009b 230px,#ff008f 240px,#ff0085 250px,#ff007b 260px,#ff0072 270px,#ff0069 280px,#ff0062 290px,#ff005a 300px,#ff0053 310px,#ff004d 320px,#ff0047 330px,#ff0041 340px,#ff003b 350px,#ff0036 360px,#ff0031 370px,#ff002c 380px,#ff0028 390px,#ff0024 400px,#ff0021 406px)"></div><div style="top:315px;height:3px;background:linear-gradient(90deg,#0011ff 0px,#0111ff 10px,#110dff 20px,#2009ff 30px,#3005ff 40px,#4101ff 50px,#4e00ff 60px,#5b00ff 70px,#6800ff 80px,#7600ff 90px,#8400ff 100px,#9300ff 110px,#a300ff 120px,#b400ff 130px,#c600ff 140px,#d800ff 150px,#ec00ff 160px,#ff00fd 170px,#ff00e9 180px,#ff00d7 190px,#ff00c6 200px,#ff00b7 210px,#ff00aa 220px,#ff009d 230px,#ff0092 240px,#ff0087 250px,#ff007d 260px,#ff0074 270px,#ff006b 280px,#ff0063 290px,#ff005c 300px,#ff0055 310px,#ff004e 320px,#ff0048 330px,#ff0042 340px,#ff003c 350px,#ff0037 360px,#ff0032 370px,#ff002d 380px,#ff0029 390px,#ff0025 400px,#ff0022 406px)"></div><div style="top:318px;height:3px;background:linear-gradient(90deg,#000fff 0px,#030eff 10px,#120aff 20px,#2206ff 30px,#3202ff 40px,#4000ff 50px,#4c00ff 60px,#5800ff 70px,#6500ff 80px,#7300ff 90px,#8100ff 100px,#9000ff 110px,#a000ff 120px,#b000ff 130px,#c200ff 140px,#d400ff 150px,#e800ff 160px,#fc00ff 170px,#ff00ed 180px,#ff00db 190px,#ff00ca 200px,#ff00bb 210px,#ff00ad 220px,#ff00a0 230px,#ff0094 240px,#ff0089 250px,#ff007f 260px,#ff0076 270px,#ff006d 280px,#ff0065 290px,#ff005d 300px,#ff0056 310px,#ff0050 320px,#ff0049 330px,#ff0043 340px,#ff003e 350px,#ff0038 360px,#ff0033 370px,#ff002e 380px,#ff002a 390px,#ff0026 400px,#ff0023 406px)"></div><div style="top:321px;height:3px;background:linear-gradient(90deg,#000cff 0px,#050bff 10px,#1407ff 20px,#2303ff 30px,#3200ff 40px,#3d00ff 50px,#4900ff 60px,#5500ff 70px,#6200ff 80px,#7000ff 90px,#7e00ff 100px,#8d00ff 110px,#9c00ff 120px,#ad00ff 130px,#be00ff 140px,#d000ff 150px,#e300ff 160px,#f800ff 170px,#ff00f1 180px,#ff00df 190px,#ff00cd 200px,#ff00be 210px,#ff00b0 220px,#ff00a3 230px,#ff0097 240px,#ff008c 250px,#ff0081 260px,#ff0078 270px,#ff006f 280px,#ff0067 290px,#ff005f 300px,#ff0058 310px,#ff0051 320px,#ff004b 330px,#ff0044 340px,#ff003f 350px,#ff0039 360px,#ff0034 370px,#ff002f 380px,#ff002b 390px,#ff0026 400px,#ff0024 406px)"></div><div style="top:324px;height:3px;background:linear-gradient(90deg,#000aff 0px,#0608ff 10px,#1504ff 20px,#2400ff 30px,#2f00ff 40px,#3b00ff 50px,#4600ff 60px,#5200ff 70px,#5f00ff 80px,#6d00ff 90px,#7b00ff 100px,#8900ff 110px,#9900ff 120px,#a900ff 130px,#ba00ff 140px,#cc00ff 150px,#df00ff 160px,#f300ff 170px,#ff00f6 180px,#ff00e2 190px,#ff00d1 200px,#ff00c1 210px,#ff00b3 220px,#ff00a5 230px,#ff0099 240px,#ff008e 250px,#ff0083 260px,#ff007a 270px,#ff0071 280px,#ff0068 290px,#ff0061 300px,#ff0059 310px,#ff0052 320px,#ff004c 330px,#ff0046 340px,#ff0040 350px,#ff003b 360px,#ff0035 370px,#ff0030 380px,#ff002c 390px,#ff0027 400px,#ff0025 406px)"></div><div style="top:327px;height:3px;background:linear-gradient(90deg,#0007ff 0px,#0805ff 10px,#1701ff 20px,#2200ff 30px,#2d00ff 40px,#3800ff 50px,#4400ff 60px,#5000ff 70px,#5c00ff 80px,#6a00ff 90px,#7800ff 100px,#8600ff 110px,#9500ff 120px,#a500ff 130px,#b600ff 140px,#c800ff 150px,#db00ff 160px,#ef00ff 170px,#ff00fa 180px,#ff00e7 190px,#ff00d5 200px,#ff00c4 210px,#ff00b6 220px,#ff00a8 230px,#ff009c 240px,#ff0090 250px,#ff0086 260px,#ff007c 270px,#ff0073 280px,#ff006a 290px,#ff0062 300px,#ff005b 310px,#ff0054 320px,#ff004d 330px,#ff0047 340px,#ff0041 350px,#ff003c 360px,#ff0036 370px,#ff0032 380px,#ff002d 390px,#ff0028 400px,#ff0026 406px)"></div><div style="top:330px;height:3px;background:linear-gradient(90deg,#0005ff 0px,#0902ff 10px,#1600ff 20px,#2000ff 30px,#2b00ff 40px,#3600ff 50px,#4100ff 60px,#4d00ff 70px,#5a00ff 80px,#6700ff 90px,#7400ff 100px,#8300ff 110px,#9200ff 120px,#a200ff 130px,#b200ff 140px,#c400ff 150px,#d700ff 160px,#ea00ff 170px,#ff00ff 180px,#ff00eb 190px,#ff00d8 200px,#ff00c8 210px,#ff00b9 220px,#ff00ab 230px,#ff009e 240px,#ff0093 250px,#ff0088 260px,#ff007e 270px,#ff0075 280px,#ff006c 290px,#ff0064 300px,#ff005c 310px,#ff0055 320px,#ff004f 330px,#ff0048 340px,#ff0042 350px,#ff003d 360px,#ff0038 370px,#ff0033 380px,#ff002e 390px,#ff0029 400px,#ff0027 406px)"></div><div style="top:333px;height:3px;background:linear-gradient(90deg,#0002ff 0px,#0a00ff 10px,#1400ff 20px,#1e00ff 30px,#2800ff 40px,#3300ff 50px,#3f00ff 60px,#4a00ff 70px,#5700ff 80px,#6400ff 90px,#7100ff 100px,#8000ff 110px,#8f00ff 120px,#9e00ff 130px,#af00ff 140px,#c000ff 150px,#d300ff 160px,#e600ff 170px,#fa00ff 180px,#ff00ef 190px,#ff00dc 200px,#ff00cb 210px,#ff00bc 220px,#ff00ae 230px,#ff00a1 240px,#ff0095 250px,#ff008a 260px,#ff0080 270px,#ff0077 280px,#ff006e 290px,#ff0066 300px,#ff005e 310px,#ff0057 320px,#ff0050 330px,#ff004a 340px,#ff0044 350px,#ff003e 360px,#ff0039 370px,#ff0034 380px,#ff002f 390px,#ff002a 400px,#ff0028 406px)"></div><div style="top:336px;height:3px;background:linear-gradient(90deg,#0000ff 0px,#0800ff 10px,#1200ff 20px,#1c00ff 30px,#2600ff 40px,#3100ff 50px,#3c00ff 60px,#4800ff 70px,#5400ff 80px,#6100ff 90px,#6e00ff 100px,#7c00ff 110px,#8b00ff 120px,#9b00ff 130px,#ab00ff 140px,#bc00ff 150px,#ce00ff 160px,#e200ff 170px,#f600ff 180px,#ff00f3 190px,#ff00e0 200px,#ff00cf 210px,#ff00bf 220px,#ff00b1 230px,#ff00a4 240px,#ff0098 250px,#ff008d 260px,#ff0082 270px,#ff0079 280px,#ff0070 290px,#ff0067 300px,#ff0060 310px,#ff0058 320px,#ff0052 330px,#ff004b 340px,#ff0045 350px,#ff003f 360px,#ff003a 370px,#ff0035 380px,#ff0030 390px,#ff002b 400px,#ff0029 406px)"></div></div><div class="a" style="left:1602px;top:154px;width:234px;height:197px;background:#a8a8a8"></div><div class="a rows" style="left:1603px;top:155px;width:232px;height:195px"><div style="top:0px;height:4px;background:linear-gradient(90deg,#699900 0px,#6c9900 15px,#709900 30px,#739900 45px,#769900 60px,#7a9900 75px,#7d9900 90px,#809900 105px,#849900 120px,#889900 135px,#8b9900 150px,#8f9900 165px,#939900 180px,#979900 195px,#999700 210px,#999400 225px,#999200 232px)"></div><div style="top:4px;height:4px;background:linear-gradient(90deg,#6a9900 0px,#6d9900 15px,#709900 30px,#749900 45px,#779900 60px,#7a9900 75px,#7e9900 90px,#819900 105px,#859900 120px,#889900 135px,#8c9900 150px,#909900 165px,#949900 180px,#989900 195px,#999700 210px,#999300 225px,#999100 232px)"></div><div style="top:8px;height:4px;background:linear-gradient(90deg,#6b9900 0px,#6e9900 15px,#719900 30px,#759900 45px,#789900 60px,#7b9900 75px,#7f9900 90px,#829900 105px,#869900 120px,#899900 135px,#8d9900 150px,#919900 165px,#959900 180px,#999900 195px,#999600 210px,#999200 225px,#999000 232px)"></div><div style="top:12px;height:4px;background:linear-gradient(90deg,#6c9900 0px,#6f9900 15px,#729900 30px,#759900 45px,#799900 60px,#7c9900 75px,#809900 90px,#839900 105px,#879900 120px,#8a9900 135px,#8e9900 150px,#929900 165px,#969900 180px,#999800 195px,#999500 210px,#999100 225px,#998f00 232px)"></div><div style="top:16px;height:4px;background:linear-gradient(90deg,#6c9900 0px,#709900 15px,#739900 30px,#769900 45px,#7a9900 60px,#7d9900 75px,#809900 90px,#849900 105px,#889900 120px,#8b9900 135px,#8f9900 150px,#939900 165px,#979900 180px,#999700 195px,#999400 210px,#999000 225px,#998e00 232px)"></div><div style="top:20px;height:4px;background:linear-gradient(90deg,#6d9900 0px,#719900 15px,#749900 30px,#779900 45px,#7a9900 60px,#7e9900 75px,#819900 90px,#859900 105px,#899900 120px,#8c9900 135px,#909900 150px,#949900 165px,#989900 180px,#999600 195px,#999300 210px,#998f00 225px,#998d00 232px)"></div><div style="top:24px;height:4px;background:linear-gradient(90deg,#6e9900 0px,#719900 15px,#759900 30px,#789900 45px,#7b9900 60px,#7f9900 75px,#829900 90px,#869900 105px,#899900 120px,#8d9900 135px,#919900 150px,#959900 165px,#999900 180px,#999500 195px,#999200 210px,#998e00 225px,#998c00 232px)"></div><div style="top:28px;height:4px;background:linear-gradient(90deg,#6e9901 0px,#729900 15px,#759900 30px,#799900 45px,#7c9900 60px,#809900 75px,#839900 90px,#879900 105px,#8a9900 120px,#8e9900 135px,#929900 150px,#969900 165px,#999800 180px,#999400 195px,#999100 210px,#998d00 225px,#998b00 232px)"></div><div style="top:32px;height:4px;background:linear-gradient(90deg,#6f9901 0px,#739900 15px,#769900 30px,#7a9900 45px,#7d9900 60px,#819900 75px,#849900 90px,#889900 105px,#8b9900 120px,#8f9900 135px,#939900 150px,#979900 165px,#999700 180px,#999400 195px,#999000 210px,#998c00 225px,#998b00 232px)"></div><div style="top:36px;height:4px;background:linear-gradient(90deg,#709901 0px,#739901 15px,#779900 30px,#7b9900 45px,#7e9900 60px,#819900 75px,#859900 90px,#899900 105px,#8c9900 120px,#909900 135px,#949900 150px,#989900 165px,#999600 180px,#999300 195px,#998f00 210px,#998b00 225px,#998a00 232px)"></div><div style="top:40px;height:4px;background:linear-gradient(90deg,#709902 0px,#749901 15px,#789900 30px,#7b9900 45px,#7f9900 60px,#829900 75px,#869900 90px,#8a9900 105px,#8d9900 120px,#919900 135px,#959900 150px,#999900 165px,#999500 180px,#999200 195px,#998e00 210px,#998a00 225px,#998900 232px)"></div><div style="top:44px;height:4px;background:linear-gradient(90deg,#719902 0px,#759901 15px,#799900 30px,#7c9900 45px,#809900 60px,#839900 75px,#879900 90px,#8b9900 105px,#8e9900 120px,#929900 135px,#969900 150px,#999800 165px,#999400 180px,#999100 195px,#998d00 210px,#998a00 225px,#998800 232px)"></div><div style="top:48px;height:4px;background:linear-gradient(90deg,#729902 0px,#759902 15px,#799901 30px,#7d9900 45px,#819900 60px,#849900 75px,#889900 90px,#8b9900 105px,#8f9900 120px,#939900 135px,#979900 150px,#999700 165px,#999300 180px,#999000 195px,#998c00 210px,#998900 225px,#998700 232px)"></div><div style="top:52px;height:4px;background:linear-gradient(90deg,#729903 0px,#769902 15px,#7a9901 30px,#7e9900 45px,#829900 60px,#859900 75px,#899900 90px,#8c9900 105px,#909900 120px,#949900 135px,#989900 150px,#999600 165px,#999200 180px,#998f00 195px,#998b00 210px,#998800 225px,#998600 232px)"></div><div style="top:56px;height:4px;background:linear-gradient(90deg,#739903 0px,#779902 15px,#7b9901 30px,#7f9901 45px,#829900 60px,#869900 75px,#8a9900 90px,#8d9900 105px,#919900 120px,#959900 135px,#999900 150px,#999500 165px,#999200 180px,#998e00 195px,#998a00 210px,#998700 225px,#998500 232px)"></div><div style="top:60px;height:4px;background:linear-gradient(90deg,#749904 0px,#779903 15px,#7b9902 30px,#7f9901 45px,#839900 60px,#879900 75px,#8b9900 90px,#8e9900 105px,#929900 120px,#969900 135px,#999800 150px,#999400 165px,#999100 180px,#998d00 195px,#998a00 210px,#998600 225px,#998500 232px)"></div><div style="top:64px;height:4px;background:linear-gradient(90deg,#749904 0px,#789903 15px,#7c9902 30px,#809901 45px,#849900 60px,#889900 75px,#8c9900 90px,#8f9900 105px,#939900 120px,#979900 135px,#999700 150px,#999300 165px,#999000 180px,#998c00 195px,#998900 210px,#998500 225px,#998400 232px)"></div><div style="top:68px;height:4px;background:linear-gradient(90deg,#759904 0px,#799903 15px,#7d9903 30px,#819902 45px,#859901 60px,#899900 75px,#8c9900 90px,#909900 105px,#949900 120px,#989900 135px,#999600 150px,#999200 165px,#998f00 180px,#998b00 195px,#998800 210px,#998400 225px,#998300 232px)"></div><div style="top:72px;height:4px;background:linear-gradient(90deg,#769905 0px,#7a9904 15px,#7d9903 30px,#819902 45px,#859901 60px,#8a9900 75px,#8d9900 90px,#919900 105px,#959900 120px,#999900 135px,#999500 150px,#999100 165px,#998e00 180px,#998a00 195px,#998700 210px,#998400 225px,#998200 232px)"></div><div style="top:76px;height:4px;background:linear-gradient(90deg,#769905 0px,#7a9904 15px,#7e9903 30px,#829902 45px,#869902 60px,#8a9901 75px,#8e9900 90px,#929900 105px,#969900 120px,#999800 135px,#999400 150px,#999100 165px,#998d00 180px,#998900 195px,#998600 210px,#998300 225px,#998100 232px)"></div><div style="top:80px;height:4px;background:linear-gradient(90deg,#779905 0px,#7b9904 15px,#7f9904 30px,#839903 45px,#879902 60px,#8b9901 75px,#8f9900 90px,#939900 105px,#979900 120px,#999700 135px,#999300 150px,#999000 165px,#998c00 180px,#998900 195px,#998500 210px,#998200 225px,#998000 232px)"></div><div style="top:84px;height:4px;background:linear-gradient(90deg,#789906 0px,#7c9905 15px,#809904 30px,#849903 45px,#889902 60px,#8c9901 75px,#909901 90px,#949900 105px,#989900 120px,#999600 135px,#999200 150px,#998f00 165px,#998b00 180px,#998800 195px,#998400 210px,#998100 225px,#998000 232px)"></div><div style="top:88px;height:4px;background:linear-gradient(90deg,#789906 0px,#7c9905 15px,#809904 30px,#849904 45px,#889903 60px,#8d9902 75px,#919901 90px,#959900 105px,#999900 120px,#999500 135px,#999100 150px,#998e00 165px,#998a00 180px,#998700 195px,#998400 210px,#998000 225px,#997f00 232px)"></div><div style="top:92px;height:4px;background:linear-gradient(90deg,#799906 0px,#7d9906 15px,#819905 30px,#859904 45px,#899903 60px,#8d9902 75px,#929901 90px,#969900 105px,#999800 120px,#999400 135px,#999000 150px,#998d00 165px,#998900 180px,#998600 195px,#998300 210px,#998000 225px,#997e00 232px)"></div><div style="top:96px;height:4px;background:linear-gradient(90deg,#7a9907 0px,#7e9906 15px,#829905 30px,#869904 45px,#8a9903 60px,#8e9903 75px,#929902 90px,#979901 105px,#999700 120px,#999300 135px,#999000 150px,#998c00 165px,#998800 180px,#998500 195px,#998200 210px,#997f00 225px,#997d00 232px)"></div><div style="top:100px;height:4px;background:linear-gradient(90deg,#7a9907 0px,#7e9906 15px,#839906 30px,#879905 45px,#8b9904 60px,#8f9903 75px,#939902 90px,#989901 105px,#999600 120px,#999200 135px,#998f00 150px,#998b00 165px,#998800 180px,#998400 195px,#998100 210px,#997e00 225px,#997d00 232px)"></div><div style="top:104px;height:4px;background:linear-gradient(90deg,#7b9908 0px,#7f9907 15px,#839906 30px,#879905 45px,#8c9904 60px,#909903 75px,#949902 90px,#989901 105px,#999501 120px,#999100 135px,#998e00 150px,#998a00 165px,#998700 180px,#998300 195px,#998000 210px,#997d00 225px,#997c00 232px)"></div><div style="top:108px;height:4px;background:linear-gradient(90deg,#7c9908 0px,#809907 15px,#849906 30px,#889905 45px,#8c9905 60px,#919904 75px,#959903 90px,#999902 105px,#999401 120px,#999000 135px,#998d00 150px,#998900 165px,#998600 180px,#998300 195px,#997f00 210px,#997c00 225px,#997b00 232px)"></div><div style="top:112px;height:4px;background:linear-gradient(90deg,#7d9908 0px,#819908 15px,#859907 30px,#899906 45px,#8d9905 60px,#919904 75px,#969903 90px,#999802 105px,#999401 120px,#999000 135px,#998c00 150px,#998800 165px,#998500 180px,#998200 195px,#997f00 210px,#997c00 225px,#997a00 232px)"></div><div style="top:116px;height:4px;background:linear-gradient(90deg,#7d9909 0px,#819908 15px,#869907 30px,#8a9906 45px,#8e9905 60px,#929904 75px,#979904 90px,#999703 105px,#999302 120px,#998f01 135px,#998b00 150px,#998800 165px,#998400 180px,#998100 195px,#997e00 210px,#997b00 225px,#997900 232px)"></div><div style="top:120px;height:4px;background:linear-gradient(90deg,#7e9909 0px,#829908 15px,#869907 30px,#8b9907 45px,#8f9906 60px,#939905 75px,#979904 90px,#999603 105px,#999202 120px,#998e01 135px,#998a00 150px,#998700 165px,#998300 180px,#998000 195px,#997d00 210px,#997a00 225px,#997900 232px)"></div><div style="top:124px;height:4px;background:linear-gradient(90deg,#7f990a 0px,#839909 15px,#879908 30px,#8b9907 45px,#909906 60px,#949905 75px,#989904 90px,#999503 105px,#999102 120px,#998d01 135px,#998901 150px,#998600 165px,#998300 180px,#997f00 195px,#997c00 210px,#997900 225px,#997800 232px)"></div><div style="top:128px;height:4px;background:linear-gradient(90deg,#80990a 0px,#849909 15px,#889908 30px,#8c9907 45px,#909906 60px,#959906 75px,#999905 90px,#999504 105px,#999003 120px,#998c02 135px,#998901 150px,#998500 165px,#998200 180px,#997f00 195px,#997c00 210px,#997900 225px,#997700 232px)"></div><div style="top:132px;height:4px;background:linear-gradient(90deg,#80990a 0px,#849909 15px,#899909 30px,#8d9908 45px,#919907 60px,#969906 75px,#999805 90px,#999404 105px,#999003 120px,#998c02 135px,#998801 150px,#998400 165px,#998100 180px,#997e00 195px,#997b00 210px,#997800 225px,#997600 232px)"></div><div style="top:136px;height:4px;background:linear-gradient(90deg,#81990b 0px,#85990a 15px,#899909 30px,#8e9908 45px,#929907 60px,#969906 75px,#999705 90px,#999304 105px,#998f03 120px,#998b02 135px,#998702 150px,#998401 165px,#998000 180px,#997d00 195px,#997a00 210px,#997700 225px,#997600 232px)"></div><div style="top:140px;height:4px;background:linear-gradient(90deg,#82990b 0px,#86990a 15px,#8a9909 30px,#8f9909 45px,#939908 60px,#979907 75px,#999606 90px,#999205 105px,#998e04 120px,#998a03 135px,#998602 150px,#998301 165px,#997f00 180px,#997c00 195px,#997900 210px,#997600 225px,#997500 232px)"></div><div style="top:144px;height:4px;background:linear-gradient(90deg,#83990c 0px,#87990b 15px,#8b990a 30px,#8f9909 45px,#949908 60px,#989907 75px,#999506 90px,#999105 105px,#998d04 120px,#998903 135px,#998602 150px,#998201 165px,#997f01 180px,#997b00 195px,#997900 210px,#997600 225px,#997400 232px)"></div><div style="top:148px;height:4px;background:linear-gradient(90deg,#83990c 0px,#88990b 15px,#8c990a 30px,#909909 45px,#959908 60px,#999908 75px,#999507 90px,#999005 105px,#998c04 120px,#998904 135px,#998503 150px,#998102 165px,#997e01 180px,#997b00 195px,#997800 210px,#997500 225px,#997400 232px)"></div><div style="top:152px;height:4px;background:linear-gradient(90deg,#84990c 0px,#88990c 15px,#8d990b 30px,#91990a 45px,#959909 60px,#999808 75px,#999407 90px,#999006 105px,#998c05 120px,#998804 135px,#998403 150px,#998102 165px,#997d01 180px,#997a00 195px,#997700 210px,#997400 225px,#997300 232px)"></div><div style="top:156px;height:4px;background:linear-gradient(90deg,#85990d 0px,#89990c 15px,#8d990b 30px,#92990a 45px,#969909 60px,#999708 75px,#999307 90px,#998f06 105px,#998b05 120px,#998704 135px,#998303 150px,#998002 165px,#997d02 180px,#997901 195px,#997600 210px,#997300 225px,#997200 232px)"></div><div style="top:160px;height:4px;background:linear-gradient(90deg,#86990d 0px,#8a990c 15px,#8e990b 30px,#93990b 45px,#97990a 60px,#999609 75px,#999208 90px,#998e07 105px,#998a06 120px,#998605 135px,#998304 150px,#997f03 165px,#997c02 180px,#997901 195px,#997600 210px,#997300 225px,#997100 232px)"></div><div style="top:164px;height:4px;background:linear-gradient(90deg,#86990e 0px,#8b990d 15px,#8f990c 30px,#94990b 45px,#98990a 60px,#999609 75px,#999108 90px,#998d07 105px,#998906 120px,#998605 135px,#998204 150px,#997f03 165px,#997b02 180px,#997801 195px,#997501 210px,#997200 225px,#997100 232px)"></div><div style="top:168px;height:4px;background:linear-gradient(90deg,#87990e 0px,#8c990d 15px,#90990c 30px,#94990b 45px,#99990b 60px,#999509 75px,#999008 90px,#998c07 105px,#998806 120px,#998505 135px,#998104 150px,#997e03 165px,#997b02 180px,#997702 195px,#997401 210px,#997100 225px,#997000 232px)"></div><div style="top:172px;height:4px;background:linear-gradient(90deg,#88990e 0px,#8c990e 15px,#91990d 30px,#95990c 45px,#99980b 60px,#99940a 75px,#999009 90px,#998c08 105px,#998807 120px,#998406 135px,#998005 150px,#997d04 165px,#997a03 180px,#997702 195px,#997401 210px,#997100 225px,#996f00 232px)"></div><div style="top:176px;height:4px;background:linear-gradient(90deg,#89990f 0px,#8d990e 15px,#92990d 30px,#96990c 45px,#99970b 60px,#99930a 75px,#998f09 90px,#998b08 105px,#998707 120px,#998306 135px,#998005 150px,#997c04 165px,#997903 180px,#997602 195px,#997301 210px,#997001 225px,#996f00 232px)"></div><div style="top:180px;height:4px;background:linear-gradient(90deg,#8a990f 0px,#8e990e 15px,#92990e 30px,#97990d 45px,#99960c 60px,#99920a 75px,#998e09 90px,#998a08 105px,#998607 120px,#998306 135px,#997f05 150px,#997c04 165px,#997803 180px,#997503 195px,#997202 210px,#996f01 225px,#996e01 232px)"></div><div style="top:184px;height:4px;background:linear-gradient(90deg,#8a9910 0px,#8f990f 15px,#93990e 30px,#98990d 45px,#99960c 60px,#99910b 75px,#998d0a 90px,#998909 105px,#998508 120px,#998207 135px,#997e06 150px,#997b05 165px,#997804 180px,#997503 195px,#997202 210px,#996f01 225px,#996e01 232px)"></div><div style="top:188px;height:4px;background:linear-gradient(90deg,#8b9910 0px,#90990f 15px,#94990f 30px,#99990e 45px,#99950c 60px,#99900b 75px,#998c0a 90px,#998809 105px,#998508 120px,#998107 135px,#997e06 150px,#997a05 165px,#997704 180px,#997403 195px,#997102 210px,#996e02 225px,#996d01 232px)"></div><div style="top:192px;height:3px;background:linear-gradient(90deg,#8c9911 0px,#909910 15px,#95990f 30px,#99980e 45px,#99940d 60px,#99900c 75px,#998c0a 90px,#998809 105px,#998408 120px,#998007 135px,#997d06 150px,#997a05 165px,#997604 180px,#997303 195px,#997103 210px,#996e02 225px,#996c01 232px)"></div></div><div class="a rows" style="left:1603px;top:155px;width:232px;height:195px;clip-path:polygon(1132.53px 767.40px,-436.57px -266.70px,-1128.82px 1801.50px)"><div style="top:0px;height:4px;background:linear-gradient(90deg,#afff00 0px,#b5ff00 15px,#baff00 30px,#bfff00 45px,#c5ff00 60px,#cbff00 75px,#d0ff00 90px,#d6ff00 105px,#dcff00 120px,#e2ff00 135px,#e8ff00 150px,#eeff00 165px,#f5ff00 180px,#fbff00 195px,#fffc00 210px,#fff600 225px,#fff300 232px)"></div><div style="top:4px;height:4px;background:linear-gradient(90deg,#b1ff00 0px,#b6ff00 15px,#bbff00 30px,#c1ff00 45px,#c6ff00 60px,#ccff00 75px,#d2ff00 90px,#d8ff00 105px,#ddff00 120px,#e3ff00 135px,#eaff00 150px,#f0ff00 165px,#f6ff00 180px,#fdff00 195px,#fffb00 210px,#fff500 225px,#fff200 232px)"></div><div style="top:8px;height:4px;background:linear-gradient(90deg,#b2ff00 0px,#b7ff00 15px,#bdff00 30px,#c2ff00 45px,#c8ff00 60px,#cdff00 75px,#d3ff00 90px,#d9ff00 105px,#dfff00 120px,#e5ff00 135px,#ebff00 150px,#f1ff00 165px,#f8ff00 180px,#feff00 195px,#fff900 210px,#fff300 225px,#fff000 232px)"></div><div style="top:12px;height:4px;background:linear-gradient(90deg,#b3ff00 0px,#b9ff00 15px,#beff00 30px,#c4ff00 45px,#c9ff00 60px,#cfff00 75px,#d5ff00 90px,#dbff00 105px,#e1ff00 120px,#e7ff00 135px,#edff00 150px,#f3ff00 165px,#f9ff00 180px,#fffe00 195px,#fff800 210px,#fff100 225px,#ffef00 232px)"></div><div style="top:16px;height:4px;background:linear-gradient(90deg,#b5ff00 0px,#baff00 15px,#c0ff00 30px,#c5ff00 45px,#cbff00 60px,#d0ff00 75px,#d6ff00 90px,#dcff00 105px,#e2ff00 120px,#e8ff00 135px,#eeff00 150px,#f5ff00 165px,#fbff00 180px,#fffc00 195px,#fff600 210px,#fff000 225px,#ffed00 232px)"></div><div style="top:20px;height:4px;background:linear-gradient(90deg,#b6ff00 0px,#bcff00 15px,#c1ff00 30px,#c6ff00 45px,#ccff00 60px,#d2ff00 75px,#d8ff00 90px,#deff00 105px,#e4ff00 120px,#eaff00 135px,#f0ff00 150px,#f6ff00 165px,#fdff00 180px,#fffb00 195px,#fff400 210px,#ffee00 225px,#ffeb00 232px)"></div><div style="top:24px;height:4px;background:linear-gradient(90deg,#b7ff01 0px,#bdff00 15px,#c2ff00 30px,#c8ff00 45px,#ceff00 60px,#d3ff00 75px,#d9ff00 90px,#dfff00 105px,#e5ff00 120px,#ebff00 135px,#f2ff00 150px,#f8ff00 165px,#feff00 180px,#fff900 195px,#fff300 210px,#ffed00 225px,#ffea00 232px)"></div><div style="top:28px;height:4px;background:linear-gradient(90deg,#b8ff01 0px,#beff00 15px,#c4ff00 30px,#c9ff00 45px,#cfff00 60px,#d5ff00 75px,#dbff00 90px,#e1ff00 105px,#e7ff00 120px,#edff00 135px,#f3ff00 150px,#faff00 165px,#fffe00 180px,#fff700 195px,#fff100 210px,#ffeb00 225px,#ffe800 232px)"></div><div style="top:32px;height:4px;background:linear-gradient(90deg,#b9ff02 0px,#bfff00 15px,#c5ff00 30px,#cbff00 45px,#d0ff00 60px,#d6ff00 75px,#dcff00 90px,#e2ff00 105px,#e8ff00 120px,#eeff00 135px,#f5ff00 150px,#fbff00 165px,#fffc00 180px,#fff600 195px,#fff000 210px,#ffea00 225px,#ffe700 232px)"></div><div style="top:36px;height:4px;background:linear-gradient(90deg,#baff02 0px,#c0ff01 15px,#c7ff00 30px,#ccff00 45px,#d2ff00 60px,#d8ff00 75px,#deff00 90px,#e4ff00 105px,#eaff00 120px,#f0ff00 135px,#f6ff00 150px,#fdff00 165px,#fffb00 180px,#fff400 195px,#ffee00 210px,#ffe800 225px,#ffe600 232px)"></div><div style="top:40px;height:4px;background:linear-gradient(90deg,#bbff03 0px,#c2ff02 15px,#c8ff00 30px,#ceff00 45px,#d3ff00 60px,#d9ff00 75px,#dfff00 90px,#e5ff00 105px,#ebff00 120px,#f2ff00 135px,#f8ff00 150px,#ffff00 165px,#fff900 180px,#fff300 195px,#ffed00 210px,#ffe700 225px,#ffe400 232px)"></div><div style="top:44px;height:4px;background:linear-gradient(90deg,#bcff04 0px,#c3ff02 15px,#c9ff01 30px,#cfff00 45px,#d5ff00 60px,#dbff00 75px,#e1ff00 90px,#e7ff00 105px,#edff00 120px,#f3ff00 135px,#faff00 150px,#fffe00 165px,#fff700 180px,#fff100 195px,#ffeb00 210px,#ffe500 225px,#ffe300 232px)"></div><div style="top:48px;height:4px;background:linear-gradient(90deg,#bdff04 0px,#c4ff03 15px,#caff01 30px,#d1ff00 45px,#d6ff00 60px,#dcff00 75px,#e2ff00 90px,#e8ff00 105px,#efff00 120px,#f5ff00 135px,#fbff00 150px,#fffc00 165px,#fff600 180px,#fff000 195px,#ffea00 210px,#ffe400 225px,#ffe100 232px)"></div><div style="top:52px;height:4px;background:linear-gradient(90deg,#bfff05 0px,#c5ff03 15px,#cbff02 30px,#d2ff00 45px,#d8ff00 60px,#deff00 75px,#e4ff00 90px,#eaff00 105px,#f0ff00 120px,#f7ff00 135px,#fdff00 150px,#fffa00 165px,#fff400 180px,#ffee00 195px,#ffe800 210px,#ffe200 225px,#ffe000 232px)"></div><div style="top:56px;height:4px;background:linear-gradient(90deg,#c0ff05 0px,#c6ff04 15px,#ccff02 30px,#d3ff01 45px,#d9ff00 60px,#dfff00 75px,#e5ff00 90px,#ecff00 105px,#f2ff00 120px,#f8ff00 135px,#ffff00 150px,#fff900 165px,#fff300 180px,#ffed00 195px,#ffe700 210px,#ffe100 225px,#ffde00 232px)"></div><div style="top:60px;height:4px;background:linear-gradient(90deg,#c1ff06 0px,#c7ff04 15px,#ceff03 30px,#d4ff02 45px,#dbff00 60px,#e1ff00 75px,#e7ff00 90px,#edff00 105px,#f3ff00 120px,#faff00 135px,#fffe00 150px,#fff700 165px,#fff100 180px,#ffeb00 195px,#ffe500 210px,#ffe000 225px,#ffdd00 232px)"></div><div style="top:64px;height:4px;background:linear-gradient(90deg,#c2ff06 0px,#c8ff05 15px,#cfff04 30px,#d5ff02 45px,#dcff01 60px,#e2ff00 75px,#e9ff00 90px,#efff00 105px,#f5ff00 120px,#fcff00 135px,#fffc00 150px,#fff600 165px,#ffef00 180px,#ffe900 195px,#ffe400 210px,#ffde00 225px,#ffdc00 232px)"></div><div style="top:68px;height:4px;background:linear-gradient(90deg,#c3ff07 0px,#c9ff06 15px,#d0ff04 30px,#d7ff03 45px,#ddff01 60px,#e4ff00 75px,#eaff00 90px,#f0ff00 105px,#f7ff00 120px,#fdff00 135px,#fffa00 150px,#fff400 165px,#ffee00 180px,#ffe800 195px,#ffe200 210px,#ffdd00 225px,#ffda00 232px)"></div><div style="top:72px;height:4px;background:linear-gradient(90deg,#c4ff08 0px,#cbff06 15px,#d1ff05 30px,#d8ff03 45px,#deff02 60px,#e5ff01 75px,#ecff00 90px,#f2ff00 105px,#f8ff00 120px,#ffff00 135px,#fff900 150px,#fff200 165px,#ffec00 180px,#ffe700 195px,#ffe100 210px,#ffdb00 225px,#ffd900 232px)"></div><div style="top:76px;height:4px;background:linear-gradient(90deg,#c5ff08 0px,#ccff07 15px,#d2ff05 30px,#d9ff04 45px,#e0ff03 60px,#e7ff01 75px,#edff00 90px,#f4ff00 105px,#faff00 120px,#fffd00 135px,#fff700 150px,#fff100 165px,#ffeb00 180px,#ffe500 195px,#ffdf00 210px,#ffda00 225px,#ffd700 232px)"></div><div style="top:80px;height:4px;background:linear-gradient(90deg,#c6ff09 0px,#cdff07 15px,#d3ff06 30px,#daff05 45px,#e1ff03 60px,#e8ff02 75px,#efff00 90px,#f5ff00 105px,#fcff00 120px,#fffc00 135px,#fff500 150px,#ffef00 165px,#ffe900 180px,#ffe400 195px,#ffde00 210px,#ffd900 225px,#ffd600 232px)"></div><div style="top:84px;height:4px;background:linear-gradient(90deg,#c7ff0a 0px,#ceff08 15px,#d5ff07 30px,#dbff05 45px,#e2ff04 60px,#e9ff02 75px,#f0ff01 90px,#f7ff00 105px,#fdff00 120px,#fffa00 135px,#fff400 150px,#ffee00 165px,#ffe800 180px,#ffe200 195px,#ffdd00 210px,#ffd700 225px,#ffd500 232px)"></div><div style="top:88px;height:4px;background:linear-gradient(90deg,#c9ff0a 0px,#cfff09 15px,#d6ff07 30px,#ddff06 45px,#e3ff04 60px,#eaff03 75px,#f1ff01 90px,#f8ff00 105px,#ffff00 120px,#fff900 135px,#fff200 150px,#ffec00 165px,#ffe600 180px,#ffe100 195px,#ffdb00 210px,#ffd600 225px,#ffd300 232px)"></div><div style="top:92px;height:4px;background:linear-gradient(90deg,#caff0b 0px,#d0ff09 15px,#d7ff08 30px,#deff06 45px,#e5ff05 60px,#ecff04 75px,#f3ff02 90px,#faff01 105px,#fffd00 120px,#fff700 135px,#fff100 150px,#ffeb00 165px,#ffe500 180px,#ffdf00 195px,#ffda00 210px,#ffd500 225px,#ffd200 232px)"></div><div style="top:96px;height:4px;background:linear-gradient(90deg,#cbff0b 0px,#d2ff0a 15px,#d8ff09 30px,#dfff07 45px,#e6ff06 60px,#edff04 75px,#f4ff03 90px,#fbff01 105px,#fffc00 120px,#fff500 135px,#ffef00 150px,#ffe900 165px,#ffe300 180px,#ffde00 195px,#ffd800 210px,#ffd300 225px,#ffd100 232px)"></div><div style="top:100px;height:4px;background:linear-gradient(90deg,#ccff0c 0px,#d3ff0b 15px,#daff09 30px,#e0ff08 45px,#e7ff06 60px,#eeff05 75px,#f5ff03 90px,#fdff02 105px,#fffa00 120px,#fff400 135px,#ffee00 150px,#ffe800 165px,#ffe200 180px,#ffdd00 195px,#ffd700 210px,#ffd200 225px,#ffd000 232px)"></div><div style="top:104px;height:4px;background:linear-gradient(90deg,#cdff0d 0px,#d4ff0b 15px,#dbff0a 30px,#e2ff08 45px,#e9ff07 60px,#f0ff05 75px,#f7ff04 90px,#feff02 105px,#fff901 120px,#fff200 135px,#ffec00 150px,#ffe600 165px,#ffe100 180px,#ffdb00 195px,#ffd600 210px,#ffd100 225px,#ffce00 232px)"></div><div style="top:108px;height:4px;background:linear-gradient(90deg,#ceff0d 0px,#d5ff0c 15px,#dcff0a 30px,#e3ff09 45px,#eaff08 60px,#f1ff06 75px,#f8ff05 90px,#ffff03 105px,#fff702 120px,#fff100 135px,#ffeb00 150px,#ffe500 165px,#ffdf00 180px,#ffda00 195px,#ffd400 210px,#ffcf00 225px,#ffcd00 232px)"></div><div style="top:112px;height:4px;background:linear-gradient(90deg,#d0ff0e 0px,#d6ff0d 15px,#ddff0b 30px,#e4ff0a 45px,#ebff08 60px,#f2ff07 75px,#faff05 90px,#fffd04 105px,#fff602 120px,#ffef01 135px,#ffe900 150px,#ffe300 165px,#ffde00 180px,#ffd800 195px,#ffd300 210px,#ffce00 225px,#ffcc00 232px)"></div><div style="top:116px;height:4px;background:linear-gradient(90deg,#d1ff0f 0px,#d8ff0d 15px,#dfff0c 30px,#e6ff0a 45px,#edff09 60px,#f4ff07 75px,#fbff06 90px,#fffc04 105px,#fff503 120px,#ffee01 135px,#ffe800 150px,#ffe200 165px,#ffdc00 180px,#ffd700 195px,#ffd200 210px,#ffcd00 225px,#ffca00 232px)"></div><div style="top:120px;height:4px;background:linear-gradient(90deg,#d2ff0f 0px,#d9ff0e 15px,#e0ff0c 30px,#e7ff0b 45px,#eeff09 60px,#f5ff08 75px,#fcff07 90px,#fffa05 105px,#fff303 120px,#ffed02 135px,#ffe600 150px,#ffe000 165px,#ffdb00 180px,#ffd600 195px,#ffd000 210px,#ffcb00 225px,#ffc900 232px)"></div><div style="top:124px;height:4px;background:linear-gradient(90deg,#d3ff10 0px,#daff0e 15px,#e1ff0d 30px,#e8ff0c 45px,#efff0a 60px,#f7ff09 75px,#feff07 90px,#fff906 105px,#fff204 120px,#ffeb02 135px,#ffe501 150px,#ffdf00 165px,#ffda00 180px,#ffd400 195px,#ffcf00 210px,#ffca00 225px,#ffc800 232px)"></div><div style="top:128px;height:4px;background:linear-gradient(90deg,#d5ff11 0px,#dbff0f 15px,#e2ff0e 30px,#eaff0c 45px,#f1ff0b 60px,#f8ff09 75px,#ffff08 90px,#fff806 105px,#fff105 120px,#ffea03 135px,#ffe401 150px,#ffde00 165px,#ffd800 180px,#ffd300 195px,#ffce00 210px,#ffc900 225px,#ffc700 232px)"></div><div style="top:132px;height:4px;background:linear-gradient(90deg,#d6ff11 0px,#ddff10 15px,#e4ff0e 30px,#ebff0d 45px,#f2ff0b 60px,#f9ff0a 75px,#fffd08 90px,#fff607 105px,#ffef05 120px,#ffe904 135px,#ffe202 150px,#ffdc01 165px,#ffd700 180px,#ffd200 195px,#ffcd00 210px,#ffc800 225px,#ffc500 232px)"></div><div style="top:136px;height:4px;background:linear-gradient(90deg,#d7ff12 0px,#deff10 15px,#e5ff0f 30px,#ecff0e 45px,#f3ff0c 60px,#fbff0b 75px,#fffc09 90px,#fff507 105px,#ffee06 120px,#ffe704 135px,#ffe103 150px,#ffdb01 165px,#ffd600 180px,#ffd000 195px,#ffcb00 210px,#ffc600 225px,#ffc400 232px)"></div><div style="top:140px;height:4px;background:linear-gradient(90deg,#d8ff13 0px,#dfff11 15px,#e6ff10 30px,#eeff0e 45px,#f5ff0d 60px,#fcff0b 75px,#fffa0a 90px,#fff308 105px,#ffed06 120px,#ffe605 135px,#ffe003 150px,#ffda02 165px,#ffd400 180px,#ffcf00 195px,#ffca00 210px,#ffc500 225px,#ffc300 232px)"></div><div style="top:144px;height:4px;background:linear-gradient(90deg,#daff13 0px,#e1ff12 15px,#e8ff10 30px,#efff0f 45px,#f6ff0d 60px,#feff0c 75px,#fff90a 90px,#fff209 105px,#ffeb07 120px,#ffe505 135px,#ffdf04 150px,#ffd902 165px,#ffd301 180px,#ffce00 195px,#ffc900 210px,#ffc400 225px,#ffc200 232px)"></div><div style="top:148px;height:4px;background:linear-gradient(90deg,#dbff14 0px,#e2ff13 15px,#e9ff11 30px,#f0ff10 45px,#f8ff0e 60px,#ffff0d 75px,#fff80b 90px,#fff109 105px,#ffea07 120px,#ffe406 135px,#ffdd04 150px,#ffd803 165px,#ffd201 180px,#ffcd00 195px,#ffc800 210px,#ffc300 225px,#ffc100 232px)"></div><div style="top:152px;height:4px;background:linear-gradient(90deg,#dcff15 0px,#e3ff13 15px,#eaff12 30px,#f2ff10 45px,#f9ff0f 60px,#fffe0d 75px,#fff60b 90px,#ffef0a 105px,#ffe908 120px,#ffe206 135px,#ffdc05 150px,#ffd603 165px,#ffd102 180px,#ffcb01 195px,#ffc600 210px,#ffc200 225px,#ffbf00 232px)"></div><div style="top:156px;height:4px;background:linear-gradient(90deg,#ddff15 0px,#e5ff14 15px,#ecff12 30px,#f3ff11 45px,#faff10 60px,#fffc0e 75px,#fff50c 90px,#ffee0a 105px,#ffe709 120px,#ffe107 135px,#ffdb05 150px,#ffd504 165px,#ffd003 180px,#ffca01 195px,#ffc500 210px,#ffc000 225px,#ffbe00 232px)"></div><div style="top:160px;height:4px;background:linear-gradient(90deg,#dfff16 0px,#e6ff15 15px,#edff13 30px,#f4ff12 45px,#fcff10 60px,#fffb0e 75px,#fff30d 90px,#ffed0b 105px,#ffe609 120px,#ffe008 135px,#ffda06 150px,#ffd404 165px,#ffce03 180px,#ffc902 195px,#ffc400 210px,#ffbf00 225px,#ffbd00 232px)"></div><div style="top:164px;height:4px;background:linear-gradient(90deg,#e0ff17 0px,#e7ff15 15px,#efff14 30px,#f6ff12 45px,#fdff11 60px,#fff90f 75px,#fff20d 90px,#ffeb0b 105px,#ffe50a 120px,#ffdf08 135px,#ffd907 150px,#ffd305 165px,#ffcd04 180px,#ffc802 195px,#ffc301 210px,#ffbe00 225px,#ffbc00 232px)"></div><div style="top:168px;height:4px;background:linear-gradient(90deg,#e1ff17 0px,#e9ff16 15px,#f0ff15 30px,#f7ff13 45px,#ffff12 60px,#fff810 75px,#fff10e 90px,#ffea0c 105px,#ffe30a 120px,#ffdd09 135px,#ffd707 150px,#ffd206 165px,#ffcc04 180px,#ffc703 195px,#ffc201 210px,#ffbd00 225px,#ffbb00 232px)"></div><div style="top:172px;height:4px;background:linear-gradient(90deg,#e3ff18 0px,#eaff17 15px,#f1ff15 30px,#f9ff14 45px,#fffe12 60px,#fff610 75px,#ffef0e 90px,#ffe90d 105px,#ffe20b 120px,#ffdc09 135px,#ffd608 150px,#ffd006 165px,#ffcb05 180px,#ffc603 195px,#ffc102 210px,#ffbc01 225px,#ffba00 232px)"></div><div style="top:176px;height:4px;background:linear-gradient(90deg,#e4ff19 0px,#ebff17 15px,#f3ff16 30px,#faff15 45px,#fffc13 60px,#fff511 75px,#ffee0f 90px,#ffe70d 105px,#ffe10b 120px,#ffdb0a 135px,#ffd508 150px,#ffcf07 165px,#ffca05 180px,#ffc504 195px,#ffc002 210px,#ffbb01 225px,#ffb901 232px)"></div><div style="top:180px;height:4px;background:linear-gradient(90deg,#e5ff1a 0px,#edff18 15px,#f4ff17 30px,#fcff15 45px,#fffb13 60px,#fff411 75px,#ffed10 90px,#ffe60e 105px,#ffe00c 120px,#ffda0a 135px,#ffd409 150px,#ffce07 165px,#ffc906 180px,#ffc404 195px,#ffbf03 210px,#ffba02 225px,#ffb801 232px)"></div><div style="top:184px;height:4px;background:linear-gradient(90deg,#e7ff1a 0px,#eeff19 15px,#f6ff17 30px,#fdff16 45px,#fff914 60px,#fff212 75px,#ffeb10 90px,#ffe50e 105px,#ffde0d 120px,#ffd80b 135px,#ffd309 150px,#ffcd08 165px,#ffc806 180px,#ffc205 195px,#ffbe03 210px,#ffb902 225px,#ffb702 232px)"></div><div style="top:188px;height:4px;background:linear-gradient(90deg,#e8ff1b 0px,#f0ff1a 15px,#f7ff18 30px,#ffff17 45px,#fff815 60px,#fff113 75px,#ffea11 90px,#ffe30f 105px,#ffdd0d 120px,#ffd70b 135px,#ffd10a 150px,#ffcc08 165px,#ffc607 180px,#ffc105 195px,#ffbc04 210px,#ffb803 225px,#ffb602 232px)"></div><div style="top:192px;height:3px;background:linear-gradient(90deg,#e9ff1c 0px,#f1ff1a 15px,#f8ff19 30px,#fffe17 45px,#fff715 60px,#fff013 75px,#ffe911 90px,#ffe20f 105px,#ffdc0e 120px,#ffd60c 135px,#ffd00a 150px,#ffcb09 165px,#ffc507 180px,#ffc006 195px,#ffbc04 210px,#ffb703 225px,#ffb502 232px)"></div></div><div class="a" style="left:1419.4px;top:436.4px;width:15px;height:15px;border:2px solid rgba(255,255,255,0.78);background:rgba(255,255,255,0.12)"></div><div class="a" style="left:1437.5px;top:413.7px;width:15px;height:15px;border:2px solid rgba(255,255,255,0.78);background:rgba(255,255,255,0.12)"></div><div class="a" style="left:1454.6px;top:392.2px;width:15px;height:15px;border:2px solid rgba(255,255,255,0.78);background:rgba(255,255,255,0.12)"></div><div class="a" style="left:1470.8px;top:372.0px;width:15px;height:15px;border:2px solid rgba(255,255,255,0.78);background:rgba(255,255,255,0.12)"></div><div class="a" style="left:1489.2px;top:349.0px;width:15px;height:15px;border:2px solid #fff;background:transparent"></div><div class="a" style="left:1455.5px;top:457.1px;width:15px;height:15px;border:2px solid rgba(255,255,255,0.78);background:rgba(255,255,255,0.12)"></div><div class="a" style="left:1508.5px;top:457.1px;width:15px;height:15px;border:2px solid rgba(255,255,255,0.78);background:rgba(255,255,255,0.12)"></div><div class="a" style="left:1557.9px;top:457.1px;width:15px;height:15px;border:2px solid rgba(255,255,255,0.78);background:rgba(255,255,255,0.12)"></div><div class="a" style="left:1609.5px;top:457.1px;width:15px;height:15px;border:2px solid rgba(255,255,255,0.78);background:rgba(255,255,255,0.12)"></div><div class="a" style="left:1669.0px;top:457.1px;width:15px;height:15px;border:2px solid #fff;background:transparent"></div><div class="a" style="left:1398.2px;top:422.1px;width:15px;height:15px;border:2px solid rgba(255,255,255,0.78);background:rgba(255,255,255,0.12)"></div><div class="a" style="left:1396.4px;top:390.5px;width:15px;height:15px;border:2px solid rgba(255,255,255,0.78);background:rgba(255,255,255,0.12)"></div><div class="a" style="left:1393.5px;top:358.1px;width:15px;height:15px;border:2px solid rgba(255,255,255,0.78);background:rgba(255,255,255,0.12)"></div><div class="a" style="left:1392.3px;top:324.5px;width:15px;height:15px;border:2px solid rgba(255,255,255,0.78);background:rgba(255,255,255,0.12)"></div><div class="a" style="left:1389.5px;top:288.1px;width:15px;height:15px;border:2px solid #fff;background:transparent"></div><div class="a" style="left:1373.7px;top:491.5px;width:15px;height:15px;border:2px solid rgba(255,255,255,0.78);background:rgba(255,255,255,0.12)"></div><div class="a" style="left:1347.4px;top:525.0px;width:15px;height:15px;border:2px solid rgba(255,255,255,0.78);background:rgba(255,255,255,0.12)"></div><div class="a" style="left:1321.5px;top:556.2px;width:15px;height:15px;border:2px solid rgba(255,255,255,0.78);background:rgba(255,255,255,0.12)"></div><div class="a" style="left:1295.4px;top:588.2px;width:15px;height:15px;border:2px solid rgba(255,255,255,0.78);background:rgba(255,255,255,0.12)"></div><div class="a" style="left:1266.3px;top:624.9px;width:15px;height:15px;border:2px solid #fff;background:transparent"></div><div class="a" style="left:1385.5px;top:457.9px;width:15px;height:15px;border:2px solid rgba(255,255,255,0.78);background:rgba(255,255,255,0.12)"></div><div class="a" style="left:1371.5px;top:457.9px;width:15px;height:15px;border:2px solid rgba(255,255,255,0.78);background:rgba(255,255,255,0.12)"></div><div class="a" style="left:1356.5px;top:457.9px;width:15px;height:15px;border:2px solid rgba(255,255,255,0.78);background:rgba(255,255,255,0.12)"></div><div class="a" style="left:1342.5px;top:457.9px;width:15px;height:15px;border:2px solid rgba(255,255,255,0.78);background:rgba(255,255,255,0.12)"></div><div class="a" style="left:1327.5px;top:457.9px;width:15px;height:15px;border:2px solid #fff;background:transparent"></div><div class="a" style="left:1402.5px;top:480.0px;width:15px;height:15px;border:2px solid rgba(255,255,255,0.78);background:rgba(255,255,255,0.12)"></div><div class="a" style="left:1403.9px;top:502.9px;width:15px;height:15px;border:2px solid rgba(255,255,255,0.78);background:rgba(255,255,255,0.12)"></div><div class="a" style="left:1403.9px;top:521.7px;width:15px;height:15px;border:2px solid rgba(255,255,255,0.78);background:rgba(255,255,255,0.12)"></div><div class="a" style="left:1405.8px;top:543.8px;width:15px;height:15px;border:2px solid rgba(255,255,255,0.78);background:rgba(255,255,255,0.12)"></div><div class="a" style="left:1407.1px;top:567.0px;width:15px;height:15px;border:2px solid #fff;background:transparent"></div><div class="a" style="left:1422.0px;top:440.0px;width:11px;height:11px;border:2px solid #161616;border-radius:50%;background:#b8b880"></div><div class="a" style="left:1440.6px;top:417.1px;width:11px;height:11px;border:2px solid #161616;border-radius:50%;background:#b8b880"></div><div class="a" style="left:1458.3px;top:395.5px;width:11px;height:11px;border:2px solid #161616;border-radius:50%;background:#b8b880"></div><div class="a" style="left:1474.9px;top:375.0px;width:11px;height:11px;border:2px solid #161616;border-radius:50%;background:#b8b880"></div><div class="a" style="left:1494.4px;top:351.3px;width:11px;height:11px;border:2px solid #161616;border-radius:50%;background:#a8a860"></div><div class="a" style="left:1457.5px;top:459.1px;width:11px;height:11px;border:2px solid #161616;border-radius:50%;background:#b89090"></div><div class="a" style="left:1514.5px;top:459.1px;width:11px;height:11px;border:2px solid #161616;border-radius:50%;background:#b87878"></div><div class="a" style="left:1565.5px;top:459.1px;width:11px;height:11px;border:2px solid #161616;border-radius:50%;background:#b06060"></div><div class="a" style="left:1622.2px;top:459.1px;width:11px;height:11px;border:2px solid #161616;border-radius:50%;background:#a84848"></div><div class="a" style="left:1681.5px;top:459.1px;width:11px;height:11px;border:2px solid #161616;border-radius:50%;background:transparent"></div><div class="a" style="left:1400.2px;top:426.3px;width:11px;height:11px;border:2px solid #161616;border-radius:50%;background:#a0b8a0"></div><div class="a" style="left:1398.4px;top:393.5px;width:11px;height:11px;border:2px solid #161616;border-radius:50%;background:#90b090"></div><div class="a" style="left:1395.1px;top:360.1px;width:11px;height:11px;border:2px solid #161616;border-radius:50%;background:#80a880"></div><div class="a" style="left:1394.3px;top:326.5px;width:11px;height:11px;border:2px solid #161616;border-radius:50%;background:#70a070"></div><div class="a" style="left:1391.5px;top:287.5px;width:11px;height:11px;border:2px solid #161616;border-radius:50%;background:#609860"></div><div class="a" style="left:1375.5px;top:493.5px;width:11px;height:11px;border:2px solid #161616;border-radius:50%;background:#8080b0"></div><div class="a" style="left:1347.5px;top:528.3px;width:11px;height:11px;border:2px solid #161616;border-radius:50%;background:#7070b0"></div><div class="a" style="left:1320.3px;top:561.5px;width:11px;height:11px;border:2px solid #161616;border-radius:50%;background:#6060b0"></div><div class="a" style="left:1292.8px;top:595.1px;width:11px;height:11px;border:2px solid #161616;border-radius:50%;background:#5050a8"></div><div class="a" style="left:1265.5px;top:628.2px;width:11px;height:11px;border:2px solid #161616;border-radius:50%;background:#3030a0"></div><div class="a" style="left:1386.5px;top:461.5px;width:11px;height:11px;border:2px solid #161616;border-radius:50%;background:#90b8b8"></div><div class="a" style="left:1374.1px;top:461.5px;width:11px;height:11px;border:2px solid #161616;border-radius:50%;background:#80b0b0"></div><div class="a" style="left:1358.0px;top:461.5px;width:11px;height:11px;border:2px solid #161616;border-radius:50%;background:#70b0b0"></div><div class="a" style="left:1343.5px;top:461.5px;width:11px;height:11px;border:2px solid #161616;border-radius:50%;background:#60a8a8"></div><div class="a" style="left:1327.5px;top:461.5px;width:11px;height:11px;border:2px solid #161616;border-radius:50%;background:#40a0a0"></div><div class="a" style="left:1404.5px;top:482.0px;width:11px;height:11px;border:2px solid #161616;border-radius:50%;background:#b898b0"></div><div class="a" style="left:1405.9px;top:504.9px;width:11px;height:11px;border:2px solid #161616;border-radius:50%;background:#b080b0"></div><div class="a" style="left:1407.3px;top:523.7px;width:11px;height:11px;border:2px solid #161616;border-radius:50%;background:#b070b0"></div><div class="a" style="left:1408.5px;top:545.8px;width:11px;height:11px;border:2px solid #161616;border-radius:50%;background:#b060b0"></div><div class="a" style="left:1410.2px;top:569.0px;width:11px;height:11px;border:2px solid #161616;border-radius:50%;background:#a040a0"></div><div class="a" style="left:1400.9px;top:457.9px;width:15px;height:15px;border:2px solid #111;background:transparent"></div><div class="a" style="left:1402.9px;top:459.9px;width:11px;height:11px;border:2px solid #161616;border-radius:50%;background:#fff"></div><div class="a" style="left:1709.5px;top:243.5px;width:15px;height:15px;border:2px solid rgba(255,255,230,0.9);background:transparent"></div><div class="a" style="left:1730.0px;top:247.5px;width:11px;height:11px;border:2px solid #161616;border-radius:50%;background:#b4b440"></div><div class="t" style="left:90px;top:744px;font-size:32.5px;color:#f2f2f2">Current Reading</div><div class="t" style="left:91px;top:794px;font-size:27px;color:#f2f2f2;letter-spacing:0">x: 0,4232</div><div class="t" style="left:91px;top:838px;font-size:27px;color:#f2f2f2;letter-spacing:0">y: 0,5048</div><div class="t" style="left:91px;top:882px;font-size:27px;color:#f2f2f2;letter-spacing:0">fL: 84,6</div><div class="t" style="left:91px;top:926px;font-size:27px;color:#f2f2f2;letter-spacing:0.5px">cd/m&sup2;: 289,84</div><div class="t" style="left:473px;top:731px;width:200px;text-align:center;font-size:15px;color:#ddd">RGB Balance</div><div class="a" style="left:456px;top:750px;width:266px;height:192px;background:#232323"></div><div class="a" style="left:456px;top:749px;width:266px;height:2px;background:#aaa"></div><div class="a" style="left:455px;top:750px;width:2px;height:198px;background:#aaa"></div><div class="a" style="left:721px;top:750px;width:2px;height:198px;background:#aaa"></div><div class="a" style="left:456px;top:941px;width:266px;height:2px;background:#aaa"></div><div class="a" style="left:457px;top:769px;width:264px;height:2px;background:#8e8e8e;box-shadow:0 0 0 1px #1b1b1b"></div><div class="a" style="left:451px;top:769px;width:6px;height:2px;background:#a8a8a8"></div><div class="t" style="left:409px;top:761px;width:40px;text-align:right;font-size:16px;color:#ddd">104</div><div class="a" style="left:457px;top:807px;width:264px;height:2px;background:#8e8e8e;box-shadow:0 0 0 1px #1b1b1b"></div><div class="a" style="left:451px;top:807px;width:6px;height:2px;background:#a8a8a8"></div><div class="t" style="left:409px;top:799px;width:40px;text-align:right;font-size:16px;color:#ddd">102</div><div class="a" style="left:457px;top:846px;width:264px;height:2px;background:#8e8e8e;box-shadow:0 0 0 1px #1b1b1b"></div><div class="a" style="left:451px;top:846px;width:6px;height:2px;background:#a8a8a8"></div><div class="t" style="left:409px;top:838px;width:40px;text-align:right;font-size:16px;color:#ddd">100</div><div class="a" style="left:457px;top:884px;width:264px;height:2px;background:#8e8e8e;box-shadow:0 0 0 1px #1b1b1b"></div><div class="a" style="left:451px;top:884px;width:6px;height:2px;background:#a8a8a8"></div><div class="t" style="left:409px;top:876px;width:40px;text-align:right;font-size:16px;color:#ddd">98</div><div class="a" style="left:457px;top:923px;width:264px;height:2px;background:#8e8e8e;box-shadow:0 0 0 1px #1b1b1b"></div><div class="a" style="left:451px;top:923px;width:6px;height:2px;background:#a8a8a8"></div><div class="t" style="left:409px;top:915px;width:40px;text-align:right;font-size:16px;color:#ddd">96</div><div class="a" style="left:482px;top:825px;width:70px;height:116px;background:linear-gradient(#ff5555,#ff3333);border:1px solid #111;border-bottom:none"></div><div class="a" style="left:553px;top:846px;width:70px;height:95px;background:linear-gradient(#4daa4d,#3a9a3a);border:1px solid #111;border-bottom:none"></div><div class="a" style="left:624px;top:902px;width:70px;height:39px;background:linear-gradient(#5555ff,#4444ee);border:1px solid #111;border-bottom:none"></div><div class="t" style="left:456px;top:946px;width:266px;text-align:center;font-size:15px;color:#ddd">100%</div><div class="a" style="left:743px;top:723px;width:778px;height:218px;background:#0e0e0e"></div><div class="a" style="left:745px;top:724px;width:775px;height:34px;background:linear-gradient(#303030 0%,#2c2c2c 46%,#171717 50%,#141414 100%)"></div><div class="t" style="left:960px;top:733px;width:100px;text-align:center;font-size:19px;color:#eee;transform:scaleX(1.2)">20%</div><div class="t" style="left:1073px;top:733px;width:100px;text-align:center;font-size:19px;color:#eee;transform:scaleX(1.2)">40%</div><div class="t" style="left:1186px;top:733px;width:100px;text-align:center;font-size:19px;color:#eee;transform:scaleX(1.2)">60%</div><div class="t" style="left:1300px;top:733px;width:100px;text-align:center;font-size:19px;color:#eee;transform:scaleX(1.2)">80%</div><div class="t" style="left:1413px;top:733px;width:100px;text-align:center;font-size:19px;color:#eee;transform:scaleX(1.2)">100%</div><div class="a" style="left:745px;top:758px;width:775px;height:31px;background:#424242"></div><div class="t" style="left:765px;top:764px;font-size:20px;font-weight:bold;color:#f0f0f0;transform:scaleX(1.18);transform-origin:left top">x: CIE31</div><div class="t" style="left:960px;top:764px;font-size:20px;color:#f0f0f0;transform:scaleX(1.18);transform-origin:left top">0,3351</div><div class="t" style="left:1073px;top:764px;font-size:20px;color:#f0f0f0;transform:scaleX(1.18);transform-origin:left top">0,3578</div><div class="t" style="left:1186px;top:764px;font-size:20px;color:#f0f0f0;transform:scaleX(1.18);transform-origin:left top">0,3793</div><div class="t" style="left:1300px;top:764px;font-size:20px;color:#f0f0f0;transform:scaleX(1.18);transform-origin:left top">0,3995</div><div class="t" style="left:1413px;top:764px;font-size:20px;color:#f0f0f0;transform:scaleX(1.18);transform-origin:left top">0,4232</div><div class="a" style="left:745px;top:788px;width:775px;height:31px;background:#848484"></div><div class="t" style="left:765px;top:794px;font-size:20px;font-weight:bold;color:#f0f0f0;transform:scaleX(1.18);transform-origin:left top">y: CIE31</div><div class="t" style="left:960px;top:794px;font-size:20px;color:#f0f0f0;transform:scaleX(1.18);transform-origin:left top">0,3623</div><div class="t" style="left:1073px;top:794px;font-size:20px;color:#f0f0f0;transform:scaleX(1.18);transform-origin:left top">0,3991</div><div class="t" style="left:1186px;top:794px;font-size:20px;color:#f0f0f0;transform:scaleX(1.18);transform-origin:left top">0,4338</div><div class="t" style="left:1300px;top:794px;font-size:20px;color:#f0f0f0;transform:scaleX(1.18);transform-origin:left top">0,4667</div><div class="t" style="left:1413px;top:794px;font-size:20px;color:#f0f0f0;transform:scaleX(1.18);transform-origin:left top">0,5048</div><div class="a" style="left:745px;top:818px;width:775px;height:31px;background:#424242"></div><div class="t" style="left:765px;top:824px;font-size:20px;font-weight:bold;color:#f0f0f0;transform:scaleX(1.18);transform-origin:left top">Y</div><div class="t" style="left:960px;top:824px;font-size:20px;color:#f0f0f0;transform:scaleX(1.18);transform-origin:left top">304,8920</div><div class="t" style="left:1073px;top:824px;font-size:20px;color:#f0f0f0;transform:scaleX(1.18);transform-origin:left top">300,0183</div><div class="t" style="left:1186px;top:824px;font-size:20px;color:#f0f0f0;transform:scaleX(1.18);transform-origin:left top">295,9467</div><div class="t" style="left:1300px;top:824px;font-size:20px;color:#f0f0f0;transform:scaleX(1.18);transform-origin:left top">293,0009</div><div class="t" style="left:1413px;top:824px;font-size:20px;color:#f0f0f0;transform:scaleX(1.18);transform-origin:left top">289,8448</div><div class="a" style="left:745px;top:849px;width:775px;height:31px;background:#848484"></div><div class="t" style="left:765px;top:855px;font-size:20px;font-weight:bold;color:#f0f0f0;transform:scaleX(1.18);transform-origin:left top">Target x:CIE31</div><div class="t" style="left:960px;top:855px;font-size:20px;color:#f0f0f0;transform:scaleX(1.18);transform-origin:left top">0,3344</div><div class="t" style="left:1073px;top:855px;font-size:20px;color:#f0f0f0;transform:scaleX(1.18);transform-origin:left top">0,3564</div><div class="t" style="left:1186px;top:855px;font-size:20px;color:#f0f0f0;transform:scaleX(1.18);transform-origin:left top">0,3773</div><div class="t" style="left:1300px;top:855px;font-size:20px;color:#f0f0f0;transform:scaleX(1.18);transform-origin:left top">0,3969</div><div class="t" style="left:1413px;top:855px;font-size:20px;color:#f0f0f0;transform:scaleX(1.18);transform-origin:left top">0,4193</div><div class="a" style="left:745px;top:879px;width:775px;height:31px;background:#424242"></div><div class="t" style="left:765px;top:885px;font-size:20px;font-weight:bold;color:#f0f0f0;transform:scaleX(1.18);transform-origin:left top">Target y:CIE31</div><div class="t" style="left:960px;top:885px;font-size:20px;color:#f0f0f0;transform:scaleX(1.18);transform-origin:left top">0,3648</div><div class="t" style="left:1073px;top:885px;font-size:20px;color:#f0f0f0;transform:scaleX(1.18);transform-origin:left top">0,4013</div><div class="t" style="left:1186px;top:885px;font-size:20px;color:#f0f0f0;transform:scaleX(1.18);transform-origin:left top">0,4358</div><div class="t" style="left:1300px;top:885px;font-size:20px;color:#f0f0f0;transform:scaleX(1.18);transform-origin:left top">0,4682</div><div class="t" style="left:1413px;top:885px;font-size:20px;color:#f0f0f0;transform:scaleX(1.18);transform-origin:left top">0,5053</div><div class="a" style="left:745px;top:909px;width:775px;height:31px;background:#848484"></div><div class="t" style="left:765px;top:915px;font-size:20px;font-weight:bold;color:#f0f0f0;transform:scaleX(1.18);transform-origin:left top">Target Y</div><div class="t" style="left:960px;top:915px;font-size:20px;color:#f0f0f0;transform:scaleX(1.18);transform-origin:left top">303,0641</div><div class="t" style="left:1073px;top:915px;font-size:20px;color:#f0f0f0;transform:scaleX(1.18);transform-origin:left top">297,7445</div><div class="t" style="left:1186px;top:915px;font-size:20px;color:#f0f0f0;transform:scaleX(1.18);transform-origin:left top">293,6571</div><div class="t" style="left:1300px;top:915px;font-size:20px;color:#f0f0f0;transform:scaleX(1.18);transform-origin:left top">290,4493</div><div class="t" style="left:1413px;top:915px;font-size:20px;color:#f0f0f0;transform:scaleX(1.18);transform-origin:left top">287,3480</div><div class="a" style="left:0;top:968px;width:1920px;height:72px;background:#333"></div><div class="a" style="left:0;top:970px;width:1920px;height:70px;background:linear-gradient(#484848,#2a2a2a)"></div><div class="a" style="left:0;top:970px;width:918px;height:70px;background:#2a2a2a"></div><div class="a" style="left:1px;top:970px;width:51px;height:69px;border-radius:4px;background:linear-gradient(#a8a8a8,#6a6a6a)"></div><div class="a" style="left:17px;top:971px;width:20px;height:20px;border-radius:50%;background:linear-gradient(#6e6e6e,#9a9a9a)"></div><svg class="a" style="left:21px;top:975px" width="12" height="8"><path d="M1 7h10L6 1z" fill="#222"/></svg><div class="a" style="left:7px;top:999px;width:40px;height:35px;border-radius:4px;background:#ffff00;border:1px solid #a8a800"></div><div class="a" style="left:59px;top:970px;width:169px;height:69px;border-radius:4px;background:linear-gradient(#a6a6a6,#7a7a7a 55%,#5a5a5a)"></div><div class="a" style="left:65px;top:976px;width:157px;height:41px;border-radius:4px;background:#c2c2a7;border:1px solid #6e6e5a;box-shadow:inset 1px 1px 1px rgba(0,0,0,0.35),inset -1px -1px 1px rgba(255,255,255,0.35)"></div><div class="t" style="left:59px;top:1024px;width:169px;text-align:center;font-size:12px;font-weight:bold;color:#262626">20%</div><div class="a" style="left:231px;top:970px;width:169px;height:69px;border-radius:4px;background:linear-gradient(#a6a6a6,#7a7a7a 55%,#5a5a5a)"></div><div class="a" style="left:237px;top:976px;width:157px;height:41px;border-radius:4px;background:#c3c186;border:1px solid #6e6e5a;box-shadow:inset 1px 1px 1px rgba(0,0,0,0.35),inset -1px -1px 1px rgba(255,255,255,0.35)"></div><div class="t" style="left:231px;top:1024px;width:169px;text-align:center;font-size:12px;font-weight:bold;color:#262626">40%</div><div class="a" style="left:403px;top:970px;width:169px;height:69px;border-radius:4px;background:linear-gradient(#a6a6a6,#7a7a7a 55%,#5a5a5a)"></div><div class="a" style="left:409px;top:976px;width:157px;height:41px;border-radius:4px;background:#c4c26c;border:1px solid #6e6e5a;box-shadow:inset 1px 1px 1px rgba(0,0,0,0.35),inset -1px -1px 1px rgba(255,255,255,0.35)"></div><div class="t" style="left:403px;top:1024px;width:169px;text-align:center;font-size:12px;font-weight:bold;color:#262626">60%</div><div class="a" style="left:574px;top:970px;width:170px;height:69px;border-radius:4px;background:linear-gradient(#a6a6a6,#7a7a7a 55%,#5a5a5a)"></div><div class="a" style="left:580px;top:976px;width:158px;height:41px;border-radius:4px;background:#c4c14a;border:1px solid #6e6e5a;box-shadow:inset 1px 1px 1px rgba(0,0,0,0.35),inset -1px -1px 1px rgba(255,255,255,0.35)"></div><div class="t" style="left:574px;top:1024px;width:170px;text-align:center;font-size:12px;font-weight:bold;color:#262626">80%</div><div class="a" style="left:746px;top:970px;width:170px;height:69px;border-radius:4px;background:linear-gradient(#1c1c1c,#2a2a2a 50%,#333)"></div><div class="a" style="left:751px;top:975px;width:160px;height:42px;border-radius:5px;background:#c4c000;border:1px solid #5a5a00"></div><div class="t" style="left:746px;top:1024px;width:170px;text-align:center;font-size:12.5px;font-weight:bold;color:#fff">100%</div><div class="a" style="left:1564px;top:970px;width:56px;height:70px;border-radius:5px 5px 0 0;background:linear-gradient(#a8a8a8,#909090 30%,#8a8a8a 31%,#707070)"></div><div class="a" style="left:1564px;top:990px;width:56px;height:2px;background:#555"></div><div class="a" style="left:1581px;top:972px;width:22px;height:18px;border-radius:50%;background:linear-gradient(#777,#aaa)"></div><svg class="a" style="left:1586px;top:976px" width="12" height="8"><path d="M1 7h10L6 1z" fill="#2a2a2a"/></svg><div class="a" style="left:1575px;top:998px;width:34px;height:34px;border-radius:5px;background:linear-gradient(#cfcfcf 50%,#a8a8a8 50%);border:3px solid #1a1a1a"></div><div class="a" style="left:1584px;top:1007px;width:16px;height:16px;background:linear-gradient(#2a2a2a 50%,#000 50%)"></div><div class="a" style="left:1619px;top:970px;width:301px;height:70px;background:#1e1e1e"></div><div class="a" style="left:1620px;top:970px;width:51px;height:33px;background:linear-gradient(#acacac,#7c7c7c)"></div><div class="a" style="left:1634px;top:975px;width:22px;height:22px;border-radius:50%;background:linear-gradient(#7a7a7a,#a8a8a8)"></div><svg class="a" style="left:1635px;top:976px" width="21" height="21"><rect x="6" y="6" width="9" height="9" fill="#2e2e2e"/></svg><div class="a" style="left:1673px;top:970px;width:49px;height:33px;background:linear-gradient(#acacac,#7c7c7c)"></div><div class="a" style="left:1686px;top:975px;width:22px;height:22px;border-radius:50%;background:linear-gradient(#7a7a7a,#a8a8a8)"></div><svg class="a" style="left:1687px;top:976px" width="21" height="21"><path d="M7 5l10 6-10 6z" fill="#2e2e2e"/></svg><div class="a" style="left:1724px;top:970px;width:49px;height:33px;background:linear-gradient(#6e6e6e,#4e4e4e)"></div><div class="a" style="left:1738px;top:975px;width:22px;height:22px;border-radius:50%;background:linear-gradient(#555,#777)"></div><svg class="a" style="left:1738px;top:976px" width="21" height="21"><path d="M6 4h-2v13h2M14 4h2v13h-2" fill="none" stroke="#2e2e2e" stroke-width="2.2"/><circle cx="8.5" cy="10.5" r="1" fill="#2e2e2e"/><circle cx="11.5" cy="10.5" r="1" fill="#2e2e2e"/></svg><div class="a" style="left:1775px;top:970px;width:49px;height:33px;background:linear-gradient(#acacac,#7c7c7c)"></div><div class="a" style="left:1788px;top:975px;width:22px;height:22px;border-radius:50%;background:linear-gradient(#7a7a7a,#a8a8a8)"></div><svg class="a" style="left:1789px;top:976px" width="21" height="21"><path d="M10 10.5c-2-3-6.5-3-6.5 0s4.5 3 6.5 0 6.5-3 6.5 0-4.5 3-6.5 0" fill="none" stroke="#2e2e2e" stroke-width="2.4"/></svg><div class="a" style="left:1826px;top:970px;width:48px;height:33px;background:linear-gradient(#acacac,#7c7c7c)"></div><div class="a" style="left:1839px;top:975px;width:22px;height:22px;border-radius:50%;background:linear-gradient(#7a7a7a,#a8a8a8)"></div><svg class="a" style="left:1840px;top:976px" width="21" height="21"><path d="M15.5 8a6 6 0 0 0-10.5 0.5M5 13a6 6 0 0 0 10.5-0.5" fill="none" stroke="#2e2e2e" stroke-width="2.4"/><path d="M17 4v6h-6z M3 17v-6h6z" fill="#2e2e2e"/></svg><div class="a" style="left:1876px;top:970px;width:44px;height:33px;background:linear-gradient(#353535,#2a2a2a)"></div><div class="a" style="left:1888px;top:975px;width:24px;height:24px;border-radius:50%;background:#2c2c2c"></div><div class="a" style="left:1620px;top:1005px;width:154px;height:35px;border-radius:3px 0 0 0;background:linear-gradient(#b4b4b4,#8e8e8e)"></div><div class="a" style="left:1775px;top:1005px;width:145px;height:35px;background:linear-gradient(#b4b4b4,#8e8e8e)"></div><div class="t" style="left:1685px;top:1010px;font-size:25px;font-weight:bold;color:#2c2c2c;letter-spacing:-1px">Back</div><div class="t" style="left:1806px;top:1010px;font-size:25px;font-weight:bold;color:#2c2c2c;letter-spacing:1.2px">Next</div><div class="a" style="left:1644px;top:1011px;width:22px;height:22px;border-radius:50%;background:linear-gradient(#8a8a8a,#b0b0b0)"></div><svg class="a" style="left:1646px;top:1013px" width="18" height="18"><path d="M9 4l-5 5 5 5M14 4l-5 5 5 5" fill="none" stroke="#333" stroke-width="1.8"/></svg><div class="a" style="left:1885px;top:1011px;width:22px;height:22px;border-radius:50%;background:linear-gradient(#8a8a8a,#b0b0b0)"></div><svg class="a" style="left:1887px;top:1013px" width="18" height="18"><path d="M4 4l5 5-5 5M9 4l5 5-5 5" fill="none" stroke="#333" stroke-width="1.8"/></svg></body></html>
